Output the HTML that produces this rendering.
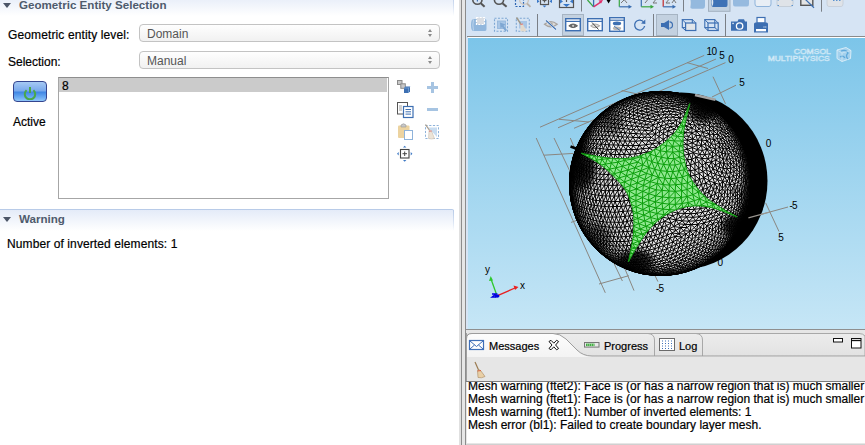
<!DOCTYPE html>
<html><head><meta charset="utf-8">
<style>
*{margin:0;padding:0;box-sizing:border-box}
html,body{width:865px;height:445px;overflow:hidden;background:#fff;font-family:"Liberation Sans",sans-serif;color:#000}
.a{position:absolute}
.t{position:absolute;white-space:pre;font-size:12px;line-height:14px;-webkit-text-stroke:0.2px #000}
.hdr{position:absolute;left:0;width:454px;background:linear-gradient(#e4ebf8,#fff);border-top-right-radius:2px}
.hdr::after{content:"";position:absolute;right:0;top:0;width:1px;height:100%;background:linear-gradient(#b8cbe8,rgba(184,203,232,0))}
.tri{position:absolute;width:0;height:0;border-left:4px solid transparent;border-right:4px solid transparent;border-top:5px solid #4b5567}
.htxt{position:absolute;white-space:pre;font-size:11.6px;font-weight:bold;color:#4e5b6d;line-height:14px}
.combo{position:absolute;left:139px;width:301px;height:18px;border:1px solid #c3c3c3;border-radius:4px;background:linear-gradient(#fefefe,#f1f1f1)}
.combo .v{position:absolute;left:7px;top:2px;font-size:12px;color:#555;line-height:14px}
.combo .up{position:absolute;left:288px;top:4px;width:0;height:0;border-left:2.5px solid transparent;border-right:2.5px solid transparent;border-bottom:3px solid #8a8a8a}
.combo .dn{position:absolute;left:288px;top:9px;width:0;height:0;border-left:2.5px solid transparent;border-right:2.5px solid transparent;border-top:3px solid #8a8a8a}
</style></head><body>
<!-- LEFT PANEL -->
<div class="hdr" style="top:-6px;height:22px;border-top:1px solid #b8cbe8"></div>
<div class="tri" style="left:3px;top:3px"></div>
<div class="htxt" style="left:19px;top:-2px">Geometric Entity Selection</div>

<div class="t" style="left:8px;top:28px;letter-spacing:0.12px">Geometric entity level:</div>
<div class="combo" style="top:24px"><div class="v">Domain</div><div class="up"></div><div class="dn"></div></div>
<div class="t" style="left:8px;top:55px">Selection:</div>
<div class="combo" style="top:51px"><div class="v">Manual</div><div class="up"></div><div class="dn"></div></div>

<!-- power button -->
<div class="a" style="left:13px;top:81px;width:34px;height:21px;border:1px solid #34458f;border-radius:4px;background:linear-gradient(#a6c9f3 0%,#79a9ec 47%,#3f86e4 53%,#6aaaf2 80%,#90c6f8 100%)"></div>
<svg class="a" style="left:22px;top:86px" width="16" height="14" viewBox="0 0 16 14"><path d="M4.6 4.2 A5.2 5.2 0 1 0 11.4 4.2" fill="none" stroke="#4aa84a" stroke-width="2"/><path d="M8 1 V7" stroke="#4aa84a" stroke-width="2"/></svg>
<div class="t" style="left:13px;top:115px">Active</div>

<!-- listbox -->
<div class="a" style="left:58px;top:77px;width:331px;height:122px;border:1px solid #a6a6a6;border-top-color:#8e8e8e;background:#fff"></div>
<div class="a" style="left:59px;top:78px;width:328px;height:14px;background:#cbcbcb"></div>
<div class="t" style="left:62px;top:79px">8</div>

<svg class="a" style="left:393px;top:76px" width="50" height="90" viewBox="393 76 50 90">
<g fill="none">
<rect x="397.5" y="80.5" width="4.5" height="4" fill="#c8c8c8" stroke="#8a8a8a" stroke-width="1"/>
<rect x="400.8" y="83.8" width="4.5" height="4.5" fill="#c8c8c8" stroke="#8a8a8a" stroke-width="1"/>
<path d="M404 88 L405.5 86.5 H410 V91.5 L408.5 93 H404Z" fill="#3d6fb2"/>
<path d="M404 88 H408.5 L410 86.5 M408.5 88 V93" stroke="#8fb6e0" stroke-width="0.6"/>
<rect x="427" y="86" width="11" height="3" fill="#a6c4e2"/>
<rect x="431" y="82" width="3" height="11" fill="#a6c4e2"/>
<rect x="397.5" y="102.5" width="10" height="11.5" fill="#fff" stroke="#555" stroke-width="1"/>
<path d="M399 106 h3 M399 108 h3 M399 110 h3" stroke="#8a8a8a" stroke-width="0.8"/>
<rect x="403.5" y="106.5" width="9.5" height="11" fill="#fff" stroke="#3d6fb2" stroke-width="1.2"/>
<path d="M405.5 109.5 h5.5 M405.5 111.8 h5.5 M405.5 114.1 h5.5" stroke="#3d6fb2" stroke-width="1"/>
<rect x="427" y="108" width="11" height="3" fill="#a6c4e2"/>
<rect x="398" y="125.5" width="11.5" height="12.5" fill="#ecd3a0" rx="1"/>
<path d="M401 127 V125 Q403.5 122.5 406 125 V127Z" fill="#c8c8c8" stroke="#999" stroke-width="0.6"/>
<rect x="404.5" y="130.5" width="8" height="9" fill="#fff" stroke="#8fb3da" stroke-width="1"/>
<rect x="425.5" y="125.5" width="13" height="13" stroke="#8fb3da" stroke-width="1" stroke-dasharray="2.2 1.5"/>
<path d="M428 127.5 H437 V137Z" fill="#c8dcf0"/>
<line x1="425.5" y1="124.5" x2="430" y2="131" stroke="#a89c8c" stroke-width="1.3"/>
<path d="M429 130.5 Q430.5 129.5 431.5 131 L434.5 138.5 Q431.5 139.5 428.5 138.5Z" fill="#ece4d8" stroke="#c0b4a4" stroke-width="0.5"/>
<line x1="429" y1="131.3" x2="431.8" y2="131" stroke="#e07070" stroke-width="0.8"/>
<rect x="400.5" y="149.5" width="8.5" height="8.5" fill="#fff" stroke="#444" stroke-width="1.1"/>
<path d="M404.7 151.5 V156 M402.5 153.7 H407" stroke="#444" stroke-width="1"/>
<path d="M403 147.5 L404.7 145.8 L406.4 147.5Z M403 160 L404.7 161.7 L406.4 160Z M398.7 152 L397 153.7 L398.7 155.4Z M410.7 152 L412.4 153.7 L410.7 155.4Z" fill="#3d78c4"/>
</g></svg>
<!-- warning header -->
<div class="hdr" style="top:209px;height:22px;border-top:1px solid #b8cbe8"></div>
<div class="tri" style="left:3px;top:217px"></div>
<div class="htxt" style="left:19px;top:212px">Warning</div>
<div class="t" style="left:7px;top:237px;letter-spacing:0.1px">Number of inverted elements: 1</div>

<!-- sash -->
<div class="a" style="left:459px;top:0;width:7px;height:445px;background:#e6e6e6;border-left:2px solid #e0e0e0"></div>
<div class="a" style="left:461px;top:0;width:1px;height:445px;background:#8c8c8c"></div>
<div class="a" style="left:465px;top:0;width:1px;height:445px;background:#8c8c8c"></div>

<!-- RIGHT: toolbar -->
<div class="a" style="left:466px;top:0;width:399px;height:37px;background:#d6e4f4"></div>
<div class="a" style="left:467px;top:36px;width:398px;height:1px;background:#8a8a8a"></div>
<div class="a" style="left:467px;top:37px;width:398px;height:1px;background:#fff"></div>

<svg class="a" style="left:466px;top:0" width="399" height="37" viewBox="466 0 399 37">
<g fill="none" stroke-linecap="butt">
<!-- row1 -->
<circle cx="477.4" cy="-0.3" r="4.6" stroke="#555" stroke-width="1.6"/>
<line x1="480.8" y1="3.2" x2="484.6" y2="6.8" stroke="#555" stroke-width="2"/>
<line x1="477.4" y1="-2" x2="477.4" y2="1.5" stroke="#3a6db0" stroke-width="1.2"/>
<circle cx="499" cy="-0.3" r="4.6" stroke="#555" stroke-width="1.6"/>
<line x1="502.4" y1="3.2" x2="506.6" y2="6.8" stroke="#555" stroke-width="2"/>
<rect x="515.5" y="-4" width="8" height="10.5" stroke="#2e66b2" stroke-width="1.2" stroke-dasharray="2 1.5"/>
<circle cx="524" cy="0" r="4.4" stroke="#cfc6bd" stroke-width="1.4"/>
<line x1="527" y1="3.5" x2="530.5" y2="6.8" stroke="#b8b0a8" stroke-width="1.8"/>
<rect x="540.5" y="-4" width="8" height="8.5" stroke="#555" stroke-width="1.2"/>
<line x1="544.5" y1="-2" x2="544.5" y2="2.5" stroke="#555" stroke-width="1.2"/>
<line x1="542.5" y1="0.5" x2="546.5" y2="0.5" stroke="#555" stroke-width="1.2"/>
<path d="M537 -1 L539.5 1.5 L537 3Z M552 -1 L549.5 1.5 L552 3Z M542.5 5.5 L546.5 5.5 L544.5 7.5Z" fill="#3a78c8" stroke="none"/>
<rect x="559.5" y="-4" width="14" height="11.5" stroke="#555" stroke-width="1.2"/>
<line x1="566.5" y1="-2" x2="566.5" y2="2" stroke="#555" stroke-width="1.2"/>
<path d="M560 -1 L563 1.5 L560 3.5Z M573 -1 L570 1.5 L573 3.5Z M563 4 L570 4 L566.5 7Z" fill="#3a78c8" stroke="none"/>
<line x1="581.5" y1="0" x2="581.5" y2="11.5" stroke="#7a7f86" stroke-width="1"/>
<line x1="593.6" y1="6.9" x2="587.5" y2="0" stroke="#3aa640" stroke-width="1.3"/>
<line x1="593.6" y1="6.9" x2="593.6" y2="-2" stroke="#3a6db0" stroke-width="1.3"/>
<line x1="593.6" y1="6.9" x2="601" y2="1.8" stroke="#e0306a" stroke-width="1.5"/>
<path d="M603 0 L598.5 0.5 L601 3.5Z" fill="#e0306a" stroke="none"/>
<path d="M606 -1 L611.2 -1 L608.6 3.5Z" fill="#000" stroke="none"/>
<line x1="619.3" y1="-2" x2="619.3" y2="6.8" stroke="#3aa640" stroke-width="1.2"/>
<line x1="619.3" y1="6.8" x2="629.5" y2="6.8" stroke="#3a6db0" stroke-width="1.2"/>
<path d="M632 6.8 L628.5 4.8 L628.5 8.8Z" fill="#3a6db0" stroke="none"/>
<line x1="641.3" y1="-2" x2="641.3" y2="6.8" stroke="#3a6db0" stroke-width="1.2"/>
<line x1="641.3" y1="6.8" x2="651.5" y2="6.8" stroke="#3aa640" stroke-width="1.2"/>
<path d="M654 6.8 L650.5 4.8 L650.5 8.8Z" fill="#3aa640" stroke="none"/>
<line x1="663.2" y1="-2" x2="663.2" y2="6.8" stroke="#c0282a" stroke-width="1.2"/>
<line x1="663.2" y1="6.8" x2="673.5" y2="6.8" stroke="#3a6db0" stroke-width="1.2"/>
<path d="M676 6.8 L672.5 4.8 L672.5 8.8Z" fill="#3a6db0" stroke="none"/>
<path d="M622 -3 L627 3 M627 -3 L621 3 M644 -3 L647 0 M650 -3 L645 3 M653 -2 L657 -2 L653 3 L657 3 M666 -2 L670 -2 L666 3 L670 3 M672 -3 L676 3 M676 -3 L672 3" stroke="#777" stroke-width="1"/>
<line x1="683.5" y1="0" x2="683.5" y2="11.5" stroke="#7a7f86" stroke-width="1"/>
<path d="M692 -3 H703 Q705 -3 705 0 V6 Q705 8.7 703 8.7 H692 Q690 8.7 690 6 V0 Q690 -3 692 -3Z" fill="#94b9de" stroke="none"/>
<path d="M690 -2 Q688.5 3 690 8 Q691.5 3 690 -2Z" fill="#dfe8f2" stroke="none"/>
<rect x="708.5" y="-1" width="21.5" height="12.3" fill="#c4d2e1" stroke="#a2b0bf" stroke-width="1"/>
<path d="M713 -3 H726 Q727.5 -3 727.5 0 V5 Q727.5 7 726 7 H713 Q711.5 7 711.5 5 V0 Q711.5 -3 713 -3Z" fill="#3f72b6" stroke="none"/>
<path d="M712.5 -2 Q711 2 712.5 6.5 Q714 2 712.5 -2Z" fill="#dfe8f2" stroke="none"/>
<path d="M735 -3 H747 Q749 -3 749 0 V4 Q749 6.5 747 6.5 H735 Q733 6.5 733 4 V0 Q733 -3 735 -3Z" fill="#96badf" stroke="none"/>
<path d="M757 -3 H769 Q771 -3 771 0 V4 Q771 6.5 769 6.5 H757 Q755 6.5 755 4 V0 Q755 -3 757 -3Z" fill="#e8eef5" stroke="#8fb3da" stroke-width="1"/>
<path d="M779 -3 H791 Q793 -3 793 0 V4 Q793 6.5 791 6.5 H779 Q777 6.5 777 4 V0 Q777 -3 779 -3Z" fill="#dfe3e8" stroke="#bfc8d2" stroke-width="0.8"/>
<path d="M777.5 5.5 h1.5 M791.5 5.5 h1.5 M777.5 0 h1.5 M791.5 0 h1.5" stroke="#5b93d0" stroke-width="1.2"/>
<rect x="800.8" y="-3" width="12" height="8.3" fill="#e4e4e4" stroke="#555" stroke-width="1.4"/>
<line x1="805.5" y1="-0.5" x2="814" y2="7.8" stroke="#3a6db0" stroke-width="1.2"/>
<line x1="821.5" y1="0" x2="821.5" y2="11.7" stroke="#7a7f86" stroke-width="1"/>
<path d="M829 -3 H841 Q843 -3 843 0 V4 Q843 6.5 841 6.5 H829 Q827 6.5 827 4 V0 Q827 -3 829 -3Z" fill="#dfe3e8" stroke="#c4ccd5" stroke-width="0.8"/>
<path d="M833 0.5 h1.5 M836 0.5 h1.5 M839 0.5 h1.5" stroke="#5b93d0" stroke-width="1.2"/>

<!-- row2 -->
<path d="M473.5 19 H485 Q486.5 19 486.5 21 V29 Q486.5 31 485 31 H473.5 Q471 31 471 25 Q471 19 473.5 19Z" fill="#91b7dd" stroke="none"/>
<path d="M473.5 19.5 Q472.2 25 473.5 30.5" stroke="#c8dbef" stroke-width="0.8"/>
<rect x="476.5" y="17.5" width="8" height="7" fill="#d9dde3" stroke="#fff" stroke-width="1.2" stroke-dasharray="2 1.2"/>
<rect x="494.5" y="18.3" width="13" height="13" stroke="#7ea7d3" stroke-width="1.1" stroke-dasharray="2 1.5"/>
<rect x="497.5" y="21" width="8" height="7.5" fill="#a9c6e6" stroke="#8fb3da" stroke-width="0.8"/>
<path d="M500 22.5 L500.5 28.5 L502 27 L505.5 31.5 L507 30 L503.5 25.8 L505.5 24.5Z" fill="#7ea7d3" stroke="none"/>
<rect x="516.3" y="18.3" width="13" height="13" stroke="#7ea7d3" stroke-width="1.1" stroke-dasharray="2 1.5"/>
<rect x="519" y="21" width="8" height="7.5" fill="#a9c6e6" stroke="none"/>
<line x1="516.5" y1="17.5" x2="521.5" y2="25" stroke="#a09888" stroke-width="1.4"/>
<path d="M520.5 24 Q522 23 523 24.5 L526.5 31 Q523.5 32 520.5 31 Z" fill="#e2d9cc" stroke="none"/>
<line x1="520.5" y1="24.5" x2="523" y2="24" stroke="#e06060" stroke-width="0.8"/>
<line x1="537.5" y1="14" x2="537.5" y2="36" stroke="#7a7f86" stroke-width="1"/>
<path d="M544.5 24.2 Q550.8 19 557.2 24.2 Q550.8 29.4 544.5 24.2Z" fill="#dcdad8" stroke="#a8a4a0" stroke-width="1.3"/>
<ellipse cx="550.8" cy="24.2" rx="2" ry="1.8" fill="#a8a4a0"/>
<line x1="546" y1="20.5" x2="556" y2="29.5" stroke="#fff" stroke-width="2"/>
<line x1="546" y1="20.5" x2="556" y2="29.5" stroke="#3a6db0" stroke-width="1.1"/>
<rect x="562.5" y="14.5" width="21" height="21" fill="#c3d1e0" stroke="#a6b4c3" stroke-width="1"/>
<rect x="565.7" y="18.7" width="14.6" height="12" fill="#fff" stroke="#3d6fb2" stroke-width="1.4"/>
<line x1="565.7" y1="21.4" x2="580.3" y2="21.4" stroke="#3d6fb2" stroke-width="1.2"/>
<path d="M568.8 25.8 Q573.1 22.2 577.5 25.8 Q573.1 29.4 568.8 25.8Z" fill="#6a6a6a" stroke="#555" stroke-width="0.9"/>
<circle cx="573.1" cy="25.8" r="1.1" fill="#ccc"/>
<rect x="587.7" y="18.7" width="14.6" height="12" fill="#fff" stroke="#3d6fb2" stroke-width="1.4"/>
<line x1="587.7" y1="21.4" x2="602.3" y2="21.4" stroke="#3d6fb2" stroke-width="1.2"/>
<path d="M590.8 25.8 Q595.1 22.2 599.5 25.8 Q595.1 29.4 590.8 25.8Z" fill="#e4e2e0" stroke="#b0aca8" stroke-width="1.1"/>
<line x1="592" y1="22.5" x2="598.5" y2="29.5" stroke="#444" stroke-width="1"/>
<rect x="609.7" y="17.7" width="14.6" height="13.6" fill="#fff" stroke="#3d6fb2" stroke-width="1.4"/>
<line x1="609.7" y1="20.2" x2="624.3" y2="20.2" stroke="#3d6fb2" stroke-width="1.2"/>
<ellipse cx="617" cy="23.4" rx="4.2" ry="1.9" fill="#3d6fb2"/>
<ellipse cx="617" cy="28.3" rx="4.2" ry="1.9" fill="#bbb7b3"/>
<line x1="614" y1="26" x2="620" y2="30.5" stroke="#3d6fb2" stroke-width="0.9"/>
<path d="M643.3 21.6 A5 5 0 1 0 644.6 26" stroke="#3d6fb2" stroke-width="1.3"/>
<path d="M645.3 19.6 L645.3 24 L641 23.5Z" fill="#3d6fb2" stroke="none"/>
<line x1="653.5" y1="14" x2="653.5" y2="36" stroke="#7a7f86" stroke-width="1"/>
<rect x="656.5" y="14.5" width="21" height="21" fill="#c3d1e0" stroke="#a6b4c3" stroke-width="1"/>
<path d="M661 23 H664 L669 20 V30 L664 27 H661Z" fill="#3d6fb2" stroke="none"/>
<path d="M669.5 21.8 A3 3.2 0 0 1 669.5 28.2" stroke="#3d6fb2" stroke-width="1.2"/>
<rect x="682.3" y="19.6" width="10" height="8" fill="none" stroke="#3d6fb2" stroke-width="1.1"/>
<rect x="685.6" y="23" width="10.2" height="7.5" fill="#e2e6ea" stroke="#3d6fb2" stroke-width="1.2"/>
<path d="M682.3 19.6 L685.6 23 M692.3 19.6 L695.8 23 M682.3 27.6 L685.6 30.5" stroke="#3d6fb2" stroke-width="1"/>
<rect x="704.8" y="19.6" width="10" height="8" fill="none" stroke="#3d6fb2" stroke-width="1.1"/>
<rect x="708" y="23" width="10.2" height="7.5" fill="none" stroke="#3d6fb2" stroke-width="1.2"/>
<path d="M704.8 19.6 L708 23 M714.8 19.6 L718.2 23 M704.8 27.6 L708 30.5 M714.8 27.6 L718.2 30.5" stroke="#3d6fb2" stroke-width="1"/>
<line x1="725.5" y1="14" x2="725.5" y2="36" stroke="#7a7f86" stroke-width="1"/>
<path d="M731 21.6 H737.5 L738.5 19.3 H744 L745 21.6 H747 V30.7 H731Z" fill="#3d6fb2" stroke="none"/>
<circle cx="739.6" cy="26" r="3.2" fill="#3d6fb2" stroke="#fff" stroke-width="1.3"/>
<rect x="732.4" y="22.8" width="1.3" height="1.3" fill="#fff" stroke="none"/>
<rect x="757" y="17.5" width="8" height="5.5" fill="#fff" stroke="#3d6fb2" stroke-width="1.2"/>
<path d="M755.5 22.5 H766.5 Q768 22.5 768 24 V32.5 H754 V24 Q754 22.5 755.5 22.5Z" fill="#3d6fb2" stroke="none"/>
<rect x="756" y="29" width="10" height="2.3" fill="#fff" stroke="none"/>
<rect x="763.5" y="26.5" width="1" height="1" fill="#fff" stroke="none"/>
<rect x="765.3" y="26.5" width="1" height="1" fill="#fff" stroke="none"/>
</g></svg>

<!-- viewport -->
<div class="a" style="left:466px;top:37px;width:2px;height:292px;background:#d6e4f4"></div>
<div class="a" style="left:468px;top:38px;width:397px;height:291px;background:linear-gradient(#7cc5e9,#c6e6f6)"></div>
<!--VIEW--><svg class="a" style="left:468px;top:38px" width="397" height="291" viewBox="468 38 397 291">
<defs>
<path id="mesh" transform="scale(0.1)" d="M5850 2224l-21 -12M5797 1679l-16 -11M7327 1577l20 -21M7346 1353l29 44M6407 1006l-27 -10M5822 1857l-22 -10M6725 1996l16 43M7092 2337l-36 36M6876 1094l-7 -26M5854 1306l-25 40M6123 1751l-39 -6M6053 1908l6 51M6426 1044l16 -28M6870 2685l-21 19M6995 1038l-21 -17M6632 1336l0 58M7508 1803l3 50M6975 2617l28 4M6745 925l-50 -7M6128 1068l-17 2M6739 2495l30 25M7327 1577l10 49M6863 957l-3 -6M7368 1326l31 51M6895 2688l-46 16M6439 2743l18 0M5903 2390l-19 -11M7443 2094l-10 38M6276 2111l-26 51M6062 1184l-41 42M6523 1310l-74 -7M6126 1854l7 53M6929 1391l-8 38M7200 1845l24 39M7234 2126l-47 20M5713 1812l2 56M6485 2710l-16 12M5865 1306l-31 42M6514 2457l31 31M6702 1693l-3 52M7317 2068l-10 48M7418 1685l15 -41M6380 965l-43 15M5731 1575l-12 40M6508 2573l-50 10M6736 1018l12 -18M7314 1266l22 19M7501 1748l5 -13M7065 1127l-37 -33M5884 1400l5 -43M7317 2267l-23 37M6919 2512l-41 24M6313 2644l-29 -2M6929 1391l-55 10M7434 1809l11 68M6948 995l-24 -13M6295 1142l-44 -6M7418 1685l0 53M6780 929l-7 -3M6324 1635l-11 47M6371 941l43 -9M6380 2645l-14 18M6274 2571l-5 29M6344 2686l-29 -4M6387 1377l-57 -4M5750 1512l-13 37M7239 1987l29 28M6692 2289l30 40M5997 1395l-25 46M7232 1383l22 52M5837 1698l-20 -8M6464 936l-15 -5M7169 1873l-16 65M6640 1724l-53 -22M5879 2348l-19 -10M6845 2399l-44 26M7352 2145l-15 39M7158 2260l-33 38M6102 2584l-29 -13M7048 1548l-52 -3M6894 1129l-59 -35M6599 990l17 -18M6754 2732l-19 11M7515 1769l1 -22M6102 2596l-32 -16M5898 1986l-17 55M5772 1539l-9 38M7085 1122l-19 -32M6572 1038l-43 -20M5905 1360l10 -46M7005 2456l-15 47M6417 2740l-32 -8M6768 1258l-23 32M5868 2383l-6 -9M5976 2157l-11 51M6758 2086l-65 -11M6129 2557l28 28M6894 963l-34 -12M6061 1100l-4 -2M6074 2017l-39 -5M7195 1473l26 60M5702 1920l7 62M6874 2424l28 24M6447 1371l-30 36M6658 2757l-21 2M6338 2697l-6 7M7108 1724l20 54M7464 1646l17 57M7271 1290l-26 -46M6013 1135l-47 41M7444 2203l-18 40M6768 1258l-39 -27M7200 2012l-17 55M7340 1673l26 -21M6585 1854l-58 -28M7287 1222l-17 -22M6682 2440l33 28M7256 2447l-21 35M5755 1576l-17 38M6326 2405l-17 49M6730 1037l-53 -4M6922 2603l-18 31M7503 2010l-4 17M6367 2700l-29 -3M6456 2747l22 4M6615 2717l-19 15M7089 1095l30 12M6295 2261l23 48M6426 1044l-34 -13M6563 1284l-11 56M6364 1828l-50 7M5746 1613l-8 1M7238 2502l14 -13M5937 1309l-22 5M6803 2632l-17 29M6353 2676l25 15M7267 1593l-31 41M7258 2383l-11 36M7340 1673l-1 43M5804 1391l0 6M7497 2033l6 -23M6329 1456l-15 39M6089 1449l-37 -5M7508 1803l7 33M6748 2364l26 33M6888 2212l23 34M6184 1591l-11 52M7141 2416l27 5M6895 970l29 6M7134 1897l19 41M7302 1322l12 -10M6093 2274l-40 -9M7234 2126l-21 44M7285 2454l-33 35M7272 1204l-29 -27M6217 2539l27 33M6226 1018l-16 -2M6730 919l35 6M6463 2376l-50 11M6607 2422l29 34M7027 1323l-64 -12M6684 2751l-47 4M6736 1018l-39 -25M7061 1048l38 19M6814 1659l-9 52M6302 1075l-32 -12M5992 1263l9 -40M6004 2352l0 44M6276 1456l-26 -46M5750 1991l11 63M6243 1544l-11 50M6144 1960l-31 53M6289 2003l14 52M6219 2673l18 9M7204 1332l9 -22M6821 939l35 7M6596 2732l33 9M6244 1024l27 -28M5892 2415l26 30M5972 2381l6 41M5924 2243l-26 -5M5746 1529l-15 46M6285 2686l-26 -5M5702 1689l7 -28M7348 1321l-2 -14M6575 2520l29 28M5805 1441l-6 -5M6271 2215l-23 53M6869 1068l-41 -26M6874 1493l18 48M6123 1148l-28 -3M6489 920l-50 8M7423 2236l-15 31M5876 1562l-25 -3M6705 2662l-19 28M6730 2751l21 -3M6599 990l-37 -15M6754 1806l-3 54M7101 1388l11 49M6758 2086l-42 31M7500 1655l-2 -20M7024 1657l-37 26M5694 1821l-3 9M7472 1764l9 60M5862 2374l-24 -40M6518 917l-54 6M5838 1648l-21 -8M6837 1212l1 -47M6760 2200l-70 -15M7380 1356l29 51M5960 2005l-18 48M7361 1315l-14 -22M6716 2117l16 41M5957 2488l24 22M7513 1724l4 48M7252 2489l7 -9M7180 1978l-47 24M6585 1854l-54 27M5943 1892l8 58M5963 1177l-2 3M7516 1747l1 25M6337 2493l-13 42M6830 1501l-34 48M5724 1983l11 55M6458 2583l-18 33M7283 1540l25 -15M5862 2374l0 -8M6694 1846l-57 -17M6180 1016l-7 6M7517 1772l-3 28M6714 1946l11 50M6667 2144l23 41M5898 2093l-14 48M6274 973l-48 20M6334 1297l-17 -38M6214 2598l-28 -6M6550 2139l23 49M6095 1145l22 -38M6434 2131l-45 11M7018 1059l-23 -21M6427 980l-47 16M6698 2514l-20 43M5760 2097l-11 0M6186 2539l31 34M6228 1093l16 -35M6895 970l-1 -7M6046 2064l-33 -2M7381 1345l30 52M5815 2302l-23 -44M6425 1485l-17 46M6127 2499l30 37M7431 2186l-3 25M6581 2075l-67 -26M6262 1029l26 -29M6563 2752l-49 -2M6803 2719l-23 15M7186 2462l23 -1M5930 1217l-38 42M7460 2140l-2 21M5731 2087l-4 1M6310 1006l-22 -6M6747 1541l-46 -10M7410 2266l-21 35M6710 1643l-8 50M6430 2235l-50 13M7293 2041l-13 54M7394 1670l21 -31M6663 1978l-61 -22M6936 2697l14 -5M6226 993l-2 1M6596 2732l-18 12M5872 2271l23 49M5785 1627l-17 35M6801 2425l-10 47M6223 1370l-17 -45M6990 2503l-43 28M5761 2054l-1 43M6976 2438l29 18M7021 1043l28 9M6276 1456l-45 -2M6974 1011l-26 -16M6431 927l-8 2M6389 2679l-36 -3M7399 1441l22 47M6023 1958l-24 49M6821 939l-5 -4M5935 1834l-27 55M7027 2352l-13 57M6748 2708l28 7M6454 991l22 -22M7040 2649l11 -8M7428 1862l17 15M5915 1314l-26 43M7133 1343l36 42M6643 1675l-45 -20M5697 1944l6 47M6816 935l-43 -9M6061 1138l24 -36M5747 1576l-17 40M6700 2382l-45 20M7068 1492l28 45M7500 1814l-5 64M6780 2734l24 0M6039 1797l-35 50M7212 2339l29 4M6166 2417l29 43M6501 923l-52 8M6624 1033l-46 -22M6858 1259l-42 21M6168 1041l-40 27M6977 1002l33 12M7440 2180l8 -5M7314 2177l23 7M6150 1546l-44 -4M5929 2458l-11 -13M6406 2291l-21 54M7290 1370l27 -4M7433 1457l21 54M6280 1590l-37 -46M6447 2018l16 53M6545 2488l30 32M6311 2691l-44 -17M7352 2369l-28 37M5842 1399l-18 42M6353 2716l-48 -17M7068 1492l-20 56M7380 1356l23 32M7091 1660l17 64M5888 1261l0 0M6332 1012l22 -24M6114 1495l-8 47M7358 2322l-24 38M6816 1403l-50 -8M5866 1439l-16 -1M7202 2535l-27 23M6095 1145l-18 -4M7180 1978l-22 58M6583 1804l-57 -24M5950 1265l-35 49M6162 2462l-6 37M7014 1217l8 -29M5914 2421l23 31M7416 1792l-8 53M5716 1985l-7 -3M6608 1185l-49 15M6694 1846l-52 35M7078 1752l50 26M5905 1360l-21 40M6244 2415l26 42M6648 2728l35 6M7106 1123l29 11M5702 1920l-4 10M7158 2036l25 31M6189 2504l-33 -5M7388 2227l12 -4M7452 2093l-19 39M7221 1533l-24 38M6414 1340l-21 -40M6354 2444l-45 10M6936 2697l-27 10M5914 2421l-20 -15M7310 2422l-25 32M7078 1752l-39 23M7381 1345l18 32M7177 2526l-44 36M5864 1710l2 57M6442 1016l-50 15M6044 2565l-18 -20M7215 2231l-2 59M6652 1514l-42 -21M6835 1094l-44 8M6299 2670l-7 8M7327 1269l34 46M7208 2100l-21 46M7027 1323l1 -51M7340 2231l-23 36M5773 1510l-17 32M6204 2170l-42 1M7460 1880l-12 57M6663 1978l-49 27M7506 1985l-3 25M7335 1361l-21 -49M7082 1066l35 18M6178 2633l-47 -25M6223 1370l-44 -7M7212 2516l13 -6M7187 2146l26 24M6779 2743l-49 8M6691 1203l-26 -30M7021 1043l6 -9M7447 2190l-18 37M6301 1412l-27 -42M5972 1441l-47 42M5736 1876l5 60M7358 2263l-4 31M5750 1512l-16 42M6266 1688l-50 4M6707 2581l-15 38M6748 1000l-51 -7M5969 1839l6 59M6763 1653l42 58M7086 2567l-19 29M6861 2654l27 7M6314 1042l-44 21M6048 1102l-42 36M7335 1361l27 43M6031 2216l-14 47M6397 2735l-36 -9M6301 2602l-32 -2M6469 2722l33 12M6643 1675l-56 27M5792 1476l-19 34M7019 1585l35 43M7418 1738l22 13M7483 1945l-14 52M5992 1263l-35 47M6564 2723l-46 0M7134 1235l32 -2M6191 1014l-44 25M5819 1795l-24 -7M6763 1653l-53 -10M7500 1814l3 54M7096 2279l29 19M7433 2161l-12 33M6508 1220l-19 -32M6012 1311l4 -45M6977 1002l5 -4M6872 1046l-44 -4M6209 1500l-26 -49M6979 2542l-39 25M7019 1585l-30 31M7433 1457l18 34M6616 972l-54 3M6280 1590l-48 4M6545 2488l-16 44M6126 1693l-3 58M6389 2142l-28 60M7380 1368l29 51M6131 2608l20 17M6332 1012l-22 -6M5984 1309l8 -46M6693 2075l23 42M6955 2363l30 23M6944 2420l-42 28M5976 2157l20 56M6525 2309l-46 14M5737 1549l-10 38M6583 1804l-56 22M5734 1554l-13 44M7467 1824l14 0M5843 2081l-24 -11M5741 2138l17 43M6068 2583l20 15M6804 2734l23 -3M7357 2190l-17 41M6500 2753l-44 -6M6325 2673l19 13M7281 2378l-11 36M7143 2579l-40 27M7503 2010l4 -24M5961 1480l-15 49M5798 1511l-9 -2M6250 2162l-20 59M6729 1231l-62 12M6367 1264l-15 -38M7500 2002l-10 47M6927 972l3 -2M7320 2224l20 7M5863 1358l-21 41M5738 2089l6 43M5692 1782l-1 48M6414 1340l-54 -4M6780 1497l16 52M6644 2631l-54 12M6476 969l-49 11M7287 1401l31 40M7395 1369l28 53M5864 1710l-25 41M6032 1136l-39 39M6686 2690l-23 21M7052 1441l-38 13M5981 1532l-20 -52M5749 2097l-11 -8M7339 1716l30 30M7327 1269l20 24M7041 1063l-46 -25M6803 2632l28 13M7495 1878l8 -10M5738 1653l-16 50M7458 2168l5 -18M6780 1497l-52 -15M7460 1880l1 63M7026 2121l-60 13M6924 976l-30 -13M6713 2701l-50 10M5690 1841l2 9M7358 2263l15 -5M6433 2681l-17 13M6803 2170l-43 30M7082 1066l17 1M6100 1104l-39 34M5899 1257l-7 2M6531 1252l-40 24M7168 2421l-37 36M7388 2306l9 -10M6301 1412l-51 -2M5929 1999l-31 -13M7254 2071l26 24M6653 2747l-16 8M7360 2354l-28 38M7387 1447l21 45M5884 1520l-33 39M7221 2424l-35 38M6591 1908l11 48M7088 1920l-23 61M6133 1043l-2 2M5746 1516l-1 7M7408 1845l20 17M6994 2332l-9 54M6922 2699l-46 15M6479 2545l29 28M6659 1622l-47 -17M7483 1945l-4 49M5796 2061l17 57M7147 2367l-6 49M6856 946l-40 -11M6338 2697l-27 -6M7492 1819l-7 67M5804 1397l-22 40M6393 1300l-33 36M6049 1587l-7 50M6976 1497l-54 -20M6508 1220l-62 -11M7113 1856l21 41M5691 1791l1 11M6081 1852l-36 2M6575 911l44 1M5816 2300l22 34M5879 1877l-22 50M5743 1544l-6 5M6313 1783l-51 8M6361 2202l-22 56M6590 2643l35 19M7249 1363l41 7M6540 1934l-61 -33M6950 2692l-28 7M6931 1143l-37 -14M7196 2522l-44 37M7198 2421l-40 38M5740 2135l1 3M6261 2503l26 36M7236 1634l34 54M7380 1368l29 39M5978 2422l29 41M7121 1158l-36 -36M6934 2640l-17 25M6633 1009l-55 2M6380 996l25 -24M6059 1959l-36 -1M6035 2441l-29 -9M6886 1364l-58 -4M5866 1767l4 49M7033 1029l-23 -15M6852 944l42 15M6665 1173l-57 12M6696 1796l-59 33M7064 1696l44 28M7094 1261l35 8M7121 1158l24 3M6498 1999l-62 -33M6367 1264l-50 -5M5763 2187l17 40M7133 2002l25 34M6186 2539l1 30M5863 1358l-31 40M7445 2194l7 -11M6463 2376l25 41M7285 2438l-23 34M6449 1303l-25 -33M6876 2714l-47 13M7362 1404l13 -7M6370 1878l-52 12M6294 971l-48 20M6918 1102l-49 -34M7395 1369l16 28M7431 2186l9 -6M6494 1004l-52 12M5760 1508l-6 1M6091 1906l-38 2M5721 1598l-9 40M6598 2123l-48 16M5763 2187l-5 -5M5850 2266l22 44M6053 1908l-30 50M6583 2705l-54 4M6193 2661l-29 -19M7047 1029l43 23M6991 998l-31 -15M6168 1695l-42 -2M7460 2140l10 -14M6122 2170l23 52M7046 2594l-43 27M6696 2720l-48 8M6276 2111l18 49M7300 1589l37 37M5886 1438l-2 -38M6529 2100l21 39M6550 2139l-24 68M5715 2037l-11 -46M6377 940l46 -11M5780 2192l8 42M7490 2049l-10 39M7029 1716l10 59M6285 2686l-44 -18M7317 1366l-15 -44M7111 2058l-53 18M7173 2552l-42 32M7161 2121l26 25M6068 2410l28 44M7041 1063l8 -11M5709 1926l-7 -6M6791 1010l-43 -10M5776 2225l-21 -49M6779 1598l35 61M5785 1627l-4 41M7317 1366l28 42M7495 2049l-12 46M7153 2532l-20 30M7002 1002l42 22M6705 1898l9 48M6129 2532l29 30M6130 2458l-34 -4M7134 2589l-42 28M5850 1438l-15 40M6659 1622l-61 33M7483 1945l6 37M6742 2600l-50 19M7397 1724l21 14M6110 1192l13 -44M6416 2694l-13 11M6506 2694l-47 2M6997 1795l-43 12M6213 1796l-45 3M7029 1895l17 42M7492 1819l3 59M5779 1471l-12 36M7133 2166l-58 22M7401 2291l5 -11M6419 1865l-55 -37M5780 1542l-17 35M7061 1306l-17 -62M6909 1074l-40 -6M6764 987l20 -10M6669 973l-53 -1M6963 1311l-40 -30M7270 2302l-1 39M5696 1767l-4 15M6073 2571l-3 9M5823 1398l-18 43M6380 996l-26 -8M6680 2026l13 49M5797 1679l-2 53M6175 2651l-41 -23M6419 2727l-35 -6M6852 944l5 4M6789 2339l26 30M5834 2125l-4 47M5959 1352l-2 -42M6598 913l-17 -2M7166 1233l47 46M6996 1952l-54 10M5778 2057l-3 49M6000 1688l-37 -8M6067 1399l-12 -44M6213 2064l-28 55M6241 2668l-24 -6M7131 2584l19 -8M7384 1356l33 59M6006 1138l-40 38M5942 2053l-30 -5M6990 1147l-8 -38M7034 2471l-44 32M7276 2462l-24 27M6910 1053l-35 -26M6449 1303l-56 -3M6073 2517l30 34M6819 1448l11 53M6640 957l27 -11M5965 1791l-38 -10M6850 2518l-44 23M5807 1906l-14 51M7135 1134l-16 -27M6067 2485l-30 -9M7138 1083l43 33M6627 2053l-63 -24M6751 2748l19 -6M7232 1588l4 46M6022 1352l-36 0M7307 1682l32 34M6217 2539l0 34M6122 2170l-17 51M6439 2743l-54 -11M5774 1946l8 57M6036 2404l28 44M7008 2551l-42 27M7004 2086l-60 7M6948 987l-24 -11M6938 2669l-43 19M6281 971l-55 22M6143 1194l9 -42M6838 1165l12 -39M5736 1876l-8 53M6028 2117l-17 50M5956 1218l-34 44M7111 2058l-29 50M7335 1765l34 -19M6199 1015l-52 24M6158 1039l-53 28M6137 2363l29 54M6314 2712l17 6M6181 1157l-29 -5M6151 2015l-21 50M6887 1017l10 -8M6814 935l-49 -10M5972 1441l-11 39M6330 1373l-56 -3M6677 1577l33 66M6508 951l31 -15M5999 1743l-38 -9M6306 2660l19 13M5789 1509l-17 30M5948 2475l-19 -17M6584 1752l-56 -23M6732 2158l28 42M7117 1084l-18 -17M6128 1050l-44 28M5815 2302l1 -2M6144 1960l7 55M5924 1217l-2 4M7335 1765l-16 41M7002 1002l10 7M6202 2415l-36 2M6274 1370l-24 40M6927 2338l-40 28M5697 1944l-3 -46M6667 1243l-24 44M6958 986l33 12M7028 1272l-40 -24M7305 2400l-20 38M7447 1474l21 56M5990 2502l2 14M7133 2166l-31 46M6608 2751l-45 1M5866 1439l-14 39M6523 2677l-17 17M6804 970l21 -3M7092 1807l21 49M7469 1997l10 -3M5792 1476l-11 33M7448 2175l-12 30M6764 987l-24 -19M6880 1206l-43 6M6531 1881l-57 -34M6684 2757l-47 2M6151 2322l-14 41M5728 1929l8 59M6186 2592l25 23M6111 1070l-50 30M6555 2692l-49 2M6760 2200l-47 30M7081 2527l24 4M7381 1386l28 33M7119 1196l-23 -35M7394 1890l-20 47M6995 2672l-28 10M6237 991l-46 23M7040 2649l-45 23M7067 2596l-38 24M7102 1086l37 20M5993 1175l-46 40M6989 1616l-2 67M7515 1886l1 31M7157 2316l-36 37M6892 957l39 15M6690 2185l23 45M7185 2328l-38 39M7005 2270l-11 62M6232 2317l26 48M7369 2318l-26 41M6880 1206l-42 -41M5793 2199l21 49M6996 1952l-35 54M7409 1419l0 -12M7443 1471l23 59M7004 1356l12 44M6385 2345l-44 10M7071 2617l-22 22M7074 1879l-45 16M6020 1532l-23 -48M7111 1962l22 40M7169 1385l22 44M6563 1580l-50 -27M6041 2504l-28 -10M6640 957l-24 -14M6645 1144l-37 41M6093 2274l22 48M5857 2131l-7 45M6502 2269l-50 13M7285 2454l8 -10M5716 1756l-3 56M7233 1684l-12 42M5718 2033l-3 4M6352 1226l-35 33M5843 2327l-12 -8M6828 1360l-34 -47M6897 2705l-30 15M6110 1231l0 -39M7075 1048l42 24M5838 2334l24 32M6852 2720l-25 11M5829 1917l13 58M6184 1014l-4 2M5898 2093l16 56M6645 1144l-13 -26M6288 1035l-44 23M7004 2086l-38 48M6650 2532l28 25M7423 1422l-12 -25M7024 1505l-28 40M5735 2038l3 51M5961 1180l-40 46M6141 2628l-28 -14M5858 1303l-29 42M7089 2020l-53 15M6728 1482l-27 49M6474 1697l-50 -34M7103 2449l28 8M6508 951l-20 -9M6287 2539l-13 32M6449 2662l26 17M7128 2236l-58 23M6584 1752l-58 28M6526 2207l-49 18M6831 1025l-40 -15M5805 1441l-13 35M5704 1991l9 47M6234 1286l-28 39M6275 2692l-42 -18M6748 2708l-23 19M5726 2035l-8 -2M7179 1177l33 22M7032 1017l45 26M7385 2256l-17 31M6057 1098l-44 37M7408 1492l13 -4M6958 986l2 -3M6727 2418l-45 22M6671 2649l34 13M6089 2596l24 18M5946 1529l-43 38M5986 1951l13 56M6991 1735l-42 17M6284 2642l-3 14M6531 960l-55 9M6909 2707l-33 7M6831 2450l-40 22M5849 1871l-20 46M5829 2212l21 54M5774 2221l2 -1M6000 1688l-1 55M7462 2050l0 38M6804 970l-16 -14M6612 1605l-14 50M5785 1474l-18 33M7393 1773l25 -35M5714 1704l-8 11M6315 2682l-4 9M6039 1797l6 57M6808 998l14 -9M6531 1881l-52 20M7485 1886l10 -8M6083 1643l-43 46M6333 956l-7 -1M7180 1133l41 32M7394 1890l6 69M6274 2571l27 31M7102 1086l15 -2M6048 2547l25 24M5815 1739l4 56M7451 1520l3 -9M6892 957l2 2M7129 1269l38 25M7070 2630l-30 19M7117 2496l29 2M6976 1909l-48 4M5792 2113l16 49M6405 972l-51 16M7478 2110l-6 20M6169 1852l9 54M6934 2640l24 4M6487 1950l-51 16M6158 2562l-1 23M7074 1879l-28 58M7185 1514l36 19M7399 1377l29 55M6528 1729l-2 51M6761 2445l-46 23M7083 2623l-43 26M7452 2093l-11 39M5720 1603l-10 42M6048 2547l-26 -12M5950 1265l-46 46M7384 1821l24 24M6365 944l-47 14M6309 2454l-39 3M7131 2532l22 0M6098 1067l-50 35M7145 1161l-10 -27M5922 1221l-33 41M6762 1202l-33 29M7433 2132l8 0M7441 2132l1 23M6102 2568l0 16M7185 1514l12 57M7075 1048l15 4M6918 1037l-43 -10M6424 1270l-31 30M7401 2197l-1 26M6960 1572l-42 22M5884 2379l10 27M7221 2424l26 -5M6650 2532l-16 42M6639 1453l-29 40M6133 2580l-31 -12M7089 2020l-31 56M7304 1728l35 -12M7268 2466l-36 34M5750 1542l-17 38M6982 1109l38 2M6814 2734l-44 8M6918 1037l9 -9M6474 1697l-51 16M7431 1923l17 14M5739 1706l-8 -4M5815 2302l24 39M7269 2341l-11 42M6431 2741l-34 -6M6293 2625l-9 17M6463 2071l-64 -40M6587 1702l-54 -23M6047 2170l-36 -3M7139 1106l-22 -22M6559 1200l-28 52M6294 2160l-44 2M6867 2720l-23 8M6960 2684l-39 17M6904 2634l-16 27M6726 1171l-61 2M6110 1192l-26 -6M7032 1017l12 7M6303 1334l-29 36M5706 1869l-4 51M6591 933l-52 3M5691 1830l1 51M6181 1044l29 -28M7345 1408l17 -4M5894 2406l-39 -48M7107 2138l-32 50M7008 2662l11 -3M6596 2235l-26 57M5810 2207l-17 -8M7352 2369l8 -15M7119 1107l-48 -34M7432 1983l-19 46M6217 2573l23 27M7457 2002l12 -5M5761 2137l-8 2M5817 1640l-20 39M6808 998l-24 -21M6726 1591l-16 52M6527 1826l-56 -26M6529 2709l35 14M7411 2219l-7 30M5765 1471l-19 45M6193 1545l-43 1M6157 2536l1 26M7180 1133l21 7M6541 1166l-52 22M6085 1102l-11 -3M6350 956l37 -16M7057 1830l56 26M6555 2353l-48 10M6585 2588l-18 34M7187 2545l15 -10M6200 1410l-17 41M5714 2042l3 5M6780 2132l-20 68M6416 2590l24 26M7119 1107l41 24M5756 1655l-5 52M6573 925l36 -8M7136 2090l25 31M7232 1383l17 -20M5808 2162l2 45M7357 2190l2 41M7207 2380l26 5M6976 1909l-34 53M6752 2649l-14 27M6403 2705l24 13M7407 1433l2 -14M6052 1223l10 -39M6678 2557l29 24M5763 2187l-22 -53M7353 1909l21 28M7399 1377l18 38M5746 1613l-8 40M7451 2050l-19 44M6858 2340l-13 59M5889 1357l15 -46M6905 2553l-10 38M6692 961l-25 -15M6703 1141l-38 32M7481 2064l9 -15M7112 1437l-15 35M6077 1141l-53 35M5729 1656l-7 47M6478 1153l-11 -30M6390 1200l-38 26M6225 2503l-36 1M6614 2005l-50 24M6036 2404l-1 37M6004 1634l-36 -2M5957 1310l-20 -1M5821 2310l22 37M7099 1067l42 25M7158 2194l30 22M6141 2628l18 13M7428 2211l-5 25M6581 2075l-52 25M6156 2499l-29 0M6162 1320l-26 39M6953 1119l-35 -17M6281 971l-44 20M7428 1437l-5 -15M5803 1390l1 1M7385 2256l11 -4M6735 2743l20 2M5857 1927l-15 48M6032 1136l-50 39M7354 1974l-29 34M6199 1015l-41 24M7512 1785l7 34M5817 1690l-20 -11M7105 2531l26 1M5908 1889l6 53M6078 1226l6 -40M7512 1938l-6 47M6831 2450l33 24M6042 1268l10 -45M6769 1442l-41 40M5781 1668l-13 -6M6944 2093l22 41M6785 2238l21 37M7519 1823l-2 47M6181 1044l-13 -3M6587 1702l-59 27M6987 1683l42 33M6339 1189l-5 -37M5799 1436l-6 -1M7027 1323l-23 33M5924 2243l25 52M5741 2134l17 48M7375 2229l-2 29M5819 1795l3 62M6259 1743l-43 -51M7342 1481l21 47M7394 1497l14 -5M6982 998l9 0M5774 2221l18 37M5789 1509l-9 33M6987 1683l-38 16M5873 1307l-34 44M7391 2068l-27 34M6589 958l-58 2M5976 2300l-27 -5M6549 2735l29 9M5741 2134l-1 1M6646 2100l-48 23M6341 2355l26 43M7432 1983l-4 57M6553 2562l-45 11M6628 1558l-16 47M6206 2274l26 43M7472 2130l-9 20M6347 2645l-34 -1M7324 2406l-23 23M5801 2272l-5 -5M6399 2031l-48 11M7358 2322l-15 37M6113 2013l-39 4M6527 1826l-53 21M5829 1345l-24 44M6222 1246l-5 -43M5884 2141l20 48M6967 1452l-45 25M6361 2202l19 46M6985 2046l-61 7M6825 967l-37 -11M7101 1388l39 9M7056 2373l-42 36M6093 1593l-51 44M7119 1107l20 -1M7426 1541l14 54M5788 2234l21 43M6474 1847l5 54M6859 2723l-45 11M5808 1390l-3 -1M6151 2322l28 50M6560 945l31 -12M6725 2727l29 5M6455 959l-50 13M6047 1313l-25 39M6644 2631l27 18M5741 2138l-10 -41M7480 2088l-2 22M5957 2443l-26 -14M7057 1830l-28 65M5694 1898l5 52M5757 1939l-7 52M7515 1836l0 50M6467 1089l2 -31M5841 1810l-22 -15M7361 1795l23 26M5919 2327l2 40M7507 1961l-8 47M6179 1363l-43 -4M6187 2569l-1 23M6129 1646l-36 -53M5709 1755l-4 55M6874 2424l-10 50M6099 1961l-40 -2M6171 2640l-30 -12M5793 1435l-14 36M6478 1153l-57 -12M7148 1196l-3 -35M5985 2259l22 47M6427 1911l9 55M6890 2714l-31 9M6991 2167l-60 7M6598 2123l-25 65M7044 2426l26 13M6007 2463l6 31M6169 2065l-39 0M7099 1067l18 5M7238 2502l-25 24M7445 2194l-8 24M6947 1066l-37 -13M7469 1576l12 57M6843 983l14 -4M6131 2594l27 23M6250 1410l-50 0M5904 2189l20 54M6380 2248l26 43M5834 1348l-3 -1M6433 952l31 -16M6775 1351l-47 -16M7487 1594l15 63M7442 2155l-11 31M7117 1072l-27 -20M7270 1688l37 -6M7105 2531l-19 36M6060 1541l-11 46M5979 2452l-22 -9M7022 1188l22 -14M7372 1867l-19 42M7415 1908l16 15M6040 1689l-41 54M6767 2687l-54 14M6041 1107l-42 36M7213 1279l40 55M6774 2397l-47 21M7102 2212l-32 47M6150 2637l14 5M7270 2414l19 -6M6339 1189l-42 -9M6592 1427l18 66M5996 2213l21 50M6385 2732l14 1M6100 2363l31 50M7376 1570l14 51M6797 1178l-71 -7M6414 932l-49 12M7061 1034l16 9M6502 2752l-45 -9M6144 1236l-34 -5M5732 1560l-12 43M6270 2457l-9 46M6020 2543l-24 -18M6157 1405l-22 44M6744 947l32 -2M5900 1830l8 59M6730 2751l-28 3M6024 1176l-43 46M5956 2106l-28 -6M6592 1427l-40 -26M7061 2319l-34 33M7319 1406l26 2M6053 2265l-36 -2M7077 1043l-33 -19M7462 2088l10 -12M6168 1799l-45 0M7200 1625l-8 45M7511 1963l-8 47M6164 1746l4 53M5839 1751l2 59M7409 1407l19 30M7415 1975l-20 40M5740 2135l-14 -44M7133 1343l9 -29M6423 929l-9 3M6917 2665l-47 20M6949 1752l5 55M6869 2056l-69 -4M6222 1246l-42 -6M6039 1743l-40 0M5699 1869l-5 9M6385 2345l28 42M6588 1153l-47 13M6114 1495l-25 -46M5973 2502l23 23M6364 1776l0 52M5919 2285l0 42M7426 1541l28 53M7175 1266l-9 -33M6623 924l41 -4M6184 2624l-26 -7M5726 1754l-10 2M6966 1858l-38 55M6560 945l-21 -9M5814 1440l-9 1M6044 2565l-21 -16M5850 2176l-20 -4M7272 1811l-18 39M7297 2262l-27 40M7247 2419l-13 35M7411 1397l17 35M5761 1771l2 56M7439 2047l-18 41M6564 2439l-50 18M7175 1266l38 13M6236 2636l-6 11M6928 1913l14 49M7014 1217l-46 -13M5860 1517l-22 -2M7046 2594l21 2M6523 1135l-6 -30M6311 2691l21 13M6991 2167l-34 41M6433 1176l-43 24M7428 1432l-11 -17M6977 1405l-48 -14M6128 1068l-54 31M7249 2479l13 -7M6878 978l22 2M6369 2092l-30 61M6872 2707l25 -2M7469 1576l16 46M5762 1475l-16 41M5774 1946l-9 54M6406 2664l-17 15M7173 2552l14 -7M7205 1137l-24 -21M6552 1982l12 47M7020 1111l45 16M7331 1950l-31 34M6000 1796l-35 -5M6364 2302l-23 53M5807 1906l9 58M7372 1867l2 70M7305 1462l13 -21M7012 1009l46 28M6924 2053l20 40M7269 2341l22 -1M5895 2320l2 35M6880 1166l-30 -40M6103 2551l-1 17M6598 1655l-65 24M6382 1164l-9 -35M6214 1746l-1 50M5814 2248l20 43M6332 2704l-47 -18M6289 2003l-56 -46M6927 1028l-30 -19M6718 1434l10 48M6230 2113l20 49M7102 2212l-62 18M5795 1788l-17 -11M6131 2413l-1 45M6301 2602l21 22M5842 1975l-26 -11M7461 2116l-1 24M7305 1462l26 45M6744 947l-18 -12M7372 1494l22 3M6013 1440l-41 1M6533 1679l-5 50M5867 2087l-24 -6M6736 2265l25 39M6179 2372l23 43M5900 1830l-21 47M6761 2304l28 35M6072 2539l-28 -11M7174 1709l-20 34M6592 1427l-71 11M5750 1883l-9 53M6845 2399l-14 51M6600 2336l-45 17M6529 2709l-11 14M5933 1397l-5 -42M6023 1958l12 54M6854 1763l4 55M7415 1975l-2 54M7409 1541l-1 -49M7458 2161l-13 33M6358 2624l-36 0M6073 2571l-30 -15M6488 2608l29 23M7019 1013l-28 -15M6159 2641l16 10M5708 1672l-7 46M6318 958l-55 23M6676 1082l-6 -25M7472 1549l-4 -19M7411 2219l8 -3M5791 2155l2 44M7061 1306l-34 17M6266 2693l-29 -11M6961 2006l-57 3M6857 979l-32 -12M6285 1291l-51 -5M6111 1070l-37 29M6529 2532l24 30M7409 1541l15 51M6623 924l-14 -7M5843 2081l14 50M6567 2622l-50 9M6471 1800l3 47M6173 1022l-45 28M6488 2742l-15 4M6702 2754l-27 -2M6549 2735l-47 -1M6187 2224l-21 47M6203 1047l-44 29M6520 2756l-18 -4M6616 943l29 -8M7092 2337l29 16M6824 2208l-64 -8M5713 2038l11 48M7160 1131l-21 -25M7271 2444l-22 35M6585 2588l29 23M7439 2047l-7 47M6970 987l-39 -15M7440 2180l-4 25M7486 1590l14 65M7476 1553l-10 -23M6902 2448l-13 46M6369 2092l20 50M6752 2649l34 12M6523 1135l-56 -12M6851 1325l-23 35M7014 1844l15 51M6966 2134l-58 3M5974 2347l-28 -8M5713 2038l1 4M7344 2328l-10 32M6537 1509l-24 44M7345 1841l39 -20M5903 1261l-30 46M6136 1042l-46 29M6869 995l19 -3M6011 1902l-25 49M6472 920l46 -3M7192 1670l29 56M7429 1480l22 40M7491 2018l-1 31M5928 2100l-14 49M7179 1202l-34 -41M7445 1996l12 6M7506 1956l6 -18M5904 1311l-15 1M6851 1325l-57 -12M5903 2390l28 39M7331 1950l-6 58M7141 1092l-24 -20M7052 1441l45 31M7345 1841l-17 40M6688 1113l-56 5M6449 2662l-16 19M6314 2712l-48 -19M6382 1164l-48 -12M6632 1394l7 59M7012 1994l24 41M7163 2568l-41 30M5857 1927l9 54M7263 1489l-9 50M6271 2665l-23 -5M6467 1521l-42 -36M5830 2172l-1 40M6441 1612l-17 51M5747 1576l-8 3M5990 2502l-25 -16M6517 2631l22 21M6933 1527l-59 -34M6946 1087l-36 -34M6788 956l22 -2M7040 2230l30 29M6713 2230l-70 -17M7018 2593l-43 24M6318 1890l-48 7M5928 1355l-23 5M6037 2476l4 28M5691 1830l0 -39M7061 2484l-12 40M6259 2681l-26 -7M6305 972l28 -16M5929 1621l-32 -4M6725 2634l-20 28M6195 2460l30 43M7388 2198l-13 31M7209 1220l3 -21M6861 2654l-14 24M6769 1148l-43 23M6479 1901l-60 -36M7108 1062l-31 -19M5772 1472l-12 36M5928 2404l29 39M7161 1547l-1 55M5946 1529l-11 45M6045 1854l8 54M5779 1471l-19 37M5879 2348l24 42M6676 1082l-60 -22M6949 1699l0 53M7351 1452l-6 -44M6102 2584l29 24M6849 2704l23 3M6769 1148l-26 -33M7259 2480l-35 34M6961 2006l-37 47M7246 1771l47 4M5895 1772l-25 44M6379 1625l-43 -38M6064 2448l33 46M5767 1507l-7 1M7363 2347l-15 28M6160 2604l-29 -10M6856 1001l-34 -12M6672 927l37 -2M5777 1721l1 56M6004 2396l2 36M7247 1224l38 36M7234 1185l-13 -20M7233 2385l-35 36M6616 943l-25 -10M6179 1079l24 -32M5935 1574l-32 -7M6378 2691l25 14M5912 2048l-14 45M6478 2751l-39 -8M7246 1771l-20 42M5764 1540l-9 36M6236 2621l0 15M6301 1218l-37 37M5963 1395l-21 41M6976 1497l20 48M7511 1853l4 33M6339 2153l22 49M6217 2573l-30 -4M7478 2110l5 -15M7090 1052l48 31M6917 1865l11 48M7401 2165l0 32M5832 1398l-18 42M6966 2134l-35 40M5760 1508l-10 34M7115 2587l-44 30M6309 1730l-43 -42M7439 1454l-11 -22M7094 1261l-30 -41M6123 1751l-44 48M5763 1577l-8 -1M6350 956l-45 16M7113 1619l-22 41M6086 1074l-44 33M5780 2227l-22 -45M6226 1018l-45 26M6923 1281l-26 -38M7317 2303l-8 35M6869 995l-12 -16M6988 1248l-60 -36M7265 1204l36 38M6197 2648l20 14M6529 2100l-66 -29M6488 942l-24 -6M7117 2400l-47 39M7507 1986l-8 41M5704 1681l6 -36M5866 1981l15 60M5966 1176l0 -2M7494 1617l8 40M7396 2252l-18 35M5879 2394l23 32M7306 1919l-30 34M6260 1210l-9 -39M6189 1283l-27 37M6004 2352l-30 -5M6933 1527l-15 67M7345 1841l8 68M7254 1435l21 -10M6323 975l27 -19M6040 1689l-1 54M7044 1024l52 33M6197 2648l-26 -8M6351 2042l-62 -39M7439 1540l9 -6M6173 1643l-47 50M5937 1217l-34 44M5951 2414l6 29M6788 2583l31 16M5872 2310l7 38M5926 1722l-31 50M6953 1051l-26 -23M6130 2458l26 41M5780 1542l-8 -3M7398 2124l-26 29M6766 1395l3 47M7035 2293l26 26M6495 2658l28 19M5982 1175l-7 -1M6788 956l-12 -11M6733 1088l-45 25M7251 1180l41 45M6544 1625l-11 54M7097 1472l-29 20M6080 1691l-40 -2M6849 2612l27 13M6371 941l-6 3M6479 1901l-52 10M6614 2611l30 20M5835 1478l-14 0M7008 2662l-28 16M6285 2686l20 13M5699 1950l9 51M6089 2596l-45 -31M6875 1597l-50 6M7400 1959l-5 56M7388 1538l6 -41M6266 2693l19 9M6270 2457l27 40M7432 2094l-9 38M6733 1088l-5 -27M7461 1584l13 56M7472 1567l0 -18M5865 2365l-10 -7M7198 2421l-12 41M6379 1625l-55 10M7384 2317l-24 37M7195 2494l18 -1M6152 1152l-29 -4M6129 2557l4 23M6889 2494l-11 42M5698 1930l-6 -49M5900 1478l-28 1M7225 2510l-23 25M7061 1306l-33 -34M6723 1383l-56 28M6643 2213l-47 22M6672 927l-8 -7M6470 1743l1 57M5793 1957l13 60M5933 1397l-20 40M6374 1096l7 -35M6164 1746l-41 53M6963 1311l-4 43M5816 1964l-10 53M6233 1957l-45 4M5708 1672l-4 9M6804 1758l-57 -7M7169 1151l-9 -20M6664 920l-55 -3M6692 2289l-21 61M6193 1545l-31 -49M7090 1052l18 10M7487 1608l12 64M5723 1814l1 56M6872 2707l-20 13M5762 1475l-17 48M6576 1122l-59 -17M6963 1311l-47 19M6664 2597l-50 14M6563 1469l-26 40M7070 2439l-36 32M6353 2676l-9 10M7058 2076l-32 45M7319 1806l42 -11M6417 1762l-53 -40M5913 1437l-27 1M6233 2674l-25 -8M6005 1177l-12 -2M6938 2669l25 0M6251 1136l9 -37M5775 2106l2 48M5755 2176l3 5M6199 2016l14 48M6427 2718l-8 9M7428 2211l8 -6M7306 1919l-6 65M6260 1210l-43 -7M7157 1109l-16 -17M6563 2752l25 5M6269 2600l-52 -27M6326 2405l28 39M5731 2087l13 45M7433 1644l6 56M6922 2603l29 8M7044 1024l14 13M5806 2017l13 53M5831 1347l-2 -2M7267 2206l-52 25M7092 2617l11 -11M7009 2645l-46 24M7028 1094l15 -6M5721 1659l-7 45M7300 1984l25 24M5937 1217l-38 40M7506 1985l5 -22M7191 1429l4 44M6492 1482l-34 -35M6453 1567l-12 45M7077 1587l-58 -2M5736 1756l-13 58M7470 2126l-12 35M6297 2497l27 38M7309 2338l-28 40M7251 1180l21 24M6375 2726l-33 -7M6825 2700l-49 15M5965 2208l20 51M7201 1243l8 -23M6784 977l-19 -16M6838 1165l-41 13M6845 2399l29 25M7183 1122l49 41M7331 1507l32 21M7481 1703l2 58M6092 1358l-25 41M6758 2561l30 22M5744 2132l-17 -44M5812 1550l-6 38M7461 1584l20 49M6949 1634l0 65M7029 2620l-46 26M6556 918l42 -5M7342 2087l22 15M6017 2263l-32 -4M6745 1290l-46 -23M6230 2647l18 13M5838 1515l-26 35M6333 1991l18 51M6393 1578l-40 -39M7044 1174l36 7M6887 2366l-42 33M6575 2520l-22 42M6670 1057l-54 3M6902 1707l47 45M7152 2559l21 -7M6102 2596l18 15M5928 2404l-25 -14M6944 2420l-9 46M7245 1244l36 32M7243 1206l-9 -21M6904 2009l20 44M6044 2565l24 18M6829 2720l23 0M7160 1602l-47 17M6366 2663l-13 13M6804 1758l-50 48M5799 1546l-11 -1M7424 1592l16 3M6944 2275l-42 37M7515 1836l4 34M5800 1847l7 59M5730 1616l-7 4M6902 1707l-46 2M7487 1608l13 47M6214 2369l-35 3M5951 1950l9 55M6006 2432l1 31M6645 935l-54 -2M5724 1983l2 52M5765 2000l-15 -9M6552 1340l-29 -30M5932 1266l-43 46M7125 2298l-4 55M6230 2221l-24 53M5755 1610l-8 45M5985 2480l5 22M7408 2267l-20 39M7350 2037l-33 31M6514 1045l-45 13M7169 1385l12 -38M6417 1762l-53 14M6434 2131l-29 63M5892 1259l-32 46M7274 1221l40 45M5703 1991l-4 -41M6251 1136l-31 -11M6908 2137l23 37M5821 2310l-25 -43M6141 2628l-52 -32M6696 2720l29 7M6297 1180l-2 -38M6269 2600l-6 23M6380 965l-12 -6M5799 1436l-14 38M6888 992l-31 -13M7169 1385l38 5M6519 928l-55 8M6794 1313l-66 22M5872 2271l0 39M6105 1067l-7 0M5872 1479l-34 36M5764 1717l-3 54M6492 1482l-67 3M6137 2363l-6 50M6892 1541l26 53M7328 1881l25 28M7383 2110l-31 35M7027 1323l65 20M7213 1310l40 24M6258 992l36 -21M5981 1222l-31 43M6707 2740l-54 7M6386 1984l13 47M6566 1066l6 -28M7361 1602l29 19M6016 1266l5 -40M7183 1122l22 15M7483 1574l-7 -21M6965 1042l-38 -14M5801 2272l-25 -47M6180 1240l2 -41M7433 2161l9 -6M5774 1617l-10 -3M5774 2221l-16 -40M5778 1777l-17 -6M6506 2694l23 15M6892 1541l-50 11M7481 1703l12 56M7083 2389l-39 37M6810 954l-34 -9M5784 1897l-17 -6M6994 2332l33 20M6758 2561l-16 39M7027 2352l29 21M6488 2742l-42 -5M6922 1174l9 -31M6136 1359l-14 -43M7454 1594l10 52M6589 1365l-37 36M5970 1578l-35 -4M6479 2545l-21 38M6114 1495l-39 -1M6393 1578l-57 9M5694 1821l-2 -39M5870 1816l-29 -6M6805 1711l49 52M7375 2000l20 15M5724 2086l2 5M6147 1039l-11 3M7131 2457l-43 34M6827 2731l17 -3M7411 2129l12 3M6791 2007l9 45M6322 955l-48 18M6185 2609l-1 15M7299 2375l-10 33M6743 1115l-55 -2M6420 1075l6 -31M7243 2250l29 7M7061 1306l37 -4M7152 1094l19 18M6099 2415l31 43M6789 2339l-67 -10M7379 2329l5 -12M6675 1362l-8 49M6805 1711l-53 -6M6390 2562l-43 6M6957 2208l-69 4M6709 925l-45 -5M5927 1781l-27 49M7083 2623l9 -6M6621 2273l-51 19M5702 1764l-6 3M7308 1525l19 52M7171 2496l-18 36M5951 1950l-22 49M7485 1622l11 63M6500 2753l20 3M5716 1629l5 -31M5842 1399l-28 41M7226 1813l28 37M5993 1175l-37 43M7433 2132l-19 32M6405 2194l-44 8M5912 2048l16 52M7406 2081l15 7M5834 1348l-22 42M7209 2461l25 -7M6237 991l-53 23M6675 1362l-43 -26M7350 2037l-8 50M5755 2176l19 45M6741 2039l-61 -13M5874 2233l-2 38M7274 1221l27 21M7049 1140l-29 -29M7113 2565l-46 31M6569 1093l-52 12M6295 1106l7 -31M6077 1268l1 -42M6433 2681l-44 -2M6270 1897l-46 2M7498 1635l4 22M6926 992l-26 -12M6297 1180l-46 -9M6084 2173l21 48M6634 2574l30 23M7415 1639l3 46M6020 1136l-45 38M6862 1872l-42 42M6367 1675l-3 47M5829 1917l-13 47M7016 1400l36 41M5761 2054l-14 -9M7152 1651l40 19M7334 2360l-29 40M7049 1140l16 -13M5690 1841l2 52M7234 2454l-39 40M7276 1953l24 31M7462 1512l14 41M5972 1441l-9 -46M7483 2095l5 -24M6127 2271l24 51M6084 1745l-45 -2M5931 2429l32 41M6521 1438l-37 -29M7383 2110l-11 43M7096 1057l-38 -20M6301 2602l-8 23M6084 1186l-32 37M5831 2319l24 39M6385 2732l-54 -14M7016 1400l-2 54M7413 2029l-22 39M6097 2494l32 38M6417 1108l-44 21M7028 2644l-45 24M6869 1446l-53 -43M6566 1066l-52 -21M6259 1743l-45 3M6831 2450l-13 47M6075 1494l-23 -50M6347 2568l24 28M7289 1483l42 24M7470 1706l2 58M6150 2637l-26 -19M6313 1682l-43 -42M6982 1109l-36 -22M6469 2722l-14 9M5831 2319l-10 -9M6185 2119l-23 52M6361 2726l-30 -8M6224 994l-7 6M6537 2598l-20 33M6041 2312l28 53M7131 1687l23 56M6608 2751l29 4M7454 1594l20 46M7235 1266l-26 -46M6671 2649l-13 27M5829 1346l-26 44M5829 2254l5 37M6338 2697l22 12M6816 1280l-48 -22M6318 958l-52 18M7246 1180l-14 -17M6074 1099l-42 37M5829 1345l-26 45M6012 1311l-28 -2M5814 1440l-14 36M5691 1791l-1 50M5884 2141l-6 43M6728 1061l-58 -4M6499 1598l-58 14M6055 1355l-24 41M6905 1651l44 48M7086 2567l27 -2M5973 2502l-44 -44M6663 2711l33 9M7235 1266l36 24M7150 2576l-44 31M6420 1075l-39 -14M6597 1313l-8 52M6860 951l34 8M6890 1967l14 42M5805 1389l-2 1M5959 1352l-31 3M6805 1711l-58 40M6467 1123l0 -34M6604 2548l-51 14M7404 1584l20 8M7508 1684l5 40M5868 2383l24 32M5823 1398l-24 38M6769 2520l37 21M7485 1622l14 50M6695 939l-50 -4M6266 976l-3 5M5822 1857l-15 49M6564 2029l17 46M6597 1313l-34 -29M7270 1200l41 47M6225 2503l26 37M6905 990l-5 -10M7225 1155l-26 -21M6064 2448l-29 -7M6902 2448l33 18M6902 2312l-44 28M5937 1309l-32 51M5985 2259l-9 41M6669 2486l-19 46M7004 1356l-41 -45M5719 1929l-10 -3M6857 1657l-1 52M6191 2321l23 48M6295 1106l-35 -7M5803 1390l-22 42M5812 1390l-4 0M5919 2441l-40 -47M6883 2096l25 41M7112 1437l43 8M6475 2679l31 15M6287 2539l-36 1M6179 1079l-43 34M6947 2531l-42 22M5943 1892l-29 50M7207 1177l27 8M6806 2541l-48 20M6314 1835l-52 -44M7142 1314l25 -20M7153 1938l-42 24M6913 1005l-25 -13M7498 1635l10 49M6255 2060l-42 4M7244 2188l-29 43M5999 1143l-38 37M5795 1788l5 59M6013 2062l-38 -5M6625 2372l-43 16M6521 1438l-63 9M6922 1477l11 50M6163 1114l16 -35M7298 1846l30 35M6380 2248l-16 54M6482 2112l-64 -24M6980 2678l-44 19M6806 1815l6 53M7413 2029l-7 52M5858 1302l-29 44M6845 2134l-65 -2M7506 1956l0 29M6739 2495l-15 45M5976 2300l28 52M7027 1323l20 42M6458 1447l-33 38M6232 1594l-39 -49M6233 2458l-8 45M6992 1071l-39 -20M6087 2069l-41 -5M5963 2470l2 16M5696 1932l8 59M7470 1706l13 55M6848 966l-38 -12M5850 1438l4 -38M6897 1243l-17 -37M7175 2558l-32 21M6920 2393l-46 31M6414 1812l5 53M6436 2554l22 29M6351 2042l18 50M6397 2735l20 5M6159 2641l-46 -27M6828 1042l3 -17M6408 1531l-55 8M6829 2720l-25 14M6082 1314l-5 -46M6751 1860l-57 -14M6775 1957l16 50M7519 1792l1 48M5834 2125l-21 -7M6016 1266l-32 43M7423 2132l10 0M5808 1390l-19 42M6808 1134l-65 -19M5908 1397l-3 -37M5877 1313l-22 40M6353 1539l-17 48M7374 2196l-15 35M5978 2422l1 30M6467 1123l-50 -15M7187 2545l-24 23M6728 1335l-5 48M6839 956l24 1M6759 934l-50 -9M5897 2355l6 35M6419 2727l27 10M7281 1276l4 -16M7347 1293l34 52M5761 1771l-14 49M6454 2179l-49 15M6951 2611l24 6M5692 1881l4 51M6827 2731l-48 12M6180 1016l-47 27M7202 1762l24 51M6527 914l-55 6M7508 1803l4 -18M6120 2611l-50 -31M6096 2454l31 45M6049 1587l-45 47M6140 1073l-55 29M6436 1966l-59 -35M5914 2149l-30 -8M6776 2715l-22 17M6725 1996l-62 -18M7051 2641l15 -12M5763 1827l-16 -7M7161 1102l-23 -19M6696 2720l-13 14M6648 2728l-19 13M7207 2380l-9 41M7283 1243l31 23M5824 1441l-10 -1M6995 1038l26 5M6948 1005l-22 -13M5721 1598l-11 47M6334 1152l-39 -10M6745 925l35 4M5850 2266l4 37M6237 2682l-28 -15M6767 2687l30 8M7314 1266l-13 -24M7479 1994l2 41M6226 993l-42 21M7200 1845l-31 28M7249 1920l27 33M7340 2231l-1 35M6295 1142l-44 29M6653 2747l-45 4M6806 2275l27 32M7285 2438l13 -8M6076 2560l26 24M6724 2540l-17 41M6259 2681l-42 -19M5999 1143l-36 34M6502 2752l-63 -9M5747 1820l3 63M7022 1188l-50 -17M6960 2684l20 -6M6847 2678l-50 17M7501 1748l-1 66M6387 1377l-32 36M6845 2134l-42 36M6079 1799l-40 -2M6150 2637l-46 -29M6929 1391l-43 -27M6861 2577l-42 22M7385 2256l-7 31M6361 2726l24 6M6907 1760l2 56M6948 995l29 7M7352 2145l20 8M6076 2560l-28 -13M6894 1129l-44 -3M6324 1635l-44 -45M7311 1247l-19 -22M6917 2665l21 4M7440 1595l24 51M7213 1279l-12 -36M7239 1987l-39 25M7092 2617l-41 24M5721 1659l-7 5M6607 2422l-18 51M6244 1024l-18 -6M7431 2228l-10 25M6842 1552l-17 51M6950 2692l-41 15M6138 1594l-9 52M5866 1439l0 -39M6424 2477l29 34M6211 2615l0 15M6894 1129l-18 -35M6751 1860l-46 38M6785 1072l-57 -11M7464 1646l10 -6M6983 2646l-45 23M6544 2756l-24 0M6048 1102l-46 37M6684 2757l18 -3M7463 2150l-16 40M6643 2315l-43 21M6158 2617l20 16M6894 963l33 9M6876 1921l14 46M7256 2447l-43 46M6985 2386l-9 52M7195 1473l-10 41M6022 2535l21 21M6447 1371l-33 -31M7401 2291l-17 26M7358 2322l11 -4M6839 956l-10 -10M5818 1393l-19 43M6684 914l-6 -1M5740 2135l15 41M6824 2208l-39 30M7108 1724l-30 28M6426 1044l-45 17M6140 1073l-40 31M7372 2153l-15 37M6768 1258l-6 -56M7287 1222l40 47M5815 1739l-20 49M6752 1705l-5 46M7186 2276l-29 40M6477 919l50 -5M7516 1747l-3 -23M6022 2535l-30 -19M5927 1675l-35 37M6897 2705l-45 15M5780 1835l4 62M6183 1451l-21 45M6730 1037l6 -19M5996 2525l-15 -15M6725 1996l-45 30M6443 2708l-16 10M7496 1685l3 -13M6336 2599l22 25M6073 2517l-1 22M7500 2002l-3 31M7209 2461l-14 33M6833 1960l-58 -3M5718 2033l13 54M6632 1336l-43 29M6329 1456l-28 -44M7465 2148l7 -18M6745 925l-11 -5M6977 1405l37 49M6069 2365l-1 45M5754 1509l-11 35M6738 2676l-52 14M7134 1897l-46 23M6937 1021l-24 -16M6456 2747l-59 -12M7401 2197l12 -3M6115 2322l22 41M6302 1075l-42 24M5879 2394l-36 -47M7514 1940l-7 21M7302 1322l33 39M7200 1845l-6 71M7140 1397l51 32M7272 1204l38 45M6214 1746l-46 -51M6671 2350l-46 22M6627 2053l-46 22M6044 2565l-39 -34M5810 1477l-21 32M7471 2105l9 -17M7418 1685l21 15M6318 2309l23 46M6977 1405l-10 47M6578 1011l21 -21M6992 2588l-41 23M7509 1698l-1 -14M7188 2216l27 15M6814 1659l-51 -6M6306 2660l-7 10M6187 2652l-28 -11M6948 995l0 -8M5996 2213l-11 46M6869 1068l-43 -2M6484 1409l-26 38M6243 1544l-34 -44M5726 2035l12 54M7048 1548l-29 37M5897 1617l-27 -5M6359 949l-50 15M6931 1004l17 1M6195 2460l-6 44M6324 1635l-54 5M6358 2624l22 21M7328 2335l16 -7M7027 1323l-36 -33M5715 1868l-9 1M6621 2171l22 42M6888 2661l-41 17M5772 1472l-18 37M7472 2076l9 -12M7348 1321l32 47M7239 1987l-12 57M7337 1626l24 -24M6333 956l-39 15M5764 1614l-9 -4M6869 1068l3 -22M6243 2007l-44 9M6663 2711l-15 17M7472 1764l11 -3M7224 2514l-37 31M6834 2561l-46 22M7204 1332l28 51M6217 2662l16 12M5823 1594l-17 -6M6723 919l42 10M6985 2386l29 23M6754 1806l-58 -10M6646 914l-48 -1M6537 2598l30 24M6220 1125l-33 -3M6768 1258l-69 9M6186 2592l-1 17M7352 2369l-20 23M7337 1626l3 47M7125 1572l35 30M6894 963l0 -4M6045 1854l-34 48M6542 2757l-40 -5M6370 1496l-17 43M5796 2267l-4 -9M6250 2162l-46 8M6859 2723l17 -9M5838 1648l-1 50M6637 2755l-25 4M6791 2472l-52 23M6047 1313l-5 -45M7520 1840l-2 50M7361 1315l34 54M7271 1290l10 -14M6791 1102l-48 13M5706 1715l-5 3M7280 2095l-14 49M7101 1388l-31 19M6872 2275l30 37M5954 2251l22 49M7125 1572l-12 47M7287 1222l24 25M7018 1059l-39 -21M7293 2444l-34 36M6769 2520l-11 41M6941 2688l19 -4M6637 2759l-30 -2M6020 1532l-39 0M6830 1501l-50 -4M5823 1514l-24 32M6730 1037l-44 -26M6103 2120l-35 -2M6714 1946l-61 -19M5999 2007l-39 -2M6563 1284l-40 26M7247 2419l23 -5M6232 2317l-18 52M6833 1960l-42 47M7176 1797l50 16M6007 2306l-31 -6M5822 1857l7 60M7177 2526l-25 33M7018 1059l23 4M6329 1456l-53 0M7293 2041l24 27M7514 1940l0 -25M7134 1897l-23 65M6425 1485l-35 -30M5865 1306l-5 -1M7318 1282l-4 -16M7509 1706l4 43M5692 1782l3 -43M7215 2231l28 19M6935 2466l-46 28M6293 2625l-30 -2M6144 1236l-34 36M6482 2112l-48 19M6263 2623l-27 -2M7163 2568l12 -10M5946 2377l5 37M6334 1116l-39 26M6157 2585l3 19M7513 1749l1 51M6710 1643l-51 -21M7168 2421l30 0M6578 1011l-38 -16M6821 939l-41 -10M6968 1204l-40 8M6814 2734l15 -7M6123 1799l-44 0M5753 2139l16 46M5866 1400l-12 0M5889 1312l-12 1M5860 2338l24 41M6825 2092l-45 40M6526 2207l-24 62M6380 965l35 -19M6495 2658l-20 21M6364 2302l21 43M7213 2526l-38 32M6974 1011l27 7M6243 1544l-50 1M7330 2131l22 14M7375 2229l13 -2M6457 2743l-58 -10M6931 1004l-5 -12M6968 1204l-46 -30M6336 1587l-39 -43M5946 2339l26 42M5860 2338l-17 -11M7348 1321l32 35M6439 928l38 -9M6162 2171l25 53M6624 1033l-52 5M5968 1632l-39 -11M6164 1746l-38 -53M5765 1471l-3 4M6218 1164l-36 35M7259 2480l9 -14M5792 1583l-10 -4M5767 1507l-11 35M6816 935l36 9M5829 2212l0 42M7263 1489l26 -6M6573 2188l-47 19M5691 1791l4 -38M5961 1734l-35 -12M6213 1796l-44 56M6532 2404l-44 13M7374 2196l1 33M7098 1302l-54 -58M5699 1869l3 51M6488 2608l-25 30M6754 1806l-60 40M7091 1660l40 27M7451 1650l13 -4M5761 2137l19 55M7096 1161l25 -3M6895 2591l27 12M7180 1978l20 34M7500 1655l9 43M7198 2421l23 3M7314 2177l-47 29M7388 2282l9 -4M7301 2429l-33 37M6214 2369l30 46M5793 1957l-11 46M5850 1438l-29 40M6075 1494l-15 47M7290 1370l29 36M5922 1262l-12 2M6872 967l-9 -10M6093 1593l-10 50M6778 1048l-50 13M5838 1648l-21 42M6417 2740l-56 -14M6083 1643l-3 48M6044 2565l-48 -40M7068 1492l-44 13M7091 1660l-27 36M6262 1791l-48 -45M7361 1315l20 30M7178 2377l-37 39M6096 2454l1 40M6477 1031l-51 13M7419 2216l-15 33M6267 2674l-26 -6M7213 2493l-36 33M5798 1511l-18 31M7301 1242l35 43M7406 2280l-22 37M6865 2170l23 42M7283 1540l44 37M6714 1946l-51 32M6671 2350l29 32M7489 1694l7 -9M5963 1680l-36 -5M5697 1729l-5 53M7158 2036l-47 22M7208 2100l26 26M6501 2162l-67 -31M6091 1906l8 55M5894 2278l-22 -7M6680 1310l-48 26M5781 1509l-8 1M7014 1217l50 3M6938 2669l-21 20M7437 2218l-11 25M6663 1978l17 48M7491 2018l9 -16M7512 1938l4 -21M6425 1485l-55 11M6219 1849l5 50M7177 2526l19 -4M6825 1603l32 54M6442 1016l12 -25M5888 1261l1 1M6342 1053l-40 22M6923 1281l-7 49M6322 2624l25 21M6184 1591l-34 -45M6888 2212l-64 -4M6722 2329l-51 21M6131 2413l-32 2M7131 2532l-18 33M6042 1179l-18 -3M7426 2243l-20 37M5981 2510l-39 -40M6514 2049l-67 -31M6145 2222l-40 -1M6774 2397l-13 48M6710 1643l-67 32M6707 2581l-43 16M7394 1670l24 15M6187 2652l21 14M6954 1020l-41 -15M5929 1999l-17 49M6825 1603l-46 -5M7187 2146l-54 20M6801 944l-42 -10M6974 1011l3 -9M6514 1374l-30 35M5884 1400l-18 0M5813 2118l-21 -5M6761 2304l-69 -15M6328 1940l-49 7M6678 913l-49 -3M5696 1932l-4 -39M6919 2512l-14 41M6034 1489l-21 -49M6336 1587l-56 3M6572 2669l32 17M6314 1042l18 -30M5870 1816l9 61M6874 1401l-58 2M6806 2275l-17 64M7458 2168l-11 22M6977 1002l-29 -15M6078 2321l-9 44M7097 1472l54 17M6625 2662l-21 24M7049 2524l-41 27M6473 2746l27 7M7418 1738l-2 54M6246 991l35 -20M7458 1762l14 2M6280 1590l-10 50M7134 1235l41 31M7061 2484l27 7M5886 1934l12 52M7049 2639l-30 20M6695 918l-49 -4M6596 2235l25 38M6219 2673l-44 -22M7510 1904l-4 52M7097 1472l30 45M7500 1655l8 29M5782 2003l-4 54M7019 1585l-59 -13M7496 1639l5 42M6616 972l24 -15M7224 1884l25 36M6857 948l-45 -10M6324 2710l-28 -7M6575 911l-7 2M7498 1973l8 -17M6682 2440l-46 16M5889 1262l-31 40M7249 1301l22 -11M6693 2075l-66 -22M6927 972l-33 -13M6367 2700l-7 9M6403 2705l-11 9M5692 1881l-2 -40M6533 2744l30 8M7301 1242l26 27M7043 1088l-40 -26M7467 1824l-7 56M6512 1074l-45 15M5957 2443l28 37M5692 1893l5 51M7034 2471l27 13M6684 914l46 5M5755 1610l-17 43M5854 1306l4 -4M7081 2527l-18 36M5747 2045l-12 -7M5965 1791l4 48M6729 1231l-38 -28M6610 1261l-47 23M7327 1269l-16 -22M6833 2307l25 33M7154 1743l48 19M5755 2176l-14 -38M6858 2340l29 26M6367 2398l-41 7M6285 2702l-48 -20M7241 2343l-8 42M6667 2144l-69 -21M5735 1816l-11 54M6678 2557l-14 40M6476 969l32 -18M7268 2015l25 26M6288 1035l-26 -6M5747 1655l-9 -2M6314 1835l-46 13M7287 1401l18 61M7451 2050l-8 44M5692 1893l2 5M5716 1756l-11 54M7046 2594l-17 26M6339 2153l-25 52M5870 1612l-4 47M6442 1016l-35 -10M6531 1252l-8 58M6258 2365l-44 4M6621 2505l29 27M6534 913l41 -2M5800 1476l-19 33M7339 1716l-4 49M6835 1094l-50 -22M6735 2743l-24 9M7292 1225l18 24M6339 2258l-44 3M6924 976l34 10M7088 1920l23 42M5999 1743l1 53M5899 1257l-34 49M6531 1252l-23 -32M7347 1556l29 14M5769 2185l-25 -53M6463 2376l-21 51M5764 1717l-16 43M6958 2644l-41 21M6318 2309l-17 52M6966 2304l28 28M5706 1869l-7 0M7061 2319l31 18M5831 2319l-30 -47M5929 1999l13 54M5866 1659l-28 -11M7254 2071l-46 29M7307 2116l23 15M7191 1429l16 -39M7400 2223l-4 29M5908 1889l-22 45M6591 1908l-60 -27M6763 1653l-11 52M6633 2698l-18 19M6314 1042l-26 -7M5834 2291l-14 -8M6742 2600l-17 34M6730 919l-7 0M6600 2336l-18 52M7408 1845l-14 45M6677 1033l-53 0M5809 1512l-11 -1M6209 1500l-16 45M6136 1359l-44 -1M7249 1363l4 -29M6856 946l36 11M5981 1222l-49 44M7462 2050l9 -7M5919 2285l-25 -7M6747 1751l-51 45M7077 1587l36 32M6393 1300l-26 -36M6921 2701l-54 19M7423 2236l-9 26M6122 1316l-30 42M7113 1856l-39 23M5876 1562l-31 39M7352 2369l-34 45M6872 1046l-41 -21M7499 1672l10 49M7106 2607l16 -9M7098 1302l35 41M5808 2162l-17 -7M7289 2162l-45 26M7519 1870l1 -30M7297 2262l20 5M7340 2381l8 -6M6090 1071l-4 3M7249 1363l38 38M7056 2373l-12 53M6696 1796l-2 50M6501 923l36 -8M6564 2029l-66 -30M7044 1174l-54 -27M5986 1951l-26 54M6210 1016l-11 -1M6878 2536l-44 25M6099 2415l-3 39M6184 2624l22 17M6007 1587l-37 -9M6633 1009l14 -18M5744 2132l19 55M6693 2075l-47 25M6529 1018l-52 13M5863 1358l-8 -5M5963 1395l-4 -43M6886 1364l-35 -39M5714 2042l12 49M5868 2383l-29 -42M7033 1029l42 19M7467 1824l7 61M7362 1404l-16 -51M5755 1576l-8 0M5888 1261l-30 42M7354 2294l-10 34M7070 2259l-35 34M6665 1173l-20 -29M5996 2525l27 24M5913 1437l-41 42M7395 1369l-14 -24M7241 2343l28 -2M7133 2562l-18 25M7133 2002l-44 18M6187 2224l19 50M6226 1018l32 -26M6563 2752l-19 4M7300 1589l27 -12M7362 1404l25 43M6476 969l-21 -10M5860 1305l-2 -2M6653 1927l10 51M6502 2734l-14 8M6918 1102l-9 -28M7252 2489l-28 25M6494 1004l14 -23M6184 1014l-48 28M7094 1261l48 53M5931 2429l6 23M6044 2528l32 32M7041 1063l-20 -20M6991 998l41 19M6643 1287l-11 49M6864 2474l25 20M7495 1878l-2 57M5771 1576l-8 1M5932 2201l-8 42M5804 1391l-24 44M7442 2155l-2 25M5897 1617l-3 50M7300 1589l7 48M6539 2652l-44 6M6477 919l-46 8M6924 976l3 -4M5697 1729l-2 10M7366 1652l28 18M5747 1820l-11 56M6531 1252l-69 -6M6959 1354l-30 37M7400 2223l11 -4M7153 2532l-40 33M7147 1830l22 43M7161 2121l-54 17M6386 1984l-58 -44M6433 952l-18 -6M6193 2661l16 6M6284 2411l-14 46M5750 1883l-14 -7M7328 2391l-30 39M5852 1478l-14 37M6199 2016l-30 49M6659 1622l-16 53M7462 2088l-10 36M7254 2071l-20 55M7397 1724l21 -39M5966 1174l-3 3M5854 1400l-21 43M6683 2734l-30 13M6791 1010l17 -12M6031 2216l-35 -3M7492 1819l8 -5M6344 2686l-6 11M6249 2684l-30 -11M7452 2124l-10 31M5704 1681l-7 48M7408 1845l7 63M6705 1898l-63 -17M7001 1018l-24 -16M6072 2539l30 29M6336 1083l-34 -8M6166 2271l25 50M6742 2600l30 19M7397 1724l-4 49M6041 2312l-6 47M6856 946l-4 -2M6297 1544l-17 46M6162 2171l-17 51M5949 2295l25 52M6791 2472l27 25M6705 2662l-47 14M5829 1346l-25 45M6578 2744l-45 0M6271 996l-45 22M7029 1895l-53 14M6393 1300l-59 -3M6315 2682l-23 -4M6152 1277l-8 -41M7113 1856l-25 64M6477 2225l-47 10M7499 1672l10 26M7289 2162l-22 44M6164 2642l-40 -24M6874 2424l-43 26M6637 2759l-49 0M5801 2272l20 38M6494 2500l-41 11M7414 2262l7 -9M6489 920l45 -7M6669 973l23 -12M7511 1853l4 -17M6633 1009l-34 -19M6537 915l-3 -2M6801 1230l-33 28M6680 2026l-66 -21M6074 1099l-54 37M7508 1684l1 22M6187 1122l-35 30M6449 1303l-35 37M5824 1441l-14 36M6166 2417l-4 45M6581 911l-47 2M5866 1439l-31 39M5727 1587l-6 11M7064 1696l14 56M7456 1707l16 57M5800 1847l-16 50M7287 1335l-16 -45M6963 1311l-15 -60M6947 2531l-7 36M6890 2714l-46 14M7125 2298l32 18M6806 2541l-18 42M6801 1230l-39 -28M7133 2002l-22 56M7307 1682l33 -9M7336 1285l-9 -16M7378 2287l10 -5M7497 2033l-9 40M6910 1053l8 -16M6748 2364l-48 18M6395 2438l-13 48M6785 1027l-49 -9M6940 2567l-45 24M7117 2400l-14 49M6171 2640l16 12M5932 1266l-28 45M6494 1004l-40 -13M5720 1603l11 -28M6581 1230l-18 54M7019 2659l-24 13M6230 2221l18 47M6760 1911l15 46M6963 2669l-46 20M7232 1588l-32 37M7307 1682l-3 46M6330 1373l-29 39M6214 1746l-50 0M6077 1141l-35 38M6310 1006l-48 23M6941 2688l-44 17M6948 987l34 11M6110 1231l-32 -5M7387 2163l14 2M6684 2751l-26 6M6268 1848l-44 51M7317 1366l18 -5M7262 2472l-37 38M7161 2121l-28 45M7028 2644l21 -5M5795 1732l-18 -11M7329 1270l-19 -21M6078 1226l-26 -3M7512 1938l-1 25M6294 2160l20 45M6042 1268l-26 -2M6271 2665l21 13M5858 1302l-28 46M6564 2759l-22 -2M6791 1010l-27 -23M7305 2400l-34 44M6779 1598l-16 55M7117 1084l40 25M6284 2411l25 43M6359 1022l-27 -10M6361 2726l-47 -14M6013 1440l-52 40M5705 1810l-3 -46M5872 1479l-12 38M7091 2612l-42 27M6705 1898l-52 29M7092 1807l55 23M6274 1370l-23 -43M6231 1454l-22 46M7461 2116l10 -11M6423 929l-52 12M5922 1262l-33 50M7181 1347l23 -15M6974 1021l-26 -16M6894 959l36 11M6389 2679l27 15M6849 2612l-18 33M5699 1869l-5 -48M7146 2498l25 -2M7381 1386l-1 -18M7150 2576l13 -8M6408 2521l-41 8M7092 1807l-35 23M5805 1389l-19 40M6909 1074l-37 -28M6392 1031l-50 22M6869 1446l5 47M6052 1444l-39 -4M7397 2278l-18 35M6399 2031l-30 61M5741 1936l-13 -7M6555 2353l27 35M7181 1347l51 36M6669 973l-29 -16M5808 1390l-22 39M6699 1745l-3 51M6042 1107l-43 36M6680 2026l-53 27M6183 1451l-26 -46M7506 1735l3 -14M6439 928l-52 12M7202 2535l-39 33M6341 2355l-15 50M6989 1616l-40 18M7289 2408l-33 39M7453 1818l7 62M7421 2194l-2 22M7518 1890l-1 -20M6113 2614l-45 -31M6548 2251l-23 58M6880 1206l0 -40M6972 1171l-41 -28M6447 2018l-61 -34M7409 1419l22 48M6323 2107l-47 4M7403 1388l-8 -19M6734 920l-4 -1M5816 2300l-21 -42M6529 2532l-21 41M6470 2468l-46 9M6322 955l-56 21M5820 2283l-11 -6M5855 1353l-10 0M5708 2001l9 46M6436 1966l-50 18M7111 1962l-46 19M6270 1063l-42 30M6819 1448l-39 49M7254 1539l29 1M5903 1567l-27 -5M6642 1881l11 46M6797 2739l17 -5M7440 1751l18 11M7044 1244l50 17M6992 2588l26 5M6031 1396l-9 -44M7117 2496l-12 35M7066 1090l-25 -27M6333 2661l-27 -1M5729 1656l1 -40M7188 2216l-60 20M6699 1267l-19 43M6233 2458l-38 2M6767 2687l-19 21M5870 1612l-32 36M7517 1772l-4 -23M5895 2320l-23 -10M6948 987l10 -1M6831 1025l-46 2M7423 1422l24 52M6417 1407l-27 48M6815 2369l-14 56M7024 1505l-48 -8M6042 1637l-38 -3M6570 2292l-45 17M5903 1261l-38 45M6130 2065l18 59M7336 2300l-27 38M6218 1164l-37 -7M5919 2441l29 34M6157 1405l-45 -1M7470 2126l-5 22M6728 1482l-44 -9M6677 1577l-18 45M7227 2044l-19 56M7369 1698l25 -28M6707 2740l28 3M6692 2619l-21 30M6430 2235l-24 56M6226 993l-46 23M6831 1025l11 -14M6234 1286l-12 -40M7481 1824l11 -5M7027 1034l-26 -16M6463 2071l-45 17M7221 2424l-12 37M6240 2600l-26 -2M6667 1243l-57 18M6133 1043l-47 31M6894 959l-2 -2M6398 2621l26 23M7417 1415l26 56M6314 1495l-17 49M7061 2319l-5 54M5704 1991l-7 -47M6151 2015l18 50M6531 960l29 -15M6440 2616l-16 28M6178 1906l-45 1M5701 1718l-4 11M7213 2493l-17 29M6014 2513l34 34M6612 1605l-49 -25M6217 2662l-46 -22M7314 1312l5 -13M6073 2571l29 25M6892 957l-40 -13M6185 2119l19 51M6812 2672l-45 15M6556 918l-19 -3M7485 1886l-12 58M6564 2723l32 9M7503 1868l8 -15M6700 2382l-18 58M6034 1489l-14 43M7421 2194l10 -8M7502 1657l7 49M6262 1791l-49 5M6966 2578l-44 25M6686 1011l-39 -20M6897 1243l-39 16M6548 2251l22 41M6917 2689l-45 18M7519 1819l0 51M6014 2513l-24 -11M6110 1272l-33 -4M7451 1520l18 56M6491 1276l-42 27M6378 2691l-11 9M6261 1497l-30 -43M5838 1515l-9 40M7513 1724l-4 -18M7445 2194l-14 34M5839 1351l-5 -3M7054 1628l10 68M5763 1827l4 64M6405 972l28 -20M7276 2462l-38 40M7061 1306l31 37M7515 1886l4 -16M5969 1219l-13 -1M7319 2367l-30 41M6590 2643l-18 26M7297 2262l-3 42M5694 1821l0 57M5780 1835l-13 56M7273 1641l34 -4M7111 1962l-22 58M6528 1729l-54 -32M7346 1307l-10 -22M5736 1988l-12 -5M6360 2709l24 12M7384 1821l-12 46M6169 2065l16 54M5881 2041l-28 -8M7145 1161l34 16M5777 2154l-16 -17M7089 2020l22 38M6634 1214l-24 47M6123 1751l0 48M7318 2396l-33 42M6337 980l31 -21M7185 1514l-24 33M6424 1270l-18 -35M6360 1336l-30 37M5756 1542l-6 0M6669 2486l29 28M5832 1398l-27 43M5761 2054l14 52M6514 2049l-51 22M6360 2709l-28 -5M6023 2549l21 16M5884 2379l-19 -14M6309 1730l-50 13M5817 1690l-22 42M6498 1999l-51 19M7423 1422l16 32M7235 2482l-39 40M7421 2253l5 -10M6508 981l-54 10M6803 2170l21 38M6244 2415l-11 43M6639 1453l-47 -26M6876 1094l-41 0M7373 1337l30 51M5886 1438l-20 1M6415 946l-47 13M5760 2097l17 57M5842 1975l-15 44M6084 1186l11 -41M6485 2710l-42 -2M7431 1923l-16 52M6392 2714l-8 7M6431 2741l-56 -15M6831 1025l-23 -27M6047 2170l19 53M7139 1106l41 27M6796 1549l-17 49M6814 935l43 13M6786 2661l-48 15M7107 2138l26 28M5852 1478l-29 36M6726 1171l-23 -30M6303 1334l-18 -43M6080 1691l-41 52M6732 2158l-65 -14M6815 2369l-41 28M6788 2583l-16 36M6808 998l-44 -11M5845 1601l-22 -7M6726 1591l37 62M6259 2681l16 11M6878 2536l27 17M7345 1408l26 45M7375 1397l6 -11M6180 1240l-36 -4M5746 1516l-12 38M5745 1523l-13 37M7212 2516l-25 29M6612 1605l-68 20M6851 2244l-45 31M5731 1702l-9 1M7393 1773l23 19M7457 2002l-18 45M7328 2335l-9 32M6055 1355l-8 -42M6313 1783l1 52M6366 2663l-33 -2M7129 1269l46 -3M6876 2625l-45 20M6718 978l-26 -17M6726 1591l-49 -14M7485 1886l-2 59M7516 1917l-5 46M6754 2732l-47 8M6150 1546l-12 48M6541 1166l-18 -31M6236 2621l-25 -6M6200 1410l-21 -47M5975 1898l-32 -6M6996 1545l-36 27M7136 2090l-54 18M6233 1957l-34 59M6692 961l-52 -4M6261 1497l-52 3M6004 1847l7 55M6131 1045l-3 5M5954 2251l-5 44M7503 2010l-8 39M7407 1433l22 47M6405 972l-25 -7M6614 2005l13 48M6405 2194l-25 54M6478 2751l24 1M5929 2458l-37 -43M7095 1220l-15 -39M6528 1729l-58 14M6957 2208l-46 38M6035 2441l32 44M5860 1517l-9 42M7445 1877l15 3M6251 2540l-34 -1M6525 2309l-18 54M7195 1473l35 13M6773 926l-43 -7M7034 2471l-13 43M6762 1202l-71 1M6390 1200l-8 -36M6534 913l-7 1M7171 2496l24 -2M6850 2518l-16 43M6113 2614l-25 -16M7095 1220l24 -24M6424 1270l-57 -6M5716 1985l10 50M6769 1442l11 55M7158 2194l-56 18M7275 1425l30 37M7131 2584l-25 23M6751 2748l-31 1M6472 920l-8 3M7428 1437l23 54M6000 1796l4 51M7163 2568l-29 21M7340 2231l19 0M7047 1365l-31 35M6895 2688l-23 19M7092 2337l-9 52M7304 1728l31 37M7373 1337l22 32M5817 1690l-2 49M7089 1095l-48 -32M6187 2652l-46 -24M6288 1035l22 -29M6324 2535l-37 4M5827 2019l-8 51M7473 1944l10 1M6583 2705l32 12M6217 1000l-44 22M6769 1442l-51 -8M6371 2596l-35 3M7431 1923l1 60M6797 2739l-46 9M6982 998l-24 -12M7175 2558l-41 31M6068 2118l-40 -1M6953 1119l29 -10M6216 1692l-43 -49M6080 1691l4 54M7139 1106l18 3M6371 941l-49 14M5873 1307l-8 -1M6559 1200l-51 20M6446 2737l-40 -5M6127 2271l-12 51M5981 1222l24 -45M6413 2387l29 40M7168 2421l-10 38M6303 1334l-52 -7M5975 2057l-33 -4M6628 1558l31 64M6274 2316l27 45M7183 2067l25 33M5713 1812l-7 57M5849 1871l-27 -14M7394 1497l15 44M6527 1826l4 55M7158 2459l-41 37M6305 972l-11 -1M6779 2743l18 -4M6818 2497l-49 23M5972 2381l-26 -4M6589 958l27 -15M5922 1262l-45 51M7368 1326l16 30M5741 2134l-17 -48M7317 2267l0 36M6628 1558l-50 -23M7270 2414l-14 33M7457 2002l-6 48M6930 970l-38 -13M7146 2498l-15 34M5699 1816l-5 5M7485 1886l8 49M6442 2427l-47 11M7474 1885l-13 58M6887 2366l-13 58M6406 1235l-39 29M6162 1496l-27 -47M5865 2365l29 41M6967 1452l-46 -23M5708 1672l4 -34M7431 2228l6 -10M7057 1830l17 49M5812 1550l-20 33M6200 1410l-43 -5M7213 2170l31 18M5814 1440l-22 36M6081 1852l-28 56M7374 2335l-26 40M5851 1559l-6 42M7136 2090l-29 48M6487 1950l11 49M6598 913l-61 2M7407 1433l24 34M5949 2295l-30 -10M7148 1196l-27 -38M7481 2035l-9 41M6697 993l-50 -2M6455 959l33 -17M6911 2246l-9 66M5874 2233l-24 -9M7357 2190l17 6M6916 1330l-65 -5M7354 2294l14 -7M7099 1067l-24 -19M6331 2718l-32 -13M6007 2306l28 53M6258 2365l26 46M7361 1795l-16 46M7519 1870l-1 20M6385 2345l-18 53M5788 2234l-25 -47M6703 1141l-58 3M6640 1724l-56 28M6250 1410l-19 44M7024 1657l40 39M5892 1712l-28 -2M7148 1196l31 6M6390 1200l-51 -11M6225 2655l16 13M7065 1981l24 39M6582 2388l25 34M5927 1675l-1 47M5746 1613l-17 43M7460 2140l-12 35M7328 2391l-18 31M6462 1246l-16 -37M7158 2194l-30 42M7371 1453l16 -6M6041 1107l1 0M6255 2060l-25 53M6434 2131l20 48M6233 2674l16 10M7428 1437l19 37M6562 975l-54 6M6797 2695l-49 13M6067 2485l32 39M6011 2167l-15 46M6135 1449l-46 0M5738 1653l-9 3M6285 2702l14 3M6653 2747l31 4M6225 2655l-28 -7M6184 1014l-51 29M6091 1906l-32 53M7267 2206l5 51M7061 1034l-29 -17M7317 2303l19 -3M6181 1157l-38 37M5975 1174l-38 43M6128 1068l-43 34M6947 1066l45 5M6864 2474l-14 44M7267 1593l40 44M7415 1908l-15 51M6904 2634l-43 20M7414 2164l-13 33M7471 2043l10 -8M6112 1404l-23 45M5709 1926l0 56M6987 1683l4 52M6596 2732l-47 3M5749 2097l12 40M7319 1406l-2 -40M5782 1579l-11 -3M7082 2108l25 30M6612 2759l25 0M6797 1178l-28 -30M7413 2194l-13 29M5928 1355l-20 42M7409 1407l-6 -19M5929 1621l-2 54M6572 2669l-17 23M6016 1266l-24 -3M6842 1011l-34 -13M6920 2393l-18 55M6747 1541l32 57M6375 2726l22 9M6692 2619l33 15M7319 1406l32 46M6589 958l-29 -13M6588 1153l-29 47M6232 1594l-48 -3M7077 1043l47 32M6637 1829l5 52M7368 1326l-3 4M6604 2686l-49 6M6995 2672l16 -10M6612 2759l-48 0M7495 2049l-7 22M5918 2445l24 25M6887 2366l33 27M7128 2236l-32 43M6628 1558l-65 22M7289 2408l16 -8M6819 2599l-47 20M7369 1746l24 27M5750 1991l-3 54M6489 920l-12 -1M6966 1858l10 51M5947 1215l-37 49M7474 1885l-1 59M6182 1199l-38 37M7318 2414l-33 40M6588 1153l-12 -31M7061 1048l14 0M7411 1397l-12 -20M6126 1693l-46 -2M6636 2456l-47 17M6643 2213l-22 60M5889 1262l-33 49M6740 968l-48 -7M6006 2432l-28 -10M5724 1983l-8 2M6902 2312l25 26M5914 1942l15 57M6455 959l-22 -7M6621 2273l-21 63M6602 1956l12 49M7068 1492l59 25M7071 2617l-43 27M5874 1359l-11 -1M5910 1264l-7 -3M6326 955l-52 18M6095 1145l-33 39M7175 1266l38 44M5821 1478l-11 -1M7207 1390l25 -7M6690 2185l-69 -14M6928 1913l-52 8M7049 1052l-22 -18M6588 2757l-44 -1M5984 1309l-27 1M7493 1935l-4 47M7379 2329l-19 25M6951 2611l-17 29M6000 1688l-39 46M6417 2740l22 3M6667 2144l-46 27M6433 1176l-12 -35M7428 1432l25 58M6935 2466l-16 46M5797 1679l-20 42M6947 1066l-29 -29M5712 1638l-8 43M6462 1246l-56 -11M6816 1403l3 45M7378 2287l-9 31M7498 1973l2 29M5926 1722l-34 -10M5723 1620l-7 9M6598 2123l23 48M7207 1390l47 45M6255 2651l16 14M6936 2697l-46 17M6598 1655l-11 47M7140 1397l-28 40M7416 1792l24 -41M6552 1982l-65 -32M7197 1571l3 54M7270 1688l34 40M6162 1320l-10 -43M6078 2321l-37 -9M7106 1123l-40 -33M7343 2359l-25 37M5951 2414l-23 -10M7415 1908l0 67M7372 1494l-1 -41M6924 2053l-55 3M7010 1014l-28 -16M6678 913l45 6M6880 1166l14 -37M5904 2189l-6 49M5981 1532l-35 -3M7088 2491l29 5M6084 2173l-18 50M6634 2574l-20 37M5982 1175l-35 40M6927 1028l10 -7M6334 1297l-49 -6M7083 2389l34 11M6652 1514l25 63M5715 1868l4 61M6449 931l-10 -3M6508 2573l-20 35M6978 2244l-34 31M7372 1494l16 44M5726 2091l5 6M5878 2184l-28 -8M6533 1679l-48 -34M5999 1743l-34 48M6526 1780l1 46M7272 2257l-28 39M6021 1226l-29 37M6765 925l-42 -6M6724 2540l34 21M5970 1578l-2 54M7324 2406l-31 38M6285 1291l-34 36M6713 2230l-49 24M6318 1890l-39 57M7244 2296l-32 43M5709 1926l7 59M7270 2302l-29 41M6691 1203l-24 40M7019 1013l42 21M7093 2593l-44 29M6960 983l-30 -13M6664 2254l-43 19M7472 1549l15 59M5900 1478l-16 42M5944 2153l-30 -4M7106 2607l-23 16M5969 1219l-37 47M6844 2728l-47 11M7319 2367l15 -7M6588 1153l-65 -18M6857 979l21 -1M7039 1775l18 55M5724 2086l16 49M7439 2047l12 3M5702 1764l-1 -46M6621 2273l22 42M6849 2704l-20 16M6928 1212l-48 -6M6471 1800l-54 -38M5714 1704l-5 51M7122 2598l-39 25M7515 1769l4 50M6702 2754l-48 3M5706 1715l-4 49M7448 2175l-3 19M6776 2715l-51 12M6326 955l-45 16M6002 1139l-3 4M6035 2012l11 52M7399 1441l30 39M7134 1235l-15 -39M5806 1588l-14 -5M6179 1363l-22 42M6780 2734l-25 11M5800 1476l-8 0M7160 1131l37 24M7379 2329l-31 46M6454 991l-27 -11M6970 987l42 22M5696 1767l-2 54M6928 1212l-48 -46M7429 1480l2 -13M7476 1553l18 64M5889 1357l-15 2M6416 2590l-18 31M6433 1176l-51 -12M7014 1844l-48 14M7428 1432l15 39M7046 1937l19 44M6099 2524l-26 -7M7092 1343l48 54M5713 2038l-10 -47M6688 1113l-43 31M6427 1911l-57 -33M7192 1670l-18 39M7445 1996l-17 44M6382 1164l-43 25M6552 1982l-54 17M6237 2682l-44 -21M5833 1443l-9 -2M6671 2350l-16 52M6851 1325l-35 -45M7063 2563l-45 30M7141 1092l42 30M6966 2304l-64 8M7102 2212l26 24M7437 2218l7 -15M6191 2321l-12 51M7049 2622l22 -5M6688 1113l-12 -31M6946 1087l-37 -13M6924 2053l-41 43M5845 1601l-7 47M7451 1491l-4 -17M7014 1454l-38 43M6093 2274l-15 47M7285 2454l-26 26M7287 1401l3 -31M7012 1994l-51 12M6433 2335l-48 10M6323 975l-18 -3M6244 1058l-44 28M5778 1777l-15 50M5714 1664l-6 8M6441 1612l-48 -34M6430 2235l22 47M6718 1434l-34 39M7003 2621l-45 23M5721 1659l2 -39M6244 1024l-41 23M6664 2254l-21 61M6946 1087l1 -21M6533 1679l-59 18M7018 2593l28 1M6875 1027l-33 -16M6258 992l-12 -1M6413 2387l-18 51M7450 2151l-10 29M6157 1405l-21 -46M5895 1772l-29 -5M7108 1062l44 32M6636 1774l1 55M6299 2705l-46 -18M7363 2347l-23 34M6122 1316l-12 -44M7161 1547l-36 25M6919 2512l28 19M7019 1013l13 4M7373 2258l-5 29M5799 2239l-11 -5M7453 1490l-10 -19M6152 1277l-42 -5M6131 1045l-45 29M6727 2418l-12 50M6949 1699l-47 8M6005 2531l21 14M6616 943l-56 2M7387 1447l-12 -50M6452 2282l-46 9M6629 2741l24 6M5805 1441l-20 33M6857 979l-9 -13M7096 2279l-35 40M5739 1579l-6 1M6578 1535l-15 45M6113 2013l-26 56M7519 1819l1 21M5737 1549l-3 5M6700 2382l27 36M6856 1001l13 -6M6471 1800l-57 12M5755 1576l-9 37M7461 1943l12 1M7234 1185l40 36M5851 1559l-28 35M7433 2161l-2 25M6301 1218l-4 -38M5780 1435l-18 40M6588 2759l-27 -4M6970 987l8 6M6061 1100l-41 36M7098 1302l44 12M5843 2081l-9 44M6074 2017l13 52M6751 2748l-49 6M6917 1865l-55 7M7071 1073l-22 -21M6488 942l-55 10M6001 1223l-20 -1M7014 1844l-38 65M7151 1489l34 25M7439 1454l23 58M5894 2278l25 49M6485 1645l-11 52M5857 2131l-23 -6M6337 980l-14 -5M6113 2614l21 14M7320 2224l-23 38M7444 2203l3 -13M7345 1841l27 26M6886 1364l-12 37M6765 961l23 -5M7479 1994l10 -12M5734 1554l-14 49M6975 2617l-41 23M5702 1920l-8 -42M6169 2065l-21 59M7179 1202l0 -25M6368 959l-45 16M5966 1176l-36 41M7414 2164l-1 30M6270 1897l-37 60M7151 1489l10 58M6041 2504l31 35M7141 1092l20 10M6953 1051l-35 -14M6446 1209l-40 26M6189 1283l-9 -43M6387 940l-10 0M6933 1527l-41 14M7021 2514l-42 28M5793 1435l-21 37M6117 1107l23 -34M6105 1067l-44 33M7028 2644l-20 18M7158 2459l28 3M7441 2132l11 -8M6988 1248l-20 -44M6713 2701l-17 19M6197 2648l-46 -23M7439 1540l15 54M6632 1394l-40 33M6299 2670l-28 -5M7012 1994l-27 52M7264 1734l40 -6M6249 2684l-41 -18M7490 2049l7 -16M6011 2167l20 49M6953 1051l12 -9M7514 1915l-7 46M6255 2651l-25 -4M7400 1959l15 16M7049 2639l-41 23M6193 2661l-43 -24M6748 2708l-52 12M7036 2559l-44 29M6406 2732l-31 -6M7254 1435l9 54M6377 1931l-59 -41M6127 2499l2 33M7487 1594l9 45M6920 2393l24 27M6544 1625l-45 -27M6105 2221l-39 2M7197 1155l-17 -22M6097 2494l2 30M6894 959l-37 -11M5842 1975l11 58M6769 1148l-66 -7M6294 2160l-23 55M7264 1734l-18 37M7108 1062l16 13M5835 1478l-12 36M6317 1259l-32 32M7299 2375l-29 39M6646 2100l21 44M6281 2656l18 14M5897 2355l31 49M6672 927l-49 -3M6271 2215l-41 6M6100 2363l-1 52M6459 2696l-43 -2M7351 1452l20 1M7472 1567l13 55M6416 2694l-38 -3M7289 2408l-18 36M6436 2554l-69 -25M7026 2121l-35 46M7169 1151l-50 -44M5839 1351l-21 42M7428 2040l11 7M5947 1215l-44 46M5921 2367l-24 -12M5997 1484l-36 -4M6723 1383l-48 -21M5837 1698l-22 41M6856 1001l-13 -18M7355 2351l-27 40M6701 1531l-24 46M6470 1743l-47 -30M7178 2377l-10 44M6347 2645l19 18M6581 911l48 -1M7040 2649l-29 13M7423 2236l8 -8M6424 2477l-16 44M5876 1562l-6 50M6576 1122l-53 13M7314 2177l-19 40M6567 2622l23 21M6206 1325l-27 38M6634 911l-5 -1M6214 2369l-12 46M6085 1102l-53 34M7169 1151l38 26M6555 2353l-23 51M7147 2367l31 10M6301 1218l-41 -8M7401 2291l-27 44M7058 2076l24 32M7515 1836l4 -17M5747 2045l13 52M6917 1865l-41 56M6221 1643l-5 49M7421 1488l8 -8M7158 2260l-1 56M6944 2420l32 18M5778 2057l-17 -3M7452 2093l10 -5M6525 2309l30 44M5788 1545l-8 -3M7306 1919l25 31M7439 1454l14 36M7401 2165l13 -1M6279 1947l-46 10M6563 1469l-42 -31M6902 2312l-15 54M6765 961l-21 -14M7044 1024l-32 -15M6990 1147l-59 -4M6698 2514l-48 18M6421 1141l-39 23M6540 1934l-53 16M7414 2243l9 -7M5760 1508l-17 36M6199 1015l-8 -1M7157 1109l44 31M6241 2668l18 13M6189 1283l-37 -6M7334 2360l9 -1M7075 2188l27 24M6022 1352l-25 43M6990 1147l-37 -28M6251 1327l-17 -41M7454 1511l-3 -20M5748 1760l-12 -4M5776 2220l19 38M5750 1542l-7 2M6216 1692l-48 3M7028 1094l57 28M7439 1540l22 44M6654 2757l-47 0M5706 1869l3 57M6000 1796l-31 43M6784 977l-44 -9M6046 2064l22 54M6354 988l-44 18M5839 2341l-1 -7M6766 1395l-48 39M6453 1567l-45 -36M6725 2634l-54 15M7232 1588l35 5M6173 1643l-5 52M5731 2087l-16 -50M5814 2248l6 35M6544 1625l-59 20M6133 2580l27 24M6949 1634l38 49M6367 2529l-43 6M6711 2752l-27 5M7201 1243l34 23M6377 940l-6 1M6224 994l-44 22M5835 1478l-26 34M7040 2230l-62 14M6398 2621l-18 24M6130 2458l-3 41M6211 2615l-26 -6M7331 1507l16 49M7388 1538l21 3M5829 2254l-15 -6M7047 1029l14 5M6887 1017l-45 -6M6508 2573l29 25M6921 2701l15 -4M6949 1634l-44 17M7472 1567l15 41M7342 2087l-35 29M6667 946l-51 -3M6424 2644l-44 1M5706 1989l-2 2M5727 2088l-3 -2M5874 1359l-20 41M7431 1467l20 53M5724 1870l-5 59M6610 1493l-32 42M5910 1264l-33 49M6129 2532l0 25M6088 2598l-24 -20M5819 1795l-19 52M5886 1934l-20 47M6470 1743l-53 19M7448 1937l13 6M5810 2207l19 47M7243 1206l40 37M6081 1852l10 54M6904 2009l-59 -2M6995 2672l-45 20M7169 1151l28 4M7424 1592l9 52M6417 1762l-3 50M6035 2012l-22 50M5763 1827l-13 56M6443 2708l-40 -3M5768 1471l-14 38M6073 2517l-32 -13M6909 1816l-51 2M6684 1473l17 58M6645 935l27 -8M6020 1532l-50 46M6539 936l-51 6M5986 1352l-2 -43M7083 2623l-32 18M6248 2268l-42 6M6997 1795l-31 63M5850 2176l24 57M5985 2480l-22 -10M7014 2409l-9 47M6326 2405l-42 6M6563 1469l-71 13M6514 1045l15 -27M6922 2603l-46 22M7319 1806l26 35M6419 1865l-49 13M6947 2531l32 11M7115 2587l16 -3M6324 2535l23 33M5929 2458l28 30M6684 1473l-45 -20M6908 2137l-63 -3M6755 2745l24 -2M6644 2631l-19 31M6984 1085l-37 -19M6582 2388l-18 51M7157 1109l26 13M6489 1188l-43 21M7513 1724l0 25M6739 2495l-41 19M6852 2720l-48 14M5823 1514l-11 36M5904 1311l-41 47M6251 1327l-45 -2M6271 2665l-4 9M6519 928l37 -10M6794 1313l-49 -23M6013 2494l1 19M6224 1899l-46 7M7183 1122l-22 -20M7233 1684l37 4M7044 1244l20 -24M6984 1085l8 -14M6453 1567l-60 11M5843 2327l22 38M7328 1881l-22 38M7374 1937l26 22M7344 2328l14 -6M6006 1138l-40 36M7213 1310l36 53M5806 2017l-10 44M6204 2170l26 51M6931 972l-37 -13M6526 2207l22 44M5768 1662l-4 55M7361 1602l5 50M7024 1505l24 43M6243 2007l12 53M7138 1083l14 11M6035 2359l-31 -7M5819 2070l-23 -9M6262 1029l-18 -5M6892 1541l-62 -40M7128 2236l-3 62M6578 2744l30 7M5929 1621l-35 46M5782 2003l-17 -3M6810 954l29 2M6134 2628l-30 -20M7373 2258l12 -2M7298 2430l-36 42M6537 915l-48 5M6772 2619l-47 15M5981 2510l-14 -18M7495 2049l4 -22M6589 1365l-37 -25M7318 1441l33 11M7225 2510l-38 35M7152 1094l-28 -19M7359 2231l-20 35M6288 1000l-44 24M6715 2468l-46 18M6517 2631l-22 27M5879 2348l5 31M7431 1467l23 44M7179 1177l-44 -43M7375 2000l-25 37M6917 2689l24 -1M6927 2338l-7 55M6281 2656l-26 -5M5889 1357l-23 43M6743 1115l-10 -27M7243 1206l31 15M5897 2355l-18 -7M6632 1118l-56 4M6991 1735l48 40M5796 2267l19 35M6266 2693l-47 -20M5796 2061l-4 52M6895 2591l-19 34M6709 925l36 0M7036 2035l22 41M5727 1587l-11 42M6983 2668l-42 20M6890 2714l19 -7M6206 2641l-28 -8M5735 1816l-12 -2M5960 2005l-31 -6M6979 2542l29 9M6909 1816l-47 56M6645 935l-22 -11M6453 2511l-45 10M6106 1542l-31 -48M5728 1929l-4 54M6203 1047l23 -29M5757 1939l-16 -3M6244 2415l-42 0M7226 1813l-26 32M7447 1474l15 38M7406 2081l-23 29M7167 1294l46 16M6862 1872l14 49M6295 2261l-47 7M7185 2328l-7 49M6569 1093l-3 -27M5914 2421l5 20M7462 1512l-9 -22M7444 2203l-15 24M6077 1141l23 -37M6157 2585l-24 -5M6233 2674l-46 -22M5963 1177l-39 40M5974 2347l30 49M6722 2329l-22 53M7051 2157l24 31M6367 1675l-43 -40M5738 2089l-7 -2M7269 2341l-36 44M6519 928l-18 -5M6023 2549l-42 -39M6354 2444l-17 49M6301 2361l-43 4M7049 1140l47 21M7234 2454l22 -7M7276 1953l-37 34M6822 989l-38 -12M5942 1436l-29 1M6180 1240l-28 37M5831 1347l-23 43M7328 1881l3 69M7289 1483l16 -21M7009 2645l19 -1M6845 2007l24 49M5892 2415l-6 -11M6978 2244l-12 60M6922 1174l-28 -45M6563 1580l-64 18M7173 2552l-23 24M6960 1572l29 44M6023 2549l-18 -18M6417 1108l3 -33M5884 1520l-24 -3M6163 1114l-27 -1M5764 1614l-17 41M5690 1841l2 -39M6867 2720l-40 11M6423 929l41 -6M6965 1042l-28 -21M6895 2688l22 1M7017 2200l-60 8M6831 2645l-45 16M7289 1483l19 42M7363 1528l25 10M7121 2353l-38 36M6499 1598l-14 47M6136 1113l-41 32M6246 991l-9 0M7016 1400l-39 5M5698 1930l-2 2M7411 2219l-15 33M6431 2741l25 6M6477 2225l-25 57M6720 952l-53 -6M6658 2676l-54 10M6816 1280l-15 -50M6347 2645l-14 16M7246 1180l41 42M5741 1936l9 55M5870 1816l-21 55M6133 1043l-43 28M7375 2000l-2 54M7404 1584l5 -43M5786 1429l-5 3M5948 2475l25 27M6162 1496l-48 -1M6017 2263l24 49M6024 1176l19 -37M6728 1061l2 -24M7458 2161l-6 22M7485 1622l2 -14M7178 2377l29 3M5925 1483l-25 -5M5705 1810l1 59M6179 2372l-13 45M5900 1478l-40 39M6890 1967l-57 -7M6905 990l-27 -12M6082 1314l-35 -1M7397 2296l4 -5M7519 1792l0 31M7448 2175l10 -14M5898 1986l-32 -5M7404 1584l11 55M6709 925l-14 -7M5976 2157l-32 -4M6423 1713l-6 49M6047 1313l-35 -2M6514 2750l-14 3M7520 1840l-3 30M7339 2266l-22 37M6695 939l31 -4M6007 2306l-3 46M6333 956l-52 15M7207 1177l-10 -22M7225 1155l47 49M6615 2717l33 11M7406 2081l-8 43M6059 1959l15 58M7021 2514l28 10M7293 1775l26 31M5858 1303l-27 44M7498 1635l-4 -18M6303 2055l-27 56M7215 2231l-29 45M6722 2329l26 35M7503 1924l-5 49M6569 1093l-57 -19M6880 1298l-29 27M6954 1807l12 51M6883 2096l-58 -4M6333 2661l20 15M5792 2113l-1 42M5774 1946l-17 -7M6521 1438l-29 44M6806 2541l28 20M5845 1353l-6 -2M7298 1846l47 -5M6502 2269l23 40M6364 1828l6 50M5780 1435l2 2M6803 2632l-51 17M6913 1005l18 -1M6067 1399l-36 -3M6180 1016l-49 29M7152 1651l22 58M6507 2363l-44 13M7413 2029l15 11M6200 1086l-37 28M6060 1541l-40 -9M6013 2062l15 55M7186 2462l-40 36M6880 1298l-64 -18M6455 2731l33 11M7276 1953l-8 62M7201 1140l-18 -18M7047 1365l23 42M6148 2124l-45 -4M7298 1846l-22 41M5716 1756l-2 -52M7142 1314l39 33M5735 2038l-9 -3M5739 1706l-13 48M6806 1815l-52 -9M6417 1108l-43 -12M6942 1962l19 44M7093 2593l22 -6M6240 2600l23 23M5780 2192l-11 -7M6408 1531l-15 47M7017 2200l-39 44M5899 1257l-39 48M7267 2206l-24 44M5963 2470l-26 -18M6922 1477l-53 -31M5944 2153l21 55M6848 966l24 1M7086 2567l-40 27M5946 2339l0 38M6479 2545l-43 9M5774 1617l-6 45M6479 2323l-46 12M5965 2486l-17 -11M6990 2503l-11 39M5924 1217l-36 44M5778 1777l2 58M5701 1718l-5 49M6202 2415l-7 45M6808 1134l-39 14M6414 1812l-50 -36M7181 1116l-29 -22M7127 1517l-2 55M6467 1123l-46 18M6573 2188l-25 63M5965 2208l-11 43M6728 1061l-51 -28M6230 2647l-5 8M6905 1651l-3 56M6775 1957l-61 -11M7342 1481l9 -29M5874 1359l-32 40M7414 2262l-26 44M6808 1134l-17 -32M7411 2129l-24 34M6890 1967l-45 40M7202 1762l44 9M6353 1539l-39 -44M6964 2484l26 19M6397 2735l-55 -16M6604 2548l-19 40M6897 1009l-28 -14M6759 934l32 2M6323 2107l-29 53M5850 2176l0 48M6133 1907l-42 -1M7283 1243l-9 -22M7340 2381l-22 33M6695 939l-23 -12M6620 1086l-44 36M5969 1266l-19 -1M5767 1891l-17 -8M6390 2562l26 28M5736 1988l11 57M7067 2596l-18 26M7233 2385l-12 39M7202 1762l-26 35M6303 2055l20 52M7019 2659l-39 19M6334 1152l-37 28M6967 1452l9 45M7014 2409l30 17M5843 2347l-4 -6M5942 1436l-17 47M5905 1360l-16 -3M7161 1102l44 35M6858 1818l4 54M6187 2569l-29 -7M6337 2493l-40 4M6620 1086l-4 -26M6883 2096l-38 38M6458 2583l-42 7M7468 1530l-6 -18M5738 1653l-7 49M6501 2162l-47 17M6948 1005l26 6M6052 1223l-31 3M6241 2668l-44 -20M6991 1290l-43 -39M6913 1005l-8 -15M7314 1266l32 41M6570 2292l-15 61M5798 1511l-10 34M6573 925l-17 -7M5803 1390l-23 45M6850 2518l28 18M7141 2416l-38 33M7249 1920l-33 32M6907 1760l47 47M6295 1142l0 -36M6485 2710l33 13M6217 1203l-37 37M7396 2252l-8 30M7442 2155l8 -4M5839 2341l23 33M7298 1846l8 73M7225 1438l29 -3M7124 1075l47 37M5850 2224l22 47M6237 2682l16 5M5781 1432l-1 3M6377 1931l-49 9M6178 2633l-27 -8M6105 1067l-48 31M7440 1595l14 -1M7008 2551l28 8M6066 2223l-35 -7M6861 2577l34 14M6907 1760l-53 3M6992 1071l-27 -29M6604 2686l29 12M5866 1981l-13 52M6775 1351l-9 44M6736 2265l-44 24M6318 1890l10 50M6761 2304l-39 25M5969 1839l-34 -5M7225 1438l38 51M6848 966l-9 -10M6785 1072l-52 16M7311 1247l36 46M6513 1553l-14 45M7372 1867l36 -22M7070 1407l-18 34M6219 1849l-41 57M6414 1812l-50 16M7221 1726l25 45M5961 1734l4 57M6001 1144l-40 36M5976 2300l-2 47M6842 1552l-46 -3M5702 1689l-1 15M7354 1974l-4 63M7376 1570l12 -32M5918 2445l-32 -41M7511 1963l3 -23M6068 2410l-4 38M6894 1129l24 -27M6785 1072l-7 -24M7015 1138l-33 -29M7464 1646l6 60M6775 1957l-50 39M6166 2271l-15 51M7481 1633l4 -11M6274 2571l-30 1M6544 2756l-44 -3M6581 911l-6 0M6588 2759l-46 -2M5946 1529l-21 -46M6248 2268l26 48M6876 1921l-56 -7M5879 1877l-30 -6M7256 2447l15 -3M5823 1398l-5 -5M7515 1769l4 23M7499 2027l-11 44M6333 1991l-54 -44M6314 2205l-43 10M6614 2611l-24 32M6728 1335l-53 27M7200 1625l36 9M5918 2445l-6 -13M6759 934l-14 -9M6424 1663l-1 50M5993 1175l-11 0M6258 2639l-3 12M7015 1138l5 -27M5709 1755l-7 9M6085 1102l-42 37M6160 2604l24 20M6501 2162l-24 63M6752 1705l-50 -12M5997 1395l-11 -43M7212 1199l-5 -22M6979 2542l-13 36M7391 2068l-8 42M5830 1348l-26 43M6502 2734l-47 -3M7161 1102l20 14M7196 2522l16 -6M6937 1021l-40 -12M7496 1685l5 63M7497 2033l-2 16M5730 1616l-9 43M6206 2274l-15 47M6598 2123l-69 -23M5854 2303l-20 -12M5974 2347l-2 34M5824 1441l-24 35M6620 1086l-54 -20M6013 2494l-28 -14M7369 2318l10 -5M5765 2000l13 57M6188 1961l-37 54M6632 1336l-35 -23M6948 1005l0 -10M5999 1143l2 1M6552 1401l-31 37M6274 973l-8 3M5697 1729l5 -40M6985 2046l-41 47M5850 2224l0 42M6043 1139l-11 -3M5812 1390l-19 45M7070 2439l-9 45M6937 1021l17 -1M6287 2539l23 34M6518 2723l-16 11M6302 1075l12 -33M7395 2015l18 14M6004 1634l-4 54M5957 1310l-29 45M7249 1920l-10 67M7414 2243l-6 24M7221 1165l-20 -25M5718 2033l-12 -44M7458 2168l-14 35M6395 2438l29 39M5843 2327l-34 -50M6189 2504l28 35M6264 1255l-30 31M7065 1127l20 -5M6621 2505l-17 43M6467 1089l-47 -14M7140 1397l15 48M6907 1760l-49 58M6484 1409l-37 -38M7462 2050l-10 43M6976 2438l-41 28M7311 1247l18 23M5972 2381l34 51M6455 2731l-36 -4M5792 1583l-18 34M7421 2088l11 6M6249 2684l17 9M7309 2338l-10 37M7008 2662l-48 22M6013 1440l-16 44M7213 1279l22 -13M6843 983l-18 -16M6880 1166l-42 -1M6477 2225l25 44M6313 2644l-7 16M6133 1907l11 53M6143 1194l-33 -2M5699 1816l0 53M6224 994l-51 28M7472 1764l-5 60M6517 1105l-50 18M6439 928l-8 -1M7481 2035l10 -17M6834 2561l27 16M5823 1594l-6 46M6918 1594l-13 57M7122 2598l12 -9M6646 914l38 0M5792 1476l-7 -2M7280 2095l27 21M6152 1152l-42 40M7452 2183l-15 35M5894 1667l-28 -8M6347 2568l-11 31M6692 2289l-49 26M6876 1921l-43 39M7174 1709l47 17M6370 1496l-41 -40M7448 1534l3 -14M7064 1220l31 0M5809 2277l22 42M6168 1799l-42 55M5788 1545l-6 34M5768 1471l-18 41M7440 2180l-12 31M5874 2233l20 45M7271 1290l31 32M7285 1260l-2 -17M6833 1960l12 47M6676 1082l-44 36M5843 2347l25 36M7125 1572l-48 15M6217 2573l-3 25M6752 1705l-53 40M6042 1107l-41 37M6373 1129l-39 23M5775 2106l16 49M5809 2277l-8 -5M6103 2120l19 50M7496 1685l10 50M7348 2375l-30 39M5999 2007l14 55M6726 935l-54 -8M7388 2282l-9 31M7152 2559l-21 25M6563 1284l-32 -32M6350 956l-17 0M7493 1935l5 38M6869 2056l-44 36M5914 2149l18 52M6760 2200l-24 65M7293 2041l-39 30M6578 1011l-49 7M7092 1343l41 0M7318 1282l30 39M6667 1411l-28 42M5884 2379l30 42M6825 2092l20 42M7518 1890l-4 25M6007 2463l-28 -11M5942 2053l14 53M6334 1116l2 -33M6433 2681l26 15M6251 1171l-34 32M6367 2529l23 33M6992 2588l-17 29M6348 2720l-49 -15M6102 2568l-26 -8M6931 1004l-26 -14M7509 1698l7 49M7298 2430l-22 32M6609 917l-53 1M5889 1312l-26 46M6707 2740l-23 11M6214 2598l22 23M5892 1259l-34 44M6275 2692l-26 -8M5736 1756l-10 -2M5921 1226l-32 36M6484 1409l-67 -2M5781 1668l-17 49M6847 2678l23 7M7276 1887l30 32M7330 2131l-41 31M5830 2172l-22 -10M6774 2397l27 28M7204 1332l45 31M6878 978l-6 -11M5799 1436l-20 35M7452 2124l-2 27M6624 1033l9 -24M7337 1626l29 26M7003 1062l-38 -20M6713 2701l35 7M6218 1164l2 -39M6874 1493l-44 8M5854 1400l-30 41M6289 2003l-46 4M6872 967l-33 -11M6917 2689l-20 16M6834 2561l-15 38M7317 2267l22 -1M6968 1204l4 -33M6358 2624l-11 21M6371 941l-53 17M6514 2750l-41 -4M5990 2502l32 33M7451 1650l5 57M7474 1640l7 -7M5924 1217l-36 44M7096 1161l52 35M5992 1263l-23 3M6202 2415l31 43M7398 2124l-11 39M6191 1014l-7 0M6088 2598l16 10M7003 1062l15 -3M6370 1496l-56 -1M7489 1982l-8 53M5970 1578l-41 43M7325 2008l25 29M6020 2543l24 22M6006 2432l31 44M6380 2645l-33 0M7005 2270l-39 34M6983 2646l26 -1M7508 1684l-6 -27M7161 1547l36 24M6323 2107l16 46M6039 1743l0 54M5815 1739l-20 -7M7314 2177l6 47M5741 2138l6 5M6791 1102l-58 -14M6477 1031l17 -27M6944 2275l22 29M5829 1555l-6 39M7213 2493l22 -11M6419 2727l-13 5M6680 1310l-5 52M6934 2640l-46 21M6865 2170l-62 0M6791 936l-46 -11M5857 2131l21 53M7283 1540l17 49M5999 2007l-24 50M7489 1694l4 65M6507 2363l25 41M6048 2547l-5 9M7098 1302l-4 -41M7176 1797l24 48M7208 2100l-47 21M7247 1224l-40 -47M7067 2596l26 -3M7426 2243l-25 48M7364 2102l19 8M5961 1480l-36 3M6211 2630l-27 -6M6148 2124l14 47M6680 1310l-37 -23M6236 2636l-25 -6M5904 2189l-26 -5M5731 2097l16 46M6725 2727l-18 13M7318 1282l28 25M7080 1181l-31 -41M6570 2292l30 44M5810 1477l-10 -1M6616 1060l-50 6M6342 1053l17 -31M7295 2217l-23 40M7441 2132l-18 32M6214 2598l-3 17M6269 2600l-29 0M6334 1116l-39 -10M5928 1214l-4 3M7426 2243l3 -16M6145 2222l21 49M6615 2717l-51 6M7394 1670l3 54M6208 2666l-33 -15M5965 1791l-30 43M6129 1646l-46 -3M5834 1348l-26 42M6336 1587l-12 48M7113 1619l39 32M7509 1721l3 64M7049 2622l-21 22M7506 1985l-9 48M7452 2093l0 31M5956 1218l-9 -3M7080 1181l16 -20M6801 944l28 2M7216 1952l23 35M6988 1248l-40 3M7486 1590l12 45M6772 2619l31 13M6446 2737l27 9M6514 1374l-36 -33M7330 2131l-16 46M6021 1226l21 -47M6103 2551l-31 -12M6230 2647l-24 -6M7373 2054l-31 33M6980 2678l15 -6M6469 1058l-49 17M6874 1401l-46 -41M6931 2174l26 34M5697 1944l2 6M5894 2406l-15 -12M6888 2661l29 4M7263 1489l45 36M7458 1762l-5 56M5981 2510l24 21M5745 1523l-14 52M6389 2679l-11 12M6162 1496l-56 46M5912 1525l-28 -5M5956 2106l-12 47M6043 2556l-23 -13M5764 1614l-8 41M6844 2728l15 -5M6053 2265l-12 47M7249 1301l-14 -35M7451 1650l19 56M6695 918l39 2M6600 2336l25 36M6858 1259l-57 -29M7301 1242l-14 -20M6390 1455l-35 -42M6629 910l-54 1M6488 2742l26 8M7224 1884l-30 32M6684 2757l-30 0M6778 1048l-48 -11M6467 1521l-59 10M6875 1597l30 54M6248 2268l-16 49M7134 2589l9 -10M5768 1662l-12 -7M5834 2125l16 51M7249 1301l38 34M6477 1031l-35 -15M6610 1261l-13 52M7212 2339l-34 38M6927 972l33 11M6820 1914l13 46M6123 1148l-39 38M5761 1771l-13 -11M6113 2013l17 52M5829 1555l-23 33M7406 2280l-17 21M6104 2608l-40 -30M6512 1074l2 -29M7390 1621l25 18M5765 2000l-4 54M6061 1138l-18 1M7489 1694l12 54M6776 945l-50 -10M7187 2545l-44 34M7368 2287l-24 41M7293 2444l8 -15M7465 2148l-13 35M5860 1305l-29 42M6099 2524l30 33M6610 1261l-29 -31M7292 1225l-20 -21M6188 1961l11 55M6367 2398l28 40M5702 1764l-3 52M5902 2426l-10 -11M6527 914l41 -1M5898 2238l-24 -5M7213 2290l-28 38M7268 2015l-41 29M5692 1893l0 -43M6825 1603l-11 56M7347 1556l16 -28M7319 1299l33 42M6342 1053l-28 -11M5748 1760l-1 60M7332 2392l-31 37M6800 2052l25 40M5750 1542l-11 37M6031 1396l-34 -1M5775 2106l-15 -9M6835 1094l-9 -28M7388 2227l-15 31M7247 1224l36 19M7426 2243l-16 23M7088 1920l-42 17M6954 1020l-23 -16M5981 1532l-46 42M6309 2454l28 39M7509 1721l6 48M7347 1556l14 46M6276 2111l-46 2M6801 944l-10 -8M7310 1249l38 51M5714 1664l-8 51M6625 2372l-18 50M5866 1659l-2 51M6514 1374l-67 -3M6921 1429l1 48M7254 1850l22 37M7307 2116l-41 28M6806 2275l-70 -10M6803 2719l-49 13M6715 2468l-17 46M6747 1751l7 55M7373 2054l-9 48M7213 2526l11 -12M7433 1644l7 -49M6084 1078l-42 29M5809 1512l-10 34M6677 1033l9 -22M5897 1617l-31 42M6424 2644l25 18M7265 1204l22 18M5795 1788l-15 47M7028 1094l-36 -23M7499 1672l1 -17M6057 1098l-9 4M6812 2672l-15 23M6921 1429l-52 17M7458 1762l9 62M6900 980l-28 -13M6948 1251l-20 -39M6418 2088l-29 54M5792 1583l-7 44M6695 918l-11 -4M6364 1722l0 54M5898 1986l14 62M6431 927l-54 13M6872 1046l3 -19M7083 2389l-13 50M6292 2678l-25 -4M6390 1455l-61 1M5789 1432l-3 -3M5924 2243l-5 42M7249 1363l26 62M7224 1884l-8 68M7230 1486l33 3M6696 1796l-60 -22M6564 2723l-15 12M6005 2531l-38 -39M6131 2608l-29 -12M6318 958l41 -9M6850 1126l-59 -24M6529 1018l11 -23M7372 2153l15 10M7005 2456l-41 28M6791 2472l-22 48M5908 1397l-24 3M6436 2554l-20 36M7043 1088l-25 -29M6512 1074l-43 -16M6567 2622l-28 30M6745 1290l-17 45M6964 2484l-17 47M6829 946l-38 -10M7117 2496l-36 31M7230 1486l24 53M7233 2385l25 -2M5935 1574l-6 47M5723 1620l4 -33M6588 2757l24 2M6955 2363l-35 30M7154 1743l22 54M7245 1244l-33 -45M6367 2398l-13 46M5714 2042l-6 -41M6555 2692l28 13M5743 1544l-10 36M7268 2015l-14 56M7366 1652l24 -31M6653 1927l-62 -19M6897 2705l24 -4M6069 2365l-34 -6M7232 1163l-27 -26M7195 2494l-18 32M6918 1102l28 -15M5695 1739l0 14M6258 2365l-14 50M6564 2439l25 34M7319 1299l29 22M7147 1830l53 15M5781 1509l-9 30M6208 2666l11 7M7041 1063l30 10M5937 1309l13 -44M6996 1025l-22 -14M6374 1096l-38 -13M6552 1340l0 61M7258 2383l-37 41M7262 2472l-24 30M5888 1261l-34 45M5719 1929l5 54M5795 1732l-17 45M6314 2712l-29 -10M7366 1652l3 46M6131 2413l31 49M7117 2400l24 16M7509 1721l7 26M7507 1986l0 -25M7396 2252l8 -3M7147 1830l-34 26M7194 1916l22 36M6336 1083l-41 23M7009 2645l-26 23M6084 1186l-22 -2M7328 2391l12 -10M5966 1174l-38 40M5965 2486l-46 -45M6035 2359l33 51M5858 1303l-4 3M7307 2116l-18 46M7199 1134l-28 -22M7044 1244l-30 -27M5819 2070l15 55M7413 2194l-2 25M6195 2460l-33 2M6664 2254l28 35M6959 1354l-43 -24M5872 2310l-18 -7M5894 1667l-2 45M6084 1745l-45 52M6677 1033l-44 -24M6825 2700l-22 19M7001 1018l32 11M6856 1709l-2 54M6305 2699l19 11M6288 1000l35 -25M7289 2162l25 15M5781 1668l-4 53M6144 1960l-45 1M6459 2696l26 14M6297 1544l-36 -47M6416 2694l27 14M6270 1640l-4 48M6849 2704l-46 15M7433 1644l23 63M7213 1310l0 -31M5746 1516l-14 44M6061 1138l-37 38M5750 1512l-4 4M5855 2358l-12 -11M6305 2699l-30 -7M5961 1734l-34 47M6532 2404l-18 53M6055 1355l-33 -3M7519 1792l-2 -20M6494 2500l35 32M6931 1143l-13 -41M6608 2751l-20 6M6826 1066l-48 -18M6983 2668l25 -6M7456 1707l14 -1M7374 2196l14 2M7516 1917l-2 23M6049 1587l-42 0M6702 2754l18 -5M6529 1018l-35 -14M6812 1868l8 46M7155 1445l-4 44M6553 2562l32 26M6389 2142l-50 11M6337 2493l30 36M5830 1348l-26 49M6237 991l-11 2M6458 2583l30 25M6270 1063l-26 -5M7064 1696l-35 20M5902 2426l27 32M6801 1230l-4 -52M6064 2448l3 37M6872 2275l-66 0M7336 1285l37 52M5886 2404l26 28M6035 2441l2 35M5914 1942l-16 44M5854 1306l-25 39M6785 1027l6 -17M6653 1927l-51 29M7503 1924l3 32M7249 2479l-37 37M6940 2567l26 11M7493 1759l8 -11M5818 1393l-25 42M6179 1079l-20 -3M7115 2587l-24 25M7308 1525l23 -18M6760 1911l-55 -13M5747 1655l-8 51M6022 1352l-10 -41M5793 2199l6 40M7070 2439l33 10M6330 1373l-27 -39M6643 1287l-46 26M5913 1437l-13 41M5922 1221l-1 5M5756 1655l-17 51M7471 2105l-11 35M5841 1810l8 61M6066 2223l27 51M6979 1038l-25 -18M6294 971l-13 0M7500 2002l6 -17M5692 1850l2 48M6359 1022l-45 20M6171 2640l-51 -29M6095 1145l-53 34M6427 2718l-35 -4M6392 2714l-32 -5M7147 1830l-13 67M5853 2033l-26 -14M7329 1270l39 56M6293 2625l20 19M5751 1707l-12 -1M6980 2678l-30 14M5904 1311l-30 48M6552 1340l-74 1M6647 991l22 -18M6974 1021l-43 -17M6958 2644l25 2M7512 1785l3 -16M6888 2212l-37 32M6779 1598l-53 -7M6801 2425l-40 20M7415 1639l9 -47M7103 2449l-42 35M6115 2322l-15 41M6089 2596l-21 -13M5738 1614l-8 2M6342 2719l-28 -7M7001 1018l9 -4M6211 2615l25 21M6658 2676l28 14M6478 1341l-31 30M6231 1454l-31 -44M7470 2126l8 -16M7309 2338l19 -3M6974 1021l22 4M6130 2065l-27 55M6297 1544l-54 0M5786 1429l-18 42M6967 2682l-45 17M5799 2239l21 44M7381 1386l26 47M7307 1637l30 -11M5739 1706l-3 50M7462 2050l-19 44M5765 1471l-15 41M6909 1074l1 -21M6274 2316l-16 49M6392 1031l15 -25M6157 2536l30 33M7453 1818l14 6M6568 913l-50 4M7181 1347l26 43M6699 1745l-59 -21M6734 920l-50 -6M5956 2106l20 51M6053 2265l25 56M6039 1797l-39 -1M7096 1537l29 35M7307 1637l0 45M7506 1735l2 68M6355 1413l-26 43M6523 2677l-48 2M6443 2708l26 14M7243 2250l-30 40M6682 2440l-13 46M6816 1280l-22 33M6262 1791l-43 58M5984 1309l-25 43M6924 982l24 5M6093 1593l-33 -52M7287 1335l15 -13M7403 1388l25 49M7186 2276l27 14M6470 2468l24 32M5820 2283l-32 -49M5855 1353l-23 45M5957 2443l6 27M7096 1537l-19 50M7336 1285l25 30M7066 1090l-48 -31M6270 1063l18 -28M6752 2649l-47 13M6819 1448l-50 -6M6488 2417l-46 10M6789 2339l-41 25M6785 1027l-37 -27M6387 940l-54 16M6940 2567l-18 36M6642 1881l-57 -27M6972 1171l18 -24M7440 1751l-6 58M6581 1230l-50 22M6760 1911l-46 35M7128 1778l48 19M6463 2638l-39 6M5860 1305l-26 43M6365 944l-6 5M6658 2757l-46 2M7066 1090l23 5M5996 2525l-39 -37M7227 2044l27 27M5806 2017l-24 -14M5758 2181l18 39M7254 1539l-22 49M5723 1814l-8 54M5981 1532l-11 46M6417 1407l-30 -30M6284 2411l-40 4M7352 1341l-4 -20M6186 2539l-29 -3M6607 2757l-46 -2M6339 2258l-21 51M5771 1576l-7 38M6127 2499l-30 -5M6806 2275l-45 29M7128 1778l-36 29M7329 1270l19 30M6539 2652l33 17M5992 2112l-36 -6M6804 2734l-25 9M6381 1061l-45 22M6325 2673l-10 9M6677 1577l-49 -19M7047 1365l54 23M6647 991l-31 -19M6894 959l-38 -13M6131 2594l0 14M5701 1704l-6 49M7270 2414l-36 40M7481 1824l-7 61M6406 2732l25 9M7142 1314l-13 -45M6741 2039l-48 36M6258 992l-59 23M6156 2499l30 40M6625 2662l-53 7M7027 1034l34 14M7314 1312l-29 -52M5975 1174l-45 43M6231 1454l-48 -3M5722 1703l-6 53M6031 2216l22 49M7266 2144l23 18M6667 1243l-33 -29M6974 1021l0 -10M6314 1495l-38 -39M5813 2118l17 54M7092 2617l-26 12M6182 1199l-39 -5M6686 1011l-53 -2M6876 2625l-15 29M6260 1099l-40 26M5968 1632l-41 43M6705 2662l33 14M7314 1312l32 41M6392 1031l-33 -9M5816 1964l11 55M7489 1982l2 36M6629 2741l-21 10M6699 1745l-63 29M7029 2620l-20 25M7054 1628l37 32M7439 1700l17 7M7503 1868l-10 67M7119 1196l29 0M6966 2578l26 10M7506 1735l6 50M5767 1891l7 55M6147 1039l-42 28M6403 941l-53 15M6213 1796l6 53M6491 1276l-29 -30M6184 2624l-6 9M6924 982l0 -6M6828 1042l-50 6M6279 1947l10 56M5843 2347l-28 -45M5772 1539l-8 1M6643 2315l-18 57M5757 1939l8 61M7004 1356l-27 49M7054 1628l-30 29M6520 2756l22 1M7403 1388l20 34M6540 995l-46 9M5755 1610l-9 3M6313 1682l-47 6M5743 1544l-16 43M6470 2468l-17 43M6253 2687l-44 -20M7207 2380l-39 41M7271 2444l-36 38M6773 926l-8 -1M7346 1307l34 49M6501 923l-12 -3M7419 2216l-5 27M6780 2132l23 38M6104 2608l20 10M7291 2340l-33 43M6642 1881l-51 27M5821 2310l-6 -8M7070 2630l-51 29M5780 2227l-4 -2M7483 1761l10 -2M6331 2718l17 2M6864 2474l-46 23M5946 2377l32 45M6520 2756l-42 -5M7440 1751l13 67M7295 2217l2 45M6405 2194l25 41M7318 2396l10 -5M6004 1847l-29 51M6801 2425l30 25M6699 1267l-56 20M6360 1336l-26 -39M6858 2340l-69 -1M5866 1981l-24 -6M6860 951l-4 -5M7509 1706l-8 -25M6963 2669l20 -1M6417 1407l-62 6M7235 2482l14 -3M6796 1549l29 54M6508 981l23 -21M7238 2502l-36 33M6407 1006l-48 16M6991 1290l-28 21M5860 1517l-31 38M5781 1432l-16 39M6117 1107l-17 -3M5764 1717l-13 -10M6654 2757l21 -5M7387 2163l-30 27M5710 1645l-1 16M7369 1698l28 26M5966 1176l-38 38M7270 1200l22 25M7262 2472l14 -10M6318 1890l-50 -42M6995 1038l-41 -18M5795 1732l0 56M6502 2269l-23 54M6796 1549l-49 -8M7481 1824l4 62M7375 1397l-23 -56M7107 2138l-56 19M6863 957l-34 -11M6867 2720l23 -6M6479 2323l-16 53M6730 919l-52 -6M7027 1034l6 -5M6849 2612l-46 20M6523 1310l-45 31M6529 2100l-47 12M7337 2184l20 6M7404 2249l-16 33M5736 1876l-12 -6M6136 1113l23 -37M7472 2076l-11 40M7452 2183l-8 20M6718 978l-49 -5M6314 1495l-53 2M7091 2612l15 -5M7317 2068l25 19M5944 2153l-12 48M7375 1397l24 44M7153 1938l-20 64M6713 2230l-21 59M7070 1407l42 30M5774 1617l-18 38M7244 2296l-3 47M6023 1958l-37 -7M5706 1989l9 48M7393 1773l-9 48M7434 1809l19 9M5727 2088l14 46M6261 1497l-18 47M7490 2049l-2 24M6990 2503l31 11M6702 1693l-59 -18M7503 1868l0 56M5919 2285l27 54M6780 929l-46 -9M7134 2589l-31 17M6927 2338l28 25M6020 2543l-47 -41M6243 2007l-30 57M7070 1407l27 65M6506 2694l-21 16M6347 2568l-60 -29M6996 1545l-63 -18M6491 1276l-67 -6M6692 961l28 -9M7169 1873l25 43M6361 2202l-47 3M7378 2287l-20 35M7202 2535l11 -9M7253 1334l34 1M6614 2005l-62 -23M5747 2045l2 52M5992 2516l-19 -14M5959 1352l-26 45M6406 2291l-42 11M6859 2723l-30 4M7273 1641l34 41M7346 1307l27 30M6390 2562l-19 34M7085 1122l-42 -34M7445 1877l-14 46M6572 1038l-58 7M7481 2035l0 29M6533 2744l-19 6M6230 2221l-43 3M5709 1982l9 51M5837 1698l2 53M5985 2480l29 33M6266 976l-42 18M6773 926l41 9M5914 2149l-10 40M7252 2489l-39 37M5928 1214l-36 45M6406 2664l27 17M6762 1202l-36 -31M6169 1852l-43 2M6634 1214l-53 16M7373 1337l-12 -22M7157 2316l28 12M7108 1724l46 19M6478 2751l-61 -11M7318 2396l-20 34M7185 2328l27 11M7095 1220l39 15M7085 1122l21 1M6360 1336l-57 -2M7200 2012l27 32M5932 2201l-28 -12M5877 1313l-32 40M7275 1425l14 58M7044 2426l-39 30M7408 2267l6 -5M6508 981l-32 -12M7346 1353l6 -12M6233 2458l28 45M5773 1510l-9 30M7304 1728l-11 47M6876 1094l-50 -28M5963 1177l-41 44M7347 1293l21 33M7473 1944l-16 58M6380 2248l-41 10M5782 1579l-18 35M6099 1961l-25 56M6385 2732l-37 -12M6228 1093l-41 29M5735 2038l14 59M6982 998l37 15M6255 2060l21 51M6382 2486l-45 7M6068 2118l16 55M6625 2372l30 30M6559 1200l-18 -34M6077 1268l-35 0M7327 1577l34 25M6297 2497l-36 6M7368 1326l-20 -26M7047 1365l-43 -9M6847 2678l-22 22M6268 1848l2 49M5903 2390l11 31M7375 2229l-17 34M6306 2660l-25 -4M7359 2231l16 -2M5975 2057l17 55M7302 1322l-21 -46M7183 2067l-47 23M7234 2126l32 18M7140 1397l29 -12M5750 1883l7 56M6377 940l-55 15M7517 1870l-3 45M6041 2312l-34 -6M5845 1601l-28 39M6995 1038l1 -13M6514 2457l-44 11M7375 1397l32 36M5812 1550l-13 -4M6736 1018l-50 -7M6152 1152l11 -38M6814 1659l42 50M7488 2073l-10 37M5780 1542l-9 34M6024 1176l-19 1M5717 2047l14 50M6930 970l40 17M5796 2061l-18 -4M6702 1693l-62 31M7048 1548l29 39M6406 1235l-16 -35M5800 1630l-15 -3M6271 996l34 -24M7291 2340l18 -2M7057 1830l-43 14M6075 1494l-41 -5M7397 2278l-9 28M6812 2672l35 6M6159 1076l22 -32M7501 1748l7 55M5867 2087l17 54M7213 2170l-55 24M6160 2604l-2 13M6186 2592l-29 -7M7374 2335l5 -6M7232 1383l43 42M6640 1724l-4 50M6487 1950l-60 -39M7064 1220l-42 -32M6166 2417l-35 -4M5927 1781l-32 -9M6102 2584l0 12M6697 993l21 -15M6206 2641l19 14M5865 2365l-34 -46M6599 990l-59 5M5714 1704l0 -40M6916 1330l-36 -32M5706 1715l2 -43M7384 2317l5 -16M5986 1352l-27 0M7445 1877l3 60M7371 1453l-9 -49M6758 2086l22 46M7276 2462l9 -8M6555 2692l-26 17M6542 2757l19 -2M5694 1878l-2 3M6703 1141l-15 -28M6250 1410l-27 -40M7064 1220l-20 -46M6564 2029l-50 20M7148 1196l53 47M5696 1767l1 -38M7065 1981l-53 13M6213 2064l-44 1M5703 1991l5 10M5903 1567l-33 45M5881 2041l17 52M6314 1835l4 55M7281 2378l-34 41M7371 1453l23 44M7267 1593l33 -4M6041 1107l-39 32M6585 1854l6 54M6755 2745l-25 6M6953 1119l-7 -32M5888 1261l-34 45M7092 1343l6 -41M6447 1371l-60 6M5812 1390l-23 42M6830 1501l12 51M6562 975l27 -17M7404 2249l10 -6M6446 2737l-15 4M5756 1542l-9 34M5738 2089l15 50M6225 2655l-47 -22M7089 1095l-18 -22M7061 1034l47 28M7473 1944l-4 53M5928 2100l-30 -7M6716 2117l-70 -17M5764 1540l-17 36M6224 1899l-36 62M5736 1756l-1 60M6664 2597l28 22M5946 2377l-25 -10M7267 1593l6 48M7340 1673l29 25M5858 1302l-2 9M6068 2118l-21 52M6415 946l34 -15M5892 2415l-30 -41M6559 1200l-70 -12M6475 2679l-16 17M7082 2108l-56 13M6895 970l-32 -13M6797 1178l11 -44M5813 2118l-5 44M6158 1039l-11 0M7409 1407l24 50M6004 1634l-41 46M6288 1000l-17 -4M7183 2067l-22 54M7369 1746l28 -22M5930 1217l-2 -3M6151 2015l-38 -2M5937 2452l-18 -11M6786 2661l26 11M6842 1011l14 -10M7474 1885l11 1M6079 1799l2 53M6710 1643l42 62M6427 980l28 -21M6578 2744l-15 8M6230 2113l-45 6M6637 1829l-54 -25M7061 1048l-28 -19M5698 1930l8 59M6452 2282l27 41M6819 2599l30 13M7369 1746l-8 49M7088 2491l-7 36M6930 970l1 2M5856 1311l-26 37M6861 2654l-49 18M6276 1456l-15 41M5982 1175l-45 42M6380 2645l26 19M5829 2212l-19 -5M6110 1192l-32 34M6966 1858l-49 7M6442 2427l-18 50M6375 2726l-51 -16M6573 2188l23 47M6406 1235l-54 -9M5747 1576l-9 38M6313 1783l-54 -40M7411 1397l28 57M6004 2396l31 45M6876 2625l28 9M7213 2170l-25 46M6088 2598l-44 -33M6575 2520l-46 12M6488 2417l26 40M6133 1907l-34 54M6740 968l25 -7M5992 2516l28 27M6221 1643l-48 0M7493 1935l10 -11M7029 2620l20 2M6697 993l-28 -20M6111 1070l-6 -3M6837 1212l-36 18M6602 1956l-62 -22M5957 2488l-15 -18M6462 1246l-38 24M7096 1161l-31 -34M7428 1862l-13 46M5821 1478l-12 34M6157 2536l-28 -4M5969 1219l-47 43M6911 2246l33 29M7049 1052l33 14M7319 2367l-14 33M7024 1657l5 59M7290 1370l-3 -35M6251 2540l23 31M6067 1399l-15 45M6669 2486l-48 19M6837 1212l-40 -34M7065 1981l-29 54M7380 1356l-7 -19M6947 1066l6 -15M5799 1546l-7 37M7379 2313l-24 38M6077 1141l-16 -3M6267 2674l18 12M7207 1390l18 48M6208 2666l-49 -25M6598 1655l-54 -30M5726 1754l-3 60M6562 975l-31 -15M6608 1185l-27 45M6694 1846l11 52M6310 2573l-36 -2M5961 1180l-39 41M7197 1571l-37 31M5709 1982l-3 7M7270 1688l-6 46M6089 1449l-22 -50M6334 1297l-31 37M6816 1403l-41 -52M7488 2073l7 -24M7010 1014l37 15M6127 2271l-34 3M6036 2404l-32 -8M7433 2132l-10 32M6151 2625l-31 -14M6966 2304l-39 34M5886 1438l-34 40M6053 1908l-42 -6M7003 2621l-20 25M5763 1577l-8 33M6143 1194l-33 37M6608 1185l-20 -32M7082 2108l-31 49M6371 2596l27 25M7381 1345l-13 -19M7175 2558l12 -13M7213 2526l-26 19M5780 2192l19 47M6013 1440l-16 -45M6842 1011l-20 -22M6747 1541l-21 50M6526 1780l-56 -37M6354 2444l28 42M5963 2470l27 32M6427 980l-22 -8M6004 2352l32 52M7121 2353l-4 47M6271 2215l24 46M6440 2616l-42 5M6637 1829l-52 25M5849 1871l8 56M7039 1775l53 32M6046 2064l-18 53M6285 1291l-21 -36M5733 1580l-10 40M6223 1370l-23 40M7519 1823l-5 -23M7133 1343l48 4M7021 1043l-25 -18M6814 935l-2 3M6960 983l42 19M6629 910l41 4M6960 2684l-24 13M6921 2701l-31 13M6087 2069l16 51M7399 1441l8 -8M5946 1529l-34 -4M6045 1854l-41 -7M6732 2158l-42 27M7432 2094l11 0M7039 1775l-42 20M6454 991l-47 15M6874 1401l-5 45M6296 2703l-30 -10M5722 1703l-8 1M6213 2064l17 49M6358 2624l-57 -22M6740 968l-20 -16M6643 1675l-3 49M7096 2279l-4 58M7418 1738l21 -38M5928 2404l3 25M6002 1139l-36 35M5806 1588l-6 42M6748 1000l16 -13M6602 1956l-50 26M6179 1363l-17 -43M7500 1814l8 -11M7339 2266l-3 34M6284 2642l-26 -3M6598 913l36 -2M6590 2643l-51 9M6222 1050l-43 29M6909 2707l-50 16M6399 2031l19 57M5780 1835l-17 -8M5724 2086l-10 -44M5910 1264l-37 43M7428 1862l3 61M6501 2162l25 45M5902 2426l-34 -43M6261 2503l-36 0M6928 1212l-6 -38M7049 1052l12 -4M7014 1217l-42 -46M7429 1480l19 54M7480 2088l-10 38M7433 1457l-5 -20M6816 935l-2 0M5963 1395l-30 2M6545 2488l-51 12M6339 2153l-45 7M5922 1221l-34 40M5842 1399l-10 -1M6324 2710l18 9M6039 1743l-39 53M7478 2110l-13 38M7046 1937l-50 15M6332 1012l-44 23M6183 1451l-48 -2M6816 1403l-47 39M7196 2522l-23 30M7221 1533l33 6M5935 1574l-38 43M6583 1804l2 50M5879 2394l-11 -11M7488 2071l-12 41M6498 1999l16 50M6007 2463l34 41M7416 1792l18 17M7320 2224l-3 43M5833 1443l-12 35M6797 2739l-27 3M7063 2563l23 4M6061 1100l-48 35M7186 2276l-1 52M6074 2017l-28 47M6477 919l-5 1M7106 1123l-17 -28M5777 1721l-16 50M6729 1231l-30 36M7092 1343l9 45M6158 2562l-29 -5M6110 1231l-33 37M6797 2695l28 5M6735 2743l-51 8M7221 1533l11 55M7010 1014l9 -1M6875 1027l-44 -2M7451 1491l21 58M6414 1340l-27 37M7157 2316l-10 51M6935 2466l29 18M7014 1454l-47 -2M7294 2304l-25 37M7113 2565l20 -3M7078 1752l14 55M6904 2634l30 6M5864 1710l-27 -12M6178 2633l19 15M6718 1434l-51 -23M6013 2062l-21 50M6652 1514l-24 44M7158 2036l-22 54M7339 1716l30 -18M5754 1509l-17 40M6870 2685l-45 15M5782 1579l-8 38M7188 2216l-30 44M6946 1087l38 -2M6875 1027l12 -10M6526 1780l-55 20M7460 1880l14 5M6464 923l-50 9M6636 1774l-52 -22M7082 1066l-21 -18M7363 2347l11 -12M6785 2238l-49 27M7443 2094l9 -1M6655 2402l-48 20M7158 2459l-12 39M7103 2606l-37 23M5776 2225l-2 -4M6691 1203l-57 11M6818 2497l-12 44M6271 996l-13 -4M6960 983l10 4M5789 1432l-17 40M5785 1627l-11 -10M7453 1490l23 63M6301 1412l-25 44M5968 1632l-5 48M7359 2231l-1 32M6948 1251l-25 30M5979 2452l34 42M7421 2194l-10 25M5834 2291l26 47M7039 1775l-25 69M6544 2756l20 3M6048 1102l-7 5M6578 1535l-41 -26M7335 1361l11 -8M7187 2146l-29 48M6825 2700l24 4M7408 1845l26 -36M5731 1702l-5 52M6181 1044l-53 24M6182 1199l-1 -42M5779 1471l-7 1M7461 1943l-16 53M6366 2663l23 16M7483 1945l10 -10M6168 1799l1 53M6748 1000l-30 -22M6948 1251l-51 -8M6754 2732l26 2M6092 1358l-10 -44M6951 2611l-47 23M6508 1220l-46 26M5736 1988l-1 50M5933 1397l-25 0M7295 2217l25 7M6582 2388l-50 16M6068 2583l-24 -18M7071 2617l20 -5M6464 936l-49 10M7071 1073l31 13M6069 2365l30 50M7019 1585l5 72M6488 942l31 -14M6549 2735l-16 9M6070 2580l-26 -15M6203 1047l-22 -3M7046 1937l-34 57M6236 2636l19 15M7236 1634l37 7M7293 2444l-25 22M6485 1645l-44 -33M7380 1368l0 -12M5854 2303l25 45M5726 1754l-4 -51M7209 2461l-38 35M6013 2494l31 34M6604 2548l30 26M6384 2721l22 11M7348 1300l17 30M5963 1680l-2 54M7479 1994l-17 56M7131 2584l-40 28M5992 2112l19 55M5747 1655l-16 47M6269 2600l24 25M7179 1202l30 18M6500 2753l-22 -2M6616 972l-27 -14M6665 1173l-31 41M5833 1443l-23 34M5758 2181l-11 -38M7151 1489l-24 28M7236 1634l-3 50M7052 1441l16 51M6446 1209l-13 -33M6941 2688l-20 13M6367 1264l-33 33M5827 2019l-21 -2M6199 2016l-48 -1M6384 2721l-31 -5M7428 2211l-14 32M7451 1491l17 39M7285 2438l-36 41M7244 2188l23 18M6078 2321l22 42M6632 1394l-43 -29M7287 1401l32 5M5942 2053l-14 47M6918 1102l-42 -8M6042 1179l-41 44M6406 2664l-40 -1M6103 2551l30 29M7400 1959l-25 41M7310 2422l-34 40M7036 2559l27 4M6105 2221l22 50M7197 1155l37 30M7044 1244l-56 4M6683 2734l-54 7M7423 2164l-10 30M6780 1497l-33 44M6137 2363l-37 0M6894 959l46 20M6988 1248l26 -31M7026 2121l25 36M6658 2676l-25 22M7334 2360l-16 36M6463 2071l19 41M7234 2454l-21 39M5732 1560l-1 15M7452 2124l9 -8M6636 1774l-53 30M7029 1716l49 36M5726 2091l-9 -44M6317 1259l-16 -41M6959 1354l18 51M6765 925l47 13M6062 1184l-20 -5M6126 1854l-45 -2M6715 2468l24 27M6861 2577l-12 35M6701 1531l25 60M7388 2306l-25 41M7453 1490l13 40M7324 2406l8 -14M5965 2486l27 30M7351 1452l21 42M6424 2477l-42 9M7387 1447l12 -6M6296 2703l18 9M5741 1936l-5 52M7029 1716l-38 19M6578 1535l-65 18M7428 2040l-22 41M6701 1531l-49 -17M7461 1943l-4 59M6123 1148l13 -35M6529 2709l-44 1M7519 1819l0 -27M6576 1122l-7 -29M6636 2456l-15 49M6591 1908l-51 26M5784 1897l9 60M6488 2417l-18 51M6206 1325l-17 -42M6976 1497l-43 30M6727 2418l34 27M7058 2076l-54 10M6765 961l-45 -9M7155 1445l36 -16M5997 1395l-34 0M6769 2520l-45 20M7071 1073l11 -7M6637 2759l17 -2M7421 1488l18 52M6540 1934l12 48M6390 2562l-66 -27M7511 1963l-4 23M5898 2238l21 47M5816 1964l-23 -7M7094 1261l1 -41M6485 1645l-61 18M6380 996l-48 16M5726 1754l-13 58M6159 1076l-42 31M5886 2404l-24 -38M6331 2718l-46 -16M7056 2373l27 16M5866 1767l-27 -16M7155 1445l40 28M6852 944l-38 -9M6421 1141l-4 -33M5729 1656l-8 3M6456 2747l-39 -7M7517 1772l2 51M5738 2089l-20 -56M6514 2049l15 51M5950 1265l-18 1M5853 2033l14 54M6446 1209l-56 -9M5781 1509l-17 31M7121 1158l-15 -35M5751 1707l-3 53M7075 2188l-58 12M5716 1985l2 48M7254 1435l35 48M6098 1067l-8 4M6067 1399l-54 41M5777 2154l16 45M5888 1261l-30 41M6910 1053l-38 -7M7033 1029l14 0M6655 2402l27 38M7454 1511l18 56M5919 2327l-24 -7M6539 2652l-16 25M6102 2568l29 26M5715 2037l12 51M6784 977l20 -7M7264 1734l29 41M6815 2369l-67 -5M7135 1134l-46 -39M6761 2445l30 27M6354 988l26 -23M5829 1917l-22 -11M6225 2503l-8 36M5738 1614l-9 42M5898 2093l-31 -6M5884 1520l-8 42M6766 1395l-43 -12M7047 1029l-28 -16M6078 1226l-36 42M6572 2669l-49 8M7036 2559l-18 34M6042 1268l-30 43M6122 2170l-38 3M6042 1637l-42 51M6990 1147l25 -9M6244 1058l18 -29M7197 1155l24 10M6112 1404l-20 -46M6322 2624l-9 20M6162 1320l-40 -4M7003 2621l26 -1M5715 2037l-2 1M6240 2600l-4 21M5866 1400l-16 38M7507 1986l-8 22M7135 1134l34 17M6772 2619l-20 30M6317 1259l-53 -4M6028 2117l-36 -5M6610 1493l18 65M7111 2058l25 32M5981 1222l-12 -3M7128 2236l30 24M7388 1538l16 46M6991 998l11 4M6431 927l41 -7M6667 946l28 -7M6514 2750l30 6M5925 1483l-13 42M6610 1493l-47 -24M6204 2170l-17 54M7428 2040l-7 48M6523 2677l32 15M6671 2649l-46 13M7002 1002l-32 -15M6087 2069l-19 49M6244 2572l25 28M6258 2639l-22 -3M7388 2198l13 -1M7355 2351l-15 30M6052 1444l-18 45M5850 1438l-17 5M7448 1937l-16 46M7181 1347l-14 -53M6178 1906l-34 54M6532 2404l32 35M6997 1795l17 49M5823 1594l-23 36M6206 1325l-44 -5M6322 955l-4 3M7133 2166l25 28M6646 914l-12 -3M6453 2511l-17 43M7401 2291l-22 38M7379 2313l9 -7M6070 2580l19 16M6419 1865l8 46M7421 1488l27 46M7166 1233l-18 -37M6764 987l-46 -9M6539 936l34 -11M6147 1039l-49 28M6902 2312l-69 -5M6725 2727l-42 7M7029 1895l-33 57M6463 2638l32 20M6004 2396l-32 -15M6106 1542l-46 -1M7158 2260l28 16M7319 1806l-21 40M6267 2674l-42 -19M6251 1327l-28 43M6989 1616l35 41M6518 2723l-49 -1M7469 1997l-18 53M6534 913l-57 6M6211 2630l19 17M6129 1646l-3 47M7437 2218l-16 35M7166 1233l35 10M6421 1141l-48 -12M6996 1952l16 42M6972 1171l-50 3M6382 2486l26 35M6589 2473l-44 15M6963 2669l-22 19M7317 2303l-26 37M6489 1188l-11 -35M5820 2283l23 44M7075 2188l-35 42M7384 1356l-19 -26M6006 1138l-4 1M5758 2182l18 43M7454 1511l18 38M5723 1620l-9 44M6640 957l-51 1M6162 2462l-32 -4M6794 1313l-26 -55M7387 2163l-13 33M5709 1982l-11 -52M7103 2449l-15 42M7138 1083l-30 -21M6042 1637l-2 52M6427 1911l-50 20M6627 2053l19 47M6984 1085l44 9M6625 2662l33 14M7374 1937l-20 37M6309 2454l-12 43M7506 1956l-6 46M6978 2244l27 26M5758 2182l-3 -6M7483 2095l-11 35M6433 2335l-20 52M5780 2192l-27 -53M6032 1136l-12 0M6831 2645l-19 27M7028 1272l-37 18M5872 2310l25 45M6958 2644l-20 25M7318 1441l1 -35M6931 972l47 21M7004 2086l22 35M7049 2639l21 -9M5760 2097l1 40M5749 2097l4 42M6838 1165l-30 -31M7431 1467l2 -10M6352 1226l-13 -37M6479 2323l28 40M7091 2612l-21 18M6076 2560l-3 11M6089 1449l-14 45M5800 1630l-3 49M6887 1017l-31 -16M7298 2430l12 -8M6728 1482l19 59M6508 951l-53 8M5878 2184l20 54M5773 1510l-6 -3M6289 2003l-34 57M6646 2100l-65 -25M5884 1400l-18 39M7318 1441l24 40M6667 946l-22 -11M6632 1118l-44 35M7008 2551l-16 37M7152 1094l47 40M6584 1752l-1 52M6418 2088l16 43M7106 2607l-36 23M6178 1906l10 55M6895 2591l-46 21M7335 1765l26 30M5701 1718l3 -37M6403 941l36 -13M6134 2628l16 9M6047 2170l-16 46M7049 2524l32 3M6909 1816l8 49M6318 958l-9 6M7448 1937l-3 59M7408 1492l-9 -51M6958 986l-31 -14M6074 1099l-13 1M6266 1688l-7 55M6632 1118l-12 -32M7117 1084l24 8M7447 1474l-8 -20M7472 2130l-14 38M6333 1991l-44 12M5733 1580l-6 7M7433 2161l-20 33M5969 1266l-32 43M7036 2035l-51 11M6804 970l-39 -9M5709 1661l-8 43M6274 1370l-51 0M6378 2691l-34 -5M7213 2290l31 6M5960 2005l15 52M6684 1473l-32 41M6453 2511l26 34M7408 1492l18 49M6917 2665l-22 23M6539 936l-20 -8M7070 2630l13 -7M7187 2545l-37 31M6531 1881l9 53M6776 2715l27 4M6416 2590l-45 6M5791 2155l-14 -1M6643 2213l21 41M5756 1655l-9 0M7081 2527l-45 32M7394 1890l21 18M6221 1643l-37 -52M6031 1396l-18 44M7423 2132l-22 33M7167 1294l37 38M5823 1514l-14 -2M6862 1872l-50 -4M7102 1086l-20 -20M6168 1041l-10 -2M7469 1997l-7 53M6865 2170l-41 38M5845 1353l-27 40M5928 2100l16 53M6232 2317l-41 4M6902 2448l-38 26M7462 1512l21 62M6489 1188l-56 -12M6828 1360l-12 43M7074 1879l14 41M7051 2157l-60 10M6266 976l-49 24M6872 2707l-43 13M5762 1475l-1 8M6135 1449l-21 46M6427 2718l28 13M6563 1580l-19 45M7384 1821l32 -29M6301 2361l25 44M6255 2651l-7 9M5930 1217l-31 40M6059 1959l-24 53M6822 989l21 -6M7021 2514l-13 37M7233 1684l31 50M7409 1419l24 38M5771 1576l-16 34M7145 1161l-39 -38M7414 2164l9 0M6514 2457l-20 43M6318 2309l-44 7M6828 1360l-53 -9M7374 1937l1 63M5692 1802l0 48M7363 1528l9 -34M5919 2441l10 17M6845 2007l-54 0M7075 1048l-28 -19M6099 1961l14 52M6339 2258l25 44M5865 1306l-26 45M6021 1226l-20 -3M6145 2222l-18 49M6931 972l9 7M6645 1144l-57 9M6725 2634l27 15M6650 2532l-46 16M6128 1068l30 -29M7421 2253l-24 43M6275 2692l21 11M6965 1042l14 -4M6352 1226l-51 -8M6639 1453l13 61M5804 1391l-22 46M6686 2690l-53 8M7363 1528l13 42M6499 1598l-46 -31M6474 1697l-4 46M6629 910l-10 2M6815 2369l30 30M6152 1277l-30 39M5928 1355l9 -46M6720 952l24 -5M5886 1934l-29 -7M7035 2293l-41 39M6259 1743l3 48M6844 2728l-30 6M7436 2205l-13 31M7462 2088l-1 28M7179 1177l-10 -26M6726 1171l-35 32M5789 1509l-8 0M7032 1017l-30 -15M6779 2743l-28 5M6292 2678l19 13M6994 2332l-39 31M7027 2352l-42 34M7499 2027l0 -19M7129 1269l-34 -49M6314 2205l25 53M5867 2087l-10 44M6326 955l-4 0M5695 1753l-3 49M6037 2476l-30 -13M5986 1951l-35 -1M6991 1735l6 60M6905 990l21 2M7516 1917l2 -27M7345 1408l-10 -47M6234 1286l-45 -3M5992 2516l-44 -41M7212 2339l-5 41M5739 1579l-9 37M5829 1345l0 1M7036 2035l-32 51M7293 1775l42 -10M5949 2295l-3 44M6423 1713l-56 -38M5884 2141l-27 -10M5898 2238l-4 40M6730 2751l-46 6M6090 1071l-42 31M7408 1492l31 48M7129 1269l5 -34M5817 1640l-17 -10M6591 933l32 -9M6138 1594l-32 -52M6684 914l-50 -3M6553 2562l-16 36M7207 1177l36 29M7515 1886l-3 52M7180 1133l-23 -24M6099 2524l4 27M6531 960l-23 -9M6387 940l44 -13M7414 2243l-17 35M6151 2322l-36 0M7510 1904l2 34M7293 1775l-21 36M5932 2201l22 50M6996 1545l23 40M7247 2419l-38 42M6043 1139l-38 38M6954 1807l-45 9M6976 1909l20 43M5695 1739l-4 52M5716 1629l-4 9M7406 2280l4 -14M6151 2625l-49 -29M5845 1353l-22 45M7051 2157l-34 43M6364 1828l-51 -45M7399 1377l-15 -21M7095 1220l-51 -46M7388 2227l-3 29M5793 1435l-4 -3M5756 1542l-17 37M6103 2120l-19 53M6619 912l-51 1M5985 2259l-31 -8M7152 1651l-21 36M6905 2553l-44 24M7451 1520l21 47M6301 2361l-17 50M6472 920l-49 9M5792 2258l-16 -38M6209 2667l-45 -25M6880 1298l-22 -39M7131 2532l-45 35M6822 989l-18 -19M6368 959l35 -18M7201 1140l45 40M7017 2200l23 30M5841 1810l-19 47M5931 2429l-17 -8M6066 2223l-13 42M6415 946l-12 -5M7353 1909l-22 41M6845 2007l-45 45M7404 2249l-7 29M6960 1572l-11 62M7275 1425l12 -24M6942 1962l-52 5M7336 2300l18 -6M6370 1878l7 53M6364 2302l-46 7M6550 2139l-49 23M6449 931l-46 10M5951 2414l28 38M6214 1746l-46 53M6738 2676l29 11M6408 1531l-38 -35M7028 1272l16 -28M5745 1523l1 6M7272 2257l25 5M6707 2581l35 19M6982 1109l2 -24M5713 1812l-8 -2M6918 1037l-31 -20M7432 2094l-21 35M5996 2213l-31 -5M6100 2363l-31 2M6713 2230l23 35M5889 1312l-34 41M5860 2338l5 27M6162 2171l-40 -1M6720 952l-25 -13M6305 972l-47 20M7181 1116l44 39M6587 1702l-3 50M7397 2296l-23 39M6537 915l44 -4M5894 2406l25 35M7127 1517l-31 20M7358 2263l-22 37M6100 1104l-15 -2M7452 2183l6 -15M6897 1009l-41 -8M5809 1512l-21 33M7225 2510l13 -8M6209 1500l-47 -4M6043 2556l27 24M6905 1651l-48 6M7340 2381l-30 41M5699 1816l-3 -49M7394 1497l-7 -50M7040 2230l-35 40M6944 2093l-61 3M6452 2282l-19 53M7388 2282l-19 36M6092 1358l-37 -3M6634 911l-53 0M6220 1125l-39 32M6897 1009l16 -4M6423 1713l-59 9M7432 1983l13 13M7283 1243l35 39M6591 933l-18 -8M7379 2313l-16 34M7224 2514l8 -14M7388 2198l0 29M7458 2161l7 -13M6334 1152l0 -36M7259 2480l-27 20M6916 1330l13 61M5767 1507l-17 35M6955 2363l-11 57M6251 2540l-7 32M6098 1067l-41 31M6129 2557l-26 -6M7293 1775l5 71M6858 1818l-52 -3M7119 1107l-17 -21M6324 2710l-49 -18M6573 925l-54 3M5796 2267l-22 -46M6954 1807l-37 58M7112 1437l39 52M7468 1530l18 60M5778 2057l14 56M6001 1223l-51 42M6233 1957l10 50M6678 2557l-44 17M6541 1166l-63 -13M6916 1330l-30 34M6825 967l23 -1M7451 2050l11 0M5913 1437l-5 -40M7361 1795l32 -22M6474 1847l-60 -35M7344 2328l-25 39M7070 2259l-9 60M5710 1645l-8 44M7201 1140l31 23M6478 1153l-45 23M6217 1203l1 -39M6392 2714l27 13M6136 1042l-3 1M6041 2504l3 24M6922 1477l-48 16M6011 1902l-36 -4M6129 1646l-49 45M7353 1909l1 65M5763 1577l-17 36M7369 2318l-14 33M6633 2698l30 13M7436 2205l9 -11M6991 1290l-3 -42M6371 2596l-13 28M6353 2676l-28 -3M6323 975l-52 21M6270 1897l9 50M6564 2759l24 0M7440 1595l11 55M6942 1962l-38 47M7221 1726l43 8M7466 1530l21 64M5807 1906l-23 -9M6992 1071l11 -9M5878 2184l-4 49M5724 1870l4 59M7431 2186l-12 30M7354 1974l21 26M6398 2621l-40 3M7413 2194l8 0M7105 2531l-42 32M5696 1932l1 12M6144 1236l-1 -42M5908 1889l-29 -12M7225 1438l5 48M6173 1643l-35 -49M6513 1553l-46 -32M6166 2271l-39 0M6978 993l-38 -14M5966 1174l-42 43M6831 2645l30 9M6564 2759l-44 -3M6184 1591l-46 3M7221 1726l-19 36M7181 1116l18 18M7305 2400l13 -4M7328 2335l-29 40M6339 1189l-38 29M6179 2372l-42 -9M6797 1178l-35 24M7117 1072l44 30M7061 2484l-40 30M5921 2367l7 37M6386 1984l-53 7M5768 1662l-17 45M7342 1481l30 13M7481 1633l8 61M5750 1991l-14 -3M7070 1407l-54 -7M6944 2093l-36 44M5879 1877l7 57M7212 1199l-43 -48M6351 2042l-48 13M6488 2608l-48 8M6464 936l37 -13M7391 2068l15 13M7049 2524l-13 35M6473 2746l-17 1M7147 2367l-30 33M6728 1335l-48 -25M5866 1767l-25 43M6897 1009l-9 -17M6341 2355l-40 6M6424 1663l-45 -38M6206 2274l-40 -3M7015 1138l34 2M6911 2246l-60 -2M6494 2500l-15 45M7397 2278l11 -11M6620 1086l-51 7M5724 1983l-15 -57M6949 1752l48 43M5692 1881l0 12M6222 1246l-33 37M7511 1853l-1 51M6589 2473l32 32M7291 2340l-10 38M7212 1199l35 25M6985 2046l19 40M6950 2692l17 -10M5839 1351l-27 39M7200 1625l-48 26M6858 1818l-46 50M6244 2572l-27 1M7426 1541l13 -1M6824 2208l27 36M5723 1814l-10 -2M6337 980l-49 20M6585 2588l-48 10M6949 1752l-42 8M7468 1530l15 44M6310 2573l26 26M6827 2731l-30 8M6560 945l-52 6M6527 914l-9 3M6552 1401l-38 -27M7213 2290l-1 49M6295 2261l-21 55M6825 967l-15 -13M5881 2041l-14 46M7124 1075l-28 -18M6364 1776l-55 -46M6658 2757l26 0M5870 1612l-25 -11M6621 2505l-46 15M5769 2185l19 49M7395 2015l-22 39M7471 2105l-1 21M6467 1089l-50 19M6474 1847l-55 18M5903 1567l-6 50M7310 2422l8 -8M6797 2695l-21 20M7221 1165l44 39M6217 1203l-35 -4M6991 2167l26 33M5692 1782l-1 9M7022 1188l-32 -41M6264 1255l-4 -45M6852 2720l15 0M7469 1576l3 -9M7065 1127l56 31M5769 2185l-6 2M7471 2043l-9 45M6112 1404l-45 -5M6843 983l-39 -13M6230 2113l-26 57M6433 952l-53 13M6440 2616l23 22M7188 2216l-2 60M6067 2485l6 32M6761 2445l-22 50M6775 1351l-52 32M7197 1571l35 17M7035 2293l-8 59M5792 2258l3 0M6513 1553l-60 14M6786 2661l-19 26M5834 2291l9 36M6918 1594l31 40M6299 2670l16 12M7372 1867l22 23M7421 2088l-23 36M5857 1927l-28 -10M6133 2580l-2 14M7213 1279l36 22M7153 2532l24 -6M5831 1347l-26 42M6351 2042l-28 65M5912 1525l-9 42M7205 1137l46 43M5789 1432l-21 39M7472 2130l4 -18M5872 2271l-22 -5M6517 2631l-54 7M6168 1695l-4 51M6604 2686l-21 19M5866 1659l-29 39M6517 1105l-5 -31M7376 1570l28 14M7244 2296l26 6M7117 1072l21 11M6927 1028l-40 -11M6296 2703l-47 -19M7270 2302l24 2M6399 2733l-51 -13M5782 2003l14 58M7450 2151l-2 24M6918 1594l-43 3M7481 1633l15 52M5972 1441l-30 -5M5739 1579l-16 41M7280 2095l-46 31M6744 947l-49 -8M5772 1472l-4 -1M5900 1830l-30 -14M6079 1799l-34 55M6158 2617l-27 -9M5855 2358l24 36M7448 1534l13 50M6389 2142l16 52M6592 1427l-29 42M6222 1050l22 -26M7018 2593l-15 28M7200 1625l33 59M6424 1663l-57 12M5839 1751l-24 -12M7415 1975l17 8M6185 2609l26 21M7285 1260l34 39M6869 2056l14 40M6889 2494l-39 24M5921 2367l30 47M6017 2263l-10 43M6829 2720l-49 14M7368 2287l10 0M6333 956l44 -16M6780 2734l-45 9M6373 1129l1 -33M5777 1721l-13 -4M7077 1043l19 14M6090 1071l-49 36M5809 2277l-29 -50M5712 1638l-2 7M6126 1693l-42 52M7348 2375l4 -6M6854 1763l-50 -5M6667 1411l17 62M6726 935l33 -1M5785 1474l-6 -3M6623 924l-50 1M6878 2536l-17 41M6928 1212l-31 31M5735 1816l1 60M6140 1073l-12 -5M5764 1540l-8 2M6187 2224l-42 -2M6395 2438l-41 6M7044 2426l-10 45M6552 1401l-68 8M5855 1353l-32 45M7272 1811l26 35M6364 1776l-51 7M6064 2578l-38 -33M5928 1214l-40 47M6667 1411l-35 -17M7395 2015l-4 53M6825 2092l-67 -6M7387 2163l1 35M7221 1165l25 15M6447 2018l-48 13M7020 1111l-36 -26M6523 1135l-45 18M6251 1171l0 -35M5963 1680l-37 42M6507 2363l-19 54M7441 2132l-8 29M6648 2728l-52 4M6216 1692l-2 54M6977 1405l-56 24M7186 2462l-15 34M6878 978l-30 -12M6264 1255l-42 -9M6870 2685l25 3M6609 917l37 -3M6028 2117l19 53M7401 2197l-13 30M6148 2124l-26 46M6928 1913l-38 54M7014 1454l54 38M6044 2528l4 19M7192 1670l41 14M7388 2306l-14 29M5852 1478l-17 0M7020 1111l8 -17M5854 1400l-12 -1M7276 1887l-27 33M6332 2704l21 12M7331 1950l23 24M7443 2094l-20 38M6005 1177l-36 42M5714 1664l2 -35M5886 1438l-14 41M6189 2504l-3 35M7373 2258l-19 36M6537 1509l-45 -27M7421 2088l-10 41M7012 1009l-34 -16M7488 2073l-5 22M6258 992l-48 24M6342 2719l19 7M5839 2341l-23 -41M6765 925l0 4M7014 1454l10 51M7205 1137l20 18M7450 2151l10 -11M6583 2705l-19 18M6263 2623l21 19M6495 2658l-46 4M6217 2539l-31 0M6874 1493l-55 -45M6459 2696l-16 12M6517 1105l-50 -16M6332 2704l-27 -5M6872 967l23 3M6084 1745l-5 54M6403 941l-16 -1M6162 1496l-12 50M6217 2662l-30 -10M6812 938l-47 -9M6964 2484l-45 28M7305 1462l37 19M7474 1640l7 63M6614 2611l-47 11M6281 2656l-10 9M7174 1709l28 53M7448 1534l21 42M5829 2254l25 49M7209 1220l-30 -43M7325 2008l-32 33M6270 2457l-37 1M7414 2262l-17 34M7005 2456l29 15M5908 1397l-22 41M5784 1897l-10 49M6985 2386l-41 34M7122 2598l-30 19M6469 2722l-42 -4M6791 1102l-6 -30M7285 1260l33 22M6676 1082l-56 4M6949 1699l42 36M6070 2580l-50 -37M6408 2521l28 33M6001 1223l23 -47M7209 1220l36 24M6373 1129l-39 -13M6966 2578l-15 33M6791 936l30 3M5782 1437l-21 46M6961 2006l24 40M5793 1957l-19 -11M6770 2742l-50 7M7423 2132l-9 32M7283 1540l-16 53M5862 2374l24 30M5942 2470l-30 -38M6012 1311l-26 41M5975 1898l11 53M6854 1763l-48 52M7411 2129l-10 36M6726 935l-17 -10M6529 2532l-50 13M7409 1541l17 0M6905 2553l35 14M7503 1924l7 -20M7176 1797l-29 33M5695 1739l6 -35M7472 1549l14 41M7364 2102l-34 29M6175 2651l-25 -14M6193 1545l-9 46M7133 2562l-40 31M7502 1657l-1 24M5827 2019l16 62M5932 1266l-10 -4M7258 2383l23 -5M6760 2200l25 38M5810 1477l-12 34M6616 1060l8 -27M5734 1554l-2 6M5853 2033l-10 48M7486 1590l-3 -16M5751 1707l-15 49M6804 2734l-49 11M6325 2673l-26 -3M6077 1268l-30 45M5758 2182l-18 -47M6251 1171l-33 -7M6966 2134l25 33M7151 1489l44 -16M7514 1940l-7 46M6013 1135l-7 3M7160 1131l20 2M6086 1074l-2 4M6609 917l-11 -4M6454 2179l-24 56M5753 2139l-9 -7M7080 1181l39 15M5903 1261l-4 -4M5719 1929l-13 -60M6200 1086l22 -36M7216 1952l-36 26M6869 995l-26 -12M7476 1553l11 41M6716 2117l-49 27M7235 2482l-23 34M6263 2623l-5 16M6664 2597l-20 34M5942 1436l-42 42M7276 1887l0 66M6244 1058l-22 -8M6655 2402l-19 54M7267 2206l28 11M7113 1619l-59 9M6537 1509l-70 12M6933 1527l27 45M6469 1058l8 -27M6581 2075l17 48M5872 1479l-20 -1M6097 2494l-30 -9M6262 1029l-40 21M6386 1984l-35 58M5969 1839l-26 53M7003 1062l-24 -24M5979 2452l6 28M7445 1996l-6 51M7133 1343l7 54M6629 2741l-51 3M6931 2174l-66 -4M6670 914l-51 -2M7263 1489l20 51M6467 1521l-14 46M6266 1688l-45 -45M5965 2208l-33 -7M7146 2498l-41 33M7474 1640l15 54M6788 956l-44 -9M5829 1555l-17 -5M6858 1259l-21 -47M6110 1272l0 -41M6818 2497l32 21M7325 2008l-8 60M7390 1621l14 -37M6173 1022l-42 23M6479 1901l8 49M5726 2091l15 47M6778 1048l7 -21M6441 1612l-62 13M5997 1484l-16 48M6284 2642l22 18M7318 2414l-25 30M6909 2707l13 -8M5925 1483l-41 37M6314 2205l-19 56M5973 2502l-16 -14M6820 1914l-60 -3M6663 2711l-48 6M6138 1594l-45 -1M7510 1904l5 -18M6442 2427l28 41M7503 1868l7 36M5854 2303l6 35M7390 1621l4 49M6791 936l-11 -7M7152 2559l-37 28M6379 1625l-12 50M5810 2207l4 41M6093 1593l-44 -6M6083 1643l-41 -6M6723 1383l-5 51M6589 2473l-14 47M6776 945l25 -1M5694 1878l4 52M6463 2638l-14 24M7247 1224l-4 -18M7292 1225l37 45M7150 2576l-28 22M7131 2457l27 2M7364 2102l-12 43M5800 1847l-20 -12M5805 1389l-24 43M6169 1852l-36 55M7019 2659l21 -10M6136 1042l-38 25M5978 2422l-27 -8M6011 1902l12 56M7520 1840l-1 -17M6185 2609l-25 -5M7246 1771l26 40M5780 2227l21 45M7509 1721l0 -23M5793 2199l-13 -7M6187 1122l13 -36M6117 1107l-40 34M6616 1060l-44 -22M6923 1281l-43 17M6800 2052l-59 -13M6187 2569l27 29M7090 1052l-29 -18M6158 2562l28 30M5799 1546l-17 33M6475 2679l-42 2M5710 1645l9 -30M6454 2179l23 46M7429 2227l-19 39M6368 959l-18 -3M5892 1712l3 60M7234 1185l31 19M6268 1848l-49 1M5832 1398l-9 0M7254 1850l44 -4M6309 1730l4 53M5894 2278l1 42M5892 1259l-4 2M6954 1020l20 1M7113 1619l18 68M7373 2054l18 14M6563 1469l15 66M6664 920l31 -2M6219 1849l-50 3M6157 2585l28 24M6130 2065l-43 4M6923 1281l-65 -22M6711 2752l19 -1M7216 1952l-16 60M7265 1204l-19 -24M7092 1343l-45 22M6455 2731l-9 6M6020 1136l-7 -1M7254 1850l-30 34M6564 2439l-19 49M6260 1210l-38 36M5721 1598l-1 5M6163 1114l-40 34M5850 2266l-21 -12M6482 2112l19 50M6747 1751l-48 -6M6469 1058l-43 -14M6310 1006l27 -26M5819 2070l-6 48M6851 2244l-66 -6M7499 1672l7 63M6281 971l-7 2M6390 1455l-20 41M6931 2174l-43 38M6377 940l-51 15M5937 1217l-7 0M6473 2746l-42 -5M6921 1429l-47 -28M6788 2583l-46 17M6900 980l24 2M7398 2124l13 5M5975 2057l-19 49M5704 1991l-1 0M6633 2698l-50 7M6850 1126l-42 8M6364 1722l-51 -40M7251 1180l-26 -25M7093 2593l-22 24M7201 1243l-22 -41M6159 2641l-25 -13M7300 1984l-32 31M6185 2119l-37 5M6621 2171l-48 17M6136 1359l-24 45M5817 1640l0 50M5724 1870l-9 -2M5772 1539l-17 37M6778 1048l-42 -30M7272 2257l-2 45M5894 1667l-30 43M6875 1597l-18 60M6129 2532l-30 -8M7331 1507l11 -26M6072 2539l4 21M6082 1314l-27 41M6850 1126l-15 -32M6820 1914l-45 43M6733 1088l-57 -6M6596 2235l-48 16M7461 1584l8 -8M7508 1684l8 63M6014 2513l8 22M6303 2055l-48 5M7043 1088l23 2M5935 1834l-35 -4M7014 2409l-38 29M5838 1515l-15 -1M5957 2488l-39 -43M6829 946l31 5M7195 2494l-42 38M7230 1486l-9 47M6636 2456l33 30M7319 1299l-1 -17M6776 945l-17 -11M6099 2415l-31 -5M7249 2479l-24 31M7154 1743l-26 35M6374 1096l-40 20M6643 2315l28 35M5808 2162l21 50M6096 2454l-32 -6M7232 1163l38 37M7401 2165l-13 33M6804 1758l2 57M6872 2275l-39 32M7424 1592l2 -51M7070 2259l26 20M7051 2641l-40 21M6001 1223l-32 43M7011 2662l-44 20M6670 1057l7 -24M6800 2052l-42 34M6162 2462l27 42M5912 2048l-31 -7M7487 1608l-1 -18M6833 2307l-44 32M6996 1025l31 9M6858 2340l-43 29M6360 2709l-7 7M7421 2253l-20 38M6978 2244l-67 2M6664 920l-18 -6M6263 981l-46 19M5748 1760l-13 56M5926 1722l1 59M6856 1709l51 51M7194 1916l-41 22M6336 1083l6 -30M6313 2644l20 17M6251 1136l-33 28M7337 2184l-17 40M7141 2416l-10 41M6224 1899l9 58M7254 1850l-5 70M7191 1429l34 9M7199 1134l44 43M6683 2734l24 6M5747 1820l-12 -4M5792 2258l24 42M7113 2565l-20 28M6720 2749l-45 3M6173 1643l-44 3M7433 1644l18 6M7343 2359l12 -8M7494 1617l-7 -23M6692 2619l-48 12M6856 1709l-51 2M7028 1094l-25 -32M6794 1313l-19 38M6136 1113l-19 -6M7476 2112l-13 38M7472 2076l-1 29M7191 1429l39 57M5719 1615l-10 46M6900 980l-5 -10M6826 1066l-41 6M6492 1482l-25 39M6270 1640l-38 -46M5722 1703l-1 -44M7077 1587l-23 41M5873 1307l-28 46M6888 992l17 -2M6364 1722l-55 8M6309 964l-46 17M6220 1125l8 -32M6889 2494l30 18M6347 2568l-37 5M6328 1940l5 51M6424 2644l-18 20M6305 2699l-46 -18M7300 1984l-7 57M7361 1602l15 -32M6123 1799l-42 53M6246 991l-55 23M6931 1143l22 -24M6826 1066l2 -24M7044 1174l-29 -36M7456 1707l2 55M5691 1830l-1 11M7481 1703l8 -9M5829 1346l1 2M6819 2599l-16 33M6134 2628l-46 -30M6911 2246l-39 29M6758 2561l-51 20M5744 2132l-3 2M5986 1352l-23 43M6812 1868l-61 -8M5914 1942l-28 -8M6556 918l-55 5M6589 1365l3 62M6745 1290l-65 20M7160 1602l40 23M6829 946l-8 -7M7483 1574l15 61M6393 1578l-14 47M6004 1847l-35 -8M7213 2170l2 61M7044 1174l5 -34M6637 2755l21 2M7243 2250l1 46M6211 2630l-5 11M6983 2646l-20 23M5728 1929l-9 0M7245 1244l2 -20M6743 1115l-40 26M7342 2087l-12 44M5975 1898l-24 52M6575 911l-48 3M6755 2745l-44 7M7160 1602l-8 49M7232 1163l19 17M6979 1038l-42 -17M7493 1759l-1 60M6131 1045l-47 33M6135 1449l-23 -45M7241 2343l-34 37M5821 1478l-23 33M6670 1057l-46 -24M7171 2496l-40 36M6902 1707l5 53M6791 2007l-66 -11M6007 1587l-39 45M6044 2528l-30 -15M5951 1950l-37 -8M5703 1991l11 51M5780 1435l-19 48M5942 1436l-9 -39M6228 1093l-28 -7M6643 1287l-33 -26M6996 1025l5 -7M6552 1340l-38 34M6904 2009l-35 47M7226 1813l46 -2M7479 1994l-8 49M6044 2565l20 13M5919 2327l27 50M7516 1747l3 45M6975 2617l-17 27M5992 2112l-16 45M6274 973l-50 21M6043 1139l-50 36M5919 2441l-17 -15M5754 1509l-4 3M6020 1532l-13 55M6979 1038l16 0M6359 1022l21 -26M7350 2037l23 17M7167 1294l8 -28M7483 2095l-7 17M7471 2043l1 33M6158 1039l-47 31M7194 1916l-14 62M6690 2185l-47 28M7274 1221l-9 -17M7491 2018l-10 46M5716 1756l-7 -1M6377 1931l9 53M5956 1218l-46 46M6686 2690l27 11M6297 1180l-37 30M7481 2064l-10 41M6514 1045l-37 -14M6738 2676l-25 25M7400 2223l-15 33M6413 2387l-46 11M6478 1341l-29 -38M6274 2316l-42 1M6126 1854l-35 52M5937 2452l28 34M6908 2137l-43 33M6433 2335l30 41M6035 2359l1 45M6156 2499l1 37M6926 992l22 3M6270 1640l-49 3M5830 2172l20 52M6711 2752l-53 5M5839 1751l-20 44M7383 2110l15 14M6976 2438l-12 46M7121 2353l26 14M6123 1799l3 55M6888 992l-10 -14M6922 1174l-42 -8M6246 991l-47 24M5761 1483l-16 40M6068 2410l-32 -6M6678 913l-8 1M6258 2639l23 17M5912 1525l-36 37M7453 1818l-8 59M7489 1982l9 -9M6566 1066l-54 8M6222 1050l-19 -3M5895 1772l5 58M7040 2230l-5 63M6219 2673l-26 -12M7212 2516l-39 36M6892 1541l-17 56M6734 920l39 6M6436 2554l-46 8M6723 919l-53 -5M6607 2422l-43 17M7431 2228l-17 34M6075 1494l-55 38M6888 2661l-18 24M6159 1076l-19 -3M5702 1689l-7 50M6812 1868l-52 43M7131 1687l43 22M6355 1413l-25 -40M7454 1594l7 -10M5851 1559l-22 -4M6248 2660l19 14M7483 1574l11 43M6406 2291l27 44M7372 2153l-35 31M6983 2668l-23 16M7287 1335l30 31M6533 2744l-45 -2M6810 954l-9 -10M6728 1061l-52 21M6068 2583l-45 -34M7339 2266l19 -3M7318 2414l6 -8M7096 1537l-48 11M7131 1687l-23 37M6002 1139l-39 38M6420 1075l-46 21M6175 2651l18 10M5806 1588l-21 39M6518 2723l31 12M7498 1973l-7 45M6248 2660l-23 -5M5788 2234l-8 -7M7465 2148l-7 20M6013 1135l-38 39M7493 1759l7 55M7379 2329l-27 40M6805 1711l-1 47M6086 1074l-45 33M6957 2208l21 36M5942 2470l25 22M6285 2702l-32 -15M5788 1545l-17 31M6581 1230l-22 -30M7308 1525l39 31M6120 2611l-31 -15M6791 2007l-50 32M5927 1675l-33 -8M6436 1966l11 52M6502 2734l31 10M5792 2113l-17 -7M7227 2044l-44 23M7419 2216l9 -5M6647 991l-48 -1M5777 2154l3 38M7481 2064l-1 24M7352 1341l29 45M6675 1362l-43 32M7049 2622l-40 23M6741 2039l17 47M5892 1712l-26 55M5720 1603l-1 12M7423 2164l10 -3M6857 1657l45 50M5975 1174l-9 2M6381 1061l11 -30M7294 2304l-3 36M6370 1878l-56 -43M6295 1106l-44 30M6369 2092l-46 15M6449 931l40 -11M5781 1432l-19 43M7063 2563l-17 31M7226 1813l-2 71M5943 1892l-35 -3M7512 1785l3 51M6131 2594l-29 -10M6748 2364l-21 54M6151 2625l20 15M6324 2535l-63 -32M6084 2173l-37 -3M5957 1310l12 -44M6634 2574l-49 14M7415 1639l18 5M6354 988l-17 -8M5761 1483l-15 46M6857 1657l-43 2M6478 1341l-64 -1M7266 2144l-53 26M7436 2205l-5 23M6344 2686l23 14M6439 2743l-40 -10M5895 2320l26 47M6926 992l-2 -10M6005 1177l-49 41M6529 2100l-28 62M5946 2339l-27 -12M6686 1011l11 -18M6621 2171l-25 64M6057 1098l-51 40M6406 2732l-53 -16M7307 1637l33 36M6367 1675l-54 7M6612 2759l-24 0M5705 1810l-6 6M6260 1099l10 -36M6869 1446l-50 2M7461 2116l-11 35M6924 982l-29 -12M6634 911l44 2M7299 2375l20 -8M5947 1215l-10 2M5786 1429l-21 42M7439 1700l1 51M5855 2358l-34 -48M7470 1706l11 -3M6313 1682l-4 48M7119 1196l47 37M6355 1413l-54 -1M5927 1781l8 53M6191 1014l-55 28M5768 1471l-3 0M6181 1044l-41 29M5785 1474l-12 36M7127 1517l34 30M7480 2088l8 -15M6458 1447l-41 -40M6122 1316l-40 -2M5791 2155l19 52M6540 995l22 -20M7519 1870l-3 47M5694 1878l-3 -48M7502 1657l-6 -18M6262 1791l6 57M7355 2351l8 -4M7271 2444l14 -6M6367 2700l25 14M7235 1266l10 -22M5818 1393l-6 -3M6780 2132l-64 -15M6164 1746l-41 5M6860 951l-39 -12M6110 1272l-28 42M5915 1314l-11 -3M7254 1539l13 54M6588 2757l-24 2M7518 1890l-4 50M7246 1180l24 20M6315 2682l23 15M7281 2378l18 -3M7483 1761l-2 63M6310 2573l-9 29M7004 1356l-45 -2M6353 2716l22 10M7128 1778l19 52M7281 1276l-34 -52M6250 2162l21 53M6022 2535l-2 8M5800 1476l-11 33M6403 2705l-36 -5M6020 1136l-38 39M6699 1267l-32 -24M5727 1587l7 -33M6637 2755l-49 2M6597 1313l-45 27M7270 1200l-19 -20M6336 2599l-35 3M6210 1016l-52 23M6052 1223l-36 43M7357 2190l-37 34M7294 2304l23 -1M7352 1341l28 27M6407 1006l20 -26M6311 2691l-26 -5M6353 2716l-29 -6M6382 2486l-15 43M6322 2624l-29 1M6200 1086l-21 -7M6698 2514l26 26M7281 1276l33 36M6381 1061l-39 -8M6191 2321l-40 1M6333 2661l-8 12M6684 2751l27 1M6011 2167l-35 -10M7369 1698l0 48M6115 2322l-37 -1M7225 1155l18 22M7508 1803l-5 65M6966 2304l-11 59M6418 2088l-49 4M7088 2491l-39 33M6863 957l31 6M7153 1938l27 40M6060 1541l-53 46M6523 1310l-32 -34M7266 2144l-22 44M7343 2359l-15 32M5866 1400l8 -41M5704 1681l-2 8M6718 978l22 -10M6342 2719l-46 -16M6724 2540l-46 17M7317 2068l-37 27M6803 2719l26 1M6181 1157l6 -35M5814 2248l-15 -9M6040 1689l-40 -1M6260 1099l-32 -6M6105 2221l-12 53M6845 2134l20 36M5800 1630l-19 38M7336 2300l-8 35M5776 2225l20 42M5935 1834l8 58M5706 1869l-7 -53M7434 1809l-6 53M6232 1594l-11 49M6449 2662l-43 2M7439 1700l19 62M6037 2476l36 41M7253 1334l-4 -33M6780 929l36 6M6897 1243l-60 -31M7005 2270l30 23M6806 1815l-55 45M6387 1377l-27 -41M6851 2244l21 31M6261 2503l-10 37M5706 1989l-10 -57M7169 1873l-35 24M5727 2088l-14 -50M6828 1042l-43 -15M6458 1447l-68 8M6842 1552l33 45M6537 2598l-49 10M7352 2145l-38 32M6106 1542l-13 51M6035 2012l-36 -5M7253 1334l37 36M6540 995l-32 -14M6034 1489l-37 -5M6751 1860l9 51M7133 2562l19 -3M5709 1755l-3 -40M6548 2251l-46 18M7273 1641l-3 47M5767 1891l-10 48M6188 1961l-44 -1M6588 2759l19 -2M6572 1038l6 -27M6780 2132l-48 26M5877 1313l-4 -6M6120 2611l21 17M7354 2294l-26 41M7483 1761l9 58M7346 1353l-27 -54M6839 956l-38 -12M5954 2251l-30 -8M5716 1629l-8 43M6187 1122l-24 -8M6634 1214l-26 -29M7368 2287l-10 35M6210 1016l-42 25M7347 1293l-18 -23M6007 1587l-3 47M6236 2621l22 18M7131 2457l-14 39M7200 2012l-42 24M7125 2298l-33 39M6353 1539l-56 5"/>
<path id="smesh" transform="scale(0.1)" d="M6632 1846l58 64M6303 1855l-59 -36M7246 2135l-24 75M6694 1851l-62 -5M6550 1422l-8 64M5837 1625l-20 -50M6635 1644l-29 63M6438 2151l-69 -23M6609 1445l-59 -23M6982 1921l63 38M6577 1634l-30 59M6298 2496l-55 12M6280 2691l-63 -26M7457 2159l-24 64M6928 1947l69 42M6871 1442l-12 50M7174 2004l24 48M5801 1483l-21 56M6317 2536l-74 -28M7433 2223l-29 62M5758 1552l1 -42M6317 2206l-58 24M6572 1835l-9 63M6982 1921l-54 26M6798 1458l-7 57M6820 2035l-55 67M6490 2061l-65 -27M6503 1817l-7 60M7289 2089l23 34M7433 2223l4 -4M6753 2044l-56 52M6871 1442l-73 16M6898 959l-49 -14M6765 2102l-57 50M6412 1567l-51 -33M5773 1457l-24 59M7246 2135l22 34M6143 1737l-64 11M6361 1534l-45 -34M7352 2177l20 14M6874 1225l-7 -44M6522 2230l-63 33M7132 2041l-30 81M6496 1877l-62 -23M6791 1515l-65 -51M6966 1149l-53 -33M6726 1464l-61 53M6428 1914l-64 -24M6960 1104l-55 -28M6664 1457l-61 52M6728 1310l-61 -24M6880 1748l44 59M7407 2139l-17 66M6824 1771l50 58M6345 2317l18 45M6100 1530l-60 7M7033 1892l12 67M6603 1509l-61 -23M6518 1617l-30 57M5838 1519l-21 56M6880 1748l-56 23M6160 1678l-17 59M6905 1076l63 -2M6467 1594l-38 55M6298 2496l-73 -33M6488 1937l-60 -23M7084 2071l18 51M5873 1512l-11 -48M6282 1552l-78 16M6372 1829l-69 26M6207 1720l-64 17M6476 2315l20 49M6900 1271l-34 36M6764 1781l-7 66M6429 1649l-50 -28M6815 1975l-63 4M6559 1562l18 72M6327 2697l-71 -26M6709 1786l-15 65M6296 2034l-65 -37M5873 1512l-22 54M7405 2214l-41 58M6425 2504l-76 -24M6900 1271l-67 -8M6412 1567l-87 24M6559 1562l-55 -21M7065 2019l67 22M7437 2219l-30 61M6217 2665l18 14M6361 1534l-79 18M6857 1551l12 62M6364 1890l-61 -35M6968 1074l-59 -26M6689 1977l3 64M6440 2394l-77 -32M6795 1574l19 60M6697 2096l-57 51M6282 1552l-35 51M6985 1056l-64 -29M6708 2152l-54 54M6625 1970l-5 63M6360 1951l-65 26M6247 1603l-21 59M6700 1351l-62 -23M5746 1525l-21 67M6073 1587l-33 -50M6315 1793l-12 62M6833 1263l-22 -44M7324 2042l-35 47M6640 2147l14 59M6973 1774l-49 33M6364 2611l-54 7M6276 2452l-73 -32M6620 2033l-67 -15M6234 1938l-3 59M6814 1634l-76 -48M6860 1095l-61 -10M6738 1586l-43 64M6534 2286l20 49M6133 1578l-33 -48M6616 1383l-7 62M6307 2151l10 55M6677 1585l-42 59M6278 1700l-71 20M6353 2674l-69 -22M6974 1848l59 44M6577 1634l29 73M6256 2671l-60 -25M6925 1874l57 47M6300 2095l-60 18M6393 2564l-51 13M6799 1085l48 -27M6635 1644l-58 -10M7174 2004l66 5M6584 1773l-12 62M6974 1848l-49 26M6429 1649l-80 28M6114 1631l-17 60M6815 1975l-62 69M6907 964l-46 -17M6414 2599l-72 -22M6577 1634l-59 -17M7212 1963l-38 41M5947 1659l-30 -49M6294 2703l-42 -15M6949 978l-51 -19M6753 2044l12 58M7174 2004l-42 37M7222 2095l24 40M6925 1574l-56 39M6697 2096l11 56M6503 1817l-55 -22M6054 1641l-57 12M6871 1442l-55 -32M6898 959l43 19M6816 1907l-1 68M6244 1819l-4 61M6240 1880l-6 58M7246 2135l-50 42M6826 1127l-60 -3M6780 1282l-52 28M6941 978l44 24M6264 2624l-47 0M7324 2042l-12 81M6331 2261l-72 -31M6867 1181l-41 -54M6408 1707l-75 27M6898 1668l34 55M6263 1757l-71 22M6752 1650l-25 67M6364 1890l-69 22M5966 1601l-19 58M6943 1015l-50 -32M6826 1127l-27 -42M6726 1464l-62 -7M6569 2135l-71 -18M6558 1959l-71 43M5851 1566l-13 -47M6290 2584l20 34M6295 1912l-61 26M6765 2102l12 56M6243 2591l21 33M6664 1457l-55 -12M7033 1892l60 31M6368 2521l-51 15M5778 1495l-19 15M6728 1310l-20 -60M6425 2034l4 62M7074 1856l-41 36M6196 2662l69 29M6037 1700l-55 11M6467 1594l21 80M6632 1846l-10 58M7033 1892l-51 29M6518 1617l-51 -23M5767 1470l-21 55M6467 1594l-55 -27M6498 2117l-60 34M6143 1737l-46 -46M7084 2071l-58 30M6893 983l-49 -24M6928 1947l15 60M6020 1594l-35 -48M6342 2577l-52 7M5759 1510l-13 15M7416 2221l-37 57M6648 1782l46 69M6810 1329l-38 35M7465 2149l-27 64M6871 1964l11 61M6310 2618l-46 6M6361 1534l-36 57M6709 1786l-61 -4M7333 2150l-43 45M5746 1525l10 -35M6503 1817l-69 37M6956 2069l-47 70M6898 959l-11 2M6256 2671l-39 -6M6316 1500l-34 52M6276 2452l22 44M6648 1782l-64 -9M6810 1329l-82 -19M6389 2237l14 53M6434 1854l-70 36M6876 959l31 5M6295 1912l-55 -32M6295 1977l-61 -39M6938 1176l-71 5M6689 1977l-64 -7M6226 1662l-19 58M6181 1622l-21 56M5985 1546l-24 -51M6625 1970l-67 -11M6700 1351l-33 -65M6857 1551l-66 -36M6179 1839l-5 58M7367 2100l-34 50M7438 2213l-30 56M6360 1951l-65 -39M6425 1976l-65 -25M7268 2169l-24 71M6677 1585l18 65M6428 1914l-68 37M6498 2117l-69 -21M6824 1771l-8 70M6477 2484l-72 -21M6614 1572l21 72M6738 1586l-61 -1M6192 1779l-63 17M5809 1526l-8 -43M6207 1720l-15 59M6677 1585l-63 -13M6303 1855l-8 57M6359 2006l2 62M6815 1975l5 60M6256 2405l20 47M7084 2071l-36 80M6079 1748l-11 62M6315 1793l-52 -36M6752 1979l1 65M6298 2496l19 40M6720 2206l-66 0M7026 2101l-37 73M6584 1773l-61 -22M6931 1214l-57 11M6559 1562l-41 55M7352 2177l-20 67M6907 964l42 14M6267 2547l23 37M6523 1751l-57 -17M7448 2162l-32 59M6949 978l39 18M6753 2044l-61 -3M6816 1907l55 57M7222 2095l-47 40M6378 2185l-71 -34M6925 1574l-68 -23M6931 1214l-64 -33M7065 2019l19 52M6577 2194l16 50M7295 2002l-6 87M6593 2244l15 54M6968 1074l-47 -47M6880 1144l-54 -17M6742 1409l-16 55M6403 2290l-58 27M7013 2048l13 53M6440 2394l-57 20M6628 2092l-66 -13M6408 1707l-22 57M6816 1907l-65 6M6985 1056l-42 -41M6364 2611l-74 -27M6675 1401l-11 56M6625 1970l-72 48M6816 1410l-74 -1M6349 1677l-16 57M6742 1409l-67 -8M5817 1575l-8 -49M6752 1650l-57 0M6943 1015l25 -4M6383 2414l22 49M6826 1127l34 -32M6504 1541l14 76M6294 2703l-59 -24M7462 2157l-25 62M6040 1537l-20 57M6333 1734l-55 -34M6765 2102l-68 -6M6974 1848l8 73M6632 1846l-60 -11M5809 1526l-29 13M6727 1717l37 64M6866 1307l-10 60M6925 1874l3 73M6893 983l-77 -18M6522 2230l-74 -22M6670 1713l39 73M6584 1773l-81 44M6923 983l-79 -24M6534 2286l-58 29M6907 964l-9 -5M6871 1964l72 43M6398 1483l-37 51M6727 1717l-57 -4M6523 1751l-75 44M6893 983l30 0M6949 978l-8 0M6928 1947l-57 17M6956 2069l16 53M6562 2079l-72 -18M7222 2095l-26 82M6871 1964l-56 11M6847 1058l-62 -7M6890 2087l19 52M6798 1458l-72 6M5734 1552l15 -36M6941 978l-54 -17M6569 2135l-62 40M6640 2147l-63 47M6918 1341l-52 -34M6372 1829l-8 61M6487 2002l3 59M5789 1584l-9 -45M6179 1839l-62 15M6448 2208l-70 -23M6810 1329l-30 -47M7372 2191l18 14M7390 2205l15 9M5830 1472l-21 54M5756 1490l-7 26M6247 1603l-43 -35M7347 2072l-35 51M6973 1684l-75 -16M6809 1171l-56 0M5809 1526l-20 58M7198 2052l24 43M6438 2151l10 57M6898 1668l-18 80M6727 1521l11 65M5893 1561l-20 -49M5985 1546l-19 55M5851 1566l-34 9M6235 2679l-39 -17M6843 1698l-19 73M6243 2508l24 39M7426 2145l-21 69M6361 2068l-61 27M6434 1854l-6 60M6129 1796l-50 -48M6459 2263l-70 -26M6824 1771l-60 10M6317 2536l-50 11M6547 1693l37 80M6369 2128l9 57M6342 2577l-75 -30M6267 2547l-72 -33M7026 2101l22 50M7312 2123l-22 72M6311 2711l-46 -20M6856 1367l15 75M6542 1486l-38 55M6160 1678l-63 13M6331 2261l14 56M6752 1979l-63 -2M6244 1819l-65 20M6593 2244l-59 42M6278 1700l-15 57M6648 1782l-16 64M7045 1959l20 60M6871 1964l-51 71M6811 1219l-57 7M6429 2096l9 55M5997 1653l-31 -52M6856 1367l-40 43M6097 1691l-18 57M7013 2048l71 23M6697 2096l-69 -4M7261 2053l28 36M6622 1904l-64 55M6932 1723l-8 84M6383 2641l-73 -23M7352 2177l-41 49M7065 2019l-52 29M6425 1976l-66 30M6811 1219l-58 -48M6378 2185l11 52M6553 2018l-63 43M6857 1551l-62 23M7333 2150l-22 76M6562 2079l-64 38M7426 2145l-36 60M7347 2072l-14 78M7438 2157l-33 57M7006 1045l-63 -30M6558 1959l-5 59M6458 2441l-75 -27M7013 2048l-57 21M6440 2394l18 47M6795 1574l-57 12M5900 1455l-27 57M6408 1707l-59 -30M6040 1537l-55 9M6816 1410l-44 -46M6300 2095l-66 -37M6307 2151l-57 21M6349 1677l-53 -35M6654 2206l7 52M6742 1409l-42 -58M6020 1594l-23 59M6368 2521l25 43M6420 2341l-75 -24M5778 1495l-20 57M6204 1568l-71 10M6860 1095l-13 -37M6614 1572l-37 62M6349 2480l-51 16M7151 1945l23 59M6162 1523l-29 55M6054 1641l-34 -47M6870 1895l58 52M6911 1394l-40 48M7110 1987l22 54M7427 2223l-37 61M6265 2691l-57 -27M6523 1751l-20 66M6073 1587l-19 54M6322 2713l-57 -22M6925 1874l-55 21M6752 1979l-60 62M7392 2121l-40 56M6466 1734l-18 61M5893 1561l-42 5M6870 1895l-54 12M6296 1642l-70 20M6988 996l-47 -18M7175 2135l21 42M6507 2175l-69 -24M6308 2386l-52 19M6956 2069l-66 18M6114 1631l-60 10M6079 1748l-55 13M6890 2087l-60 7M6798 1458l-56 -49M5966 1601l-49 9M7013 2048l-41 74M6235 2679l17 9M5759 1510l8 -40M6349 2480l19 41M6331 2261l-58 26M6675 1401l-66 44M6640 2147l-71 -12M6349 1677l-71 23M6780 1282l-72 -32M6843 1698l37 50M7021 1820l12 72M6628 2092l-59 43M7198 2052l-43 40M6788 1707l36 64M6898 1668l-55 30M6240 1880l-66 17M6874 993l-73 -16M6308 2386l-71 -31M6310 2618l26 31M5851 1566l-14 59M6504 1541l-37 53M6843 1698l-55 9M6329 2435l-73 -30M6360 1951l-1 55M6240 2652l16 19M6858 1007l16 -14M6290 2334l18 52M6448 1513l-36 54M6459 2263l-56 27M6393 2564l-76 -28M6434 1854l-62 -25M6280 2691l14 12M6751 1913l64 62M6487 2002l-62 -26M6240 2652l-44 -6M6459 2263l17 52M6727 1717l-18 69M6403 2290l17 51M5874 1619l-23 -53M6751 1913l-61 -3M6542 1486l17 76M6425 2034l-64 34M6405 2463l-56 17M6192 1779l-49 -42M6874 1225l-41 38M6670 1713l-22 69M7268 2169l22 26M6428 1914l-3 62M6429 2096l-60 32M6179 1839l-50 -43M7026 2101l-54 21M6923 983l-47 -24M6097 1691l-60 9M7045 1959l65 28M6606 1707l-22 66M6389 2237l-58 24M6252 2688l-56 -26M6957 988l-50 -24M6290 2584l-47 7M6542 1486l-46 -20M6997 1989l68 30M6067 1483l-27 54M6859 1492l-2 59M7405 2214l11 7M5916 1502l-43 10M6622 1904l3 66M7045 1959l-48 30M6847 1058l-63 -37M6791 1515l4 59M6890 2087l-48 65M6563 1898l-5 61M6307 2676l-51 -5M6244 1819l-52 -40M6830 2094l-53 64M6859 1492l-68 23M5916 1502l-23 59M6900 1271l-26 -46M6361 2068l-65 -34M7261 2053l-39 42M7312 2123l21 27M6234 1938l-61 22M6405 2463l-76 -28M6932 1723l-52 25M6379 1621l-54 -30M6307 2676l-67 -24M6811 1219l-2 -48M6938 1176l-58 -32M6368 2521l-70 -25M6020 1594l-54 7M7198 2052l-23 83M5778 1495l6 -45M6558 1959l-70 -22M6795 1574l-68 -53M6913 1116l-53 -21M6143 1737l-14 59M6727 1521l-50 64M6010 1493l-25 53M6496 2364l-76 -23M6938 1176l-25 -60M6665 1517l-51 55M6315 1793l-71 26M6425 2034l-66 -28M6620 2033l-58 46M6924 1807l50 41M7367 2100l-15 77M6329 2435l-53 17M6263 1757l-19 62M6874 1829l51 45M6364 1890l-4 61M6438 2151l-60 34M6860 1095l45 -19M6614 1572l-55 -10M7110 1987l64 17M6547 1693l-24 58M6924 1807l-50 22M5985 1546l-46 5M6751 1913l-62 64M6295 1977l1 57M6991 998l-42 -20M7151 1945l-41 42M6476 2315l-73 -25M6488 1674l-22 60M5917 1610l-24 -49M6882 2025l74 44M7110 1987l-45 32M5817 1575l-28 9M7155 2092l20 43M6916 1516l-59 35M6342 2577l22 34M6336 2649l-72 -25M6692 2041l-64 51M6833 1263l-23 66M6359 2006l-63 28M6466 1734l-58 -27M7372 2191l-22 67M6708 2152l12 54M6490 2061l8 56M6911 1394l-55 -27M6757 1847l-6 66M6349 2480l-73 -28M6369 2128l-62 23M6997 1989l-41 80M6345 2712l-65 -21M7175 2135l-48 34M6833 1263l-53 19M6308 2386l21 49M7261 2053l-15 82M5939 1551l-23 -49M6329 2435l20 45M6372 1829l-57 -36M7132 2041l66 11M6379 1621l-83 21M6869 1613l29 55M6909 1048l-62 -18M6181 1622l-48 -44M6880 1144l-20 -49M6458 2441l-53 22M6280 2691l-45 -12M6296 1642l-18 58M6692 2041l5 55M6675 1401l-59 -18M6577 2194l-55 36M7457 2159l-30 64M6780 1282l-26 -56M7021 1820l-47 28M5817 1575l-14 59M6448 1513l19 81M6378 2185l-61 21M6504 1541l-56 -28M5997 1653l-15 58M6448 1513l-50 -30M6609 1445l-6 64M6695 1650l-25 63M7390 2205l-40 53M6968 1011l-45 -28M6870 1895l1 69M6871 1442l45 74M6296 2034l-62 24M6606 1707l42 75M7405 2214l-26 64M6866 1307l-56 22M6670 1713l-64 -6M6466 1734l-80 30M6882 2025l-52 69M6923 983l34 5M6317 2206l-67 -34M6412 1567l17 82M6278 1700l-52 -38M6606 1707l-59 -14M7175 2135l-30 75M5838 1519l-29 7M6830 2094l12 58M7240 2009l-42 43M6235 1508l-31 60M6921 1027l-63 -20M6947 1633l-49 35M6622 1904l-59 -6M6847 1058l0 -28M6420 2341l20 53M6931 1457l-60 -15M6264 2624l20 28M5780 1539l-22 13M6563 1898l-67 -21M6859 1492l-61 -34M5746 1525l-12 27M6100 1530l-27 57M7312 2123l-44 46M6728 1310l-28 41M5759 1510l-20 59M7427 2223l6 0M6665 1517l12 68M6809 1171l-43 -47M6247 1603l-66 19M6448 1795l-76 34M6788 1707l-24 74M6226 1662l-66 16M6874 993l-58 -28M6603 1509l11 63M6727 1521l-62 -4M5893 1561l-19 58M5838 1519l-8 -47M7390 2205l-26 67M6553 2018l9 61M7333 2150l19 27M6295 1977l-64 20M6133 1578l-19 53M6665 1517l-62 -8M5862 1464l-24 55M6448 1513l-87 21M6284 2652l23 24M6913 1116l47 -12M6448 2208l-59 29M6751 1913l1 66M6217 2624l23 28M6488 1674l35 77M6336 2649l-52 3M6226 1662l-45 -40M6690 1910l-1 67M7093 1923l-48 36M6515 2411l-75 -17M6547 1693l-59 -19M6488 1937l-63 39M5801 1483l-23 12M6488 1674l-59 -25M6204 1568l-23 54M6620 2033l8 59M7155 2092l-53 30M6757 1847l59 60M6957 988l-8 -10M6916 1516l-57 -24M6997 1989l16 59M7240 2009l-18 86M6772 1364l-30 45M6943 2007l13 62M6129 1796l-12 58M7437 2219l-33 66M6379 1621l-30 56M6757 1847l-63 4M6700 1351l-25 50M6563 1898l-75 39M6856 1367l-84 -3M5784 1450l-25 60M6325 1591l-29 51M7372 2191l-40 53M6496 1877l-68 37M6772 1364l-72 -13M5756 1490l-22 62M6114 1631l-41 -44M6240 2652l-67 -31M7437 2219l1 -6M5749 1516l-19 56M6880 1144l33 -28M6496 1466l8 75M6569 2135l8 59M6235 2679l-58 -27M6296 1642l-49 -39M6692 2041l-72 -8M7433 2223l-34 61M6296 2034l4 61M6675 1401l-37 -73M6445 1435l3 78M6869 1613l-74 -39M7416 2221l11 2M6905 1076l-58 -46M6420 2341l-57 21M5756 1490l17 -33M6708 2152l-68 -5M6160 1678l-46 -47M6924 1807l1 67M5961 1495l-22 56M7392 2121l-20 70M6240 1880l-61 -41M6695 1650l32 67M6874 1829l-4 66M6968 1011l-75 -28M6654 2206l-61 38M6488 1937l-1 65M6635 1644l35 69M6628 2092l12 55M6816 1841l0 66M6079 1748l-42 -48M6996 1013l-73 -30M5767 1470l-11 20M6695 1650l-60 -6M6488 1674l-80 33M6311 2711l-59 -23M6522 2230l12 56M6882 2025l8 62M7268 2169l-46 41M7155 2092l-28 77M7463 2144l-25 69M6345 2317l-72 -30M6572 1835l50 69M6820 2035l10 59M7438 2213l-31 67M6181 1622l-67 9M6386 1764l-71 29M6429 2096l-68 -28M6593 2244l-71 -14M6572 1835l-69 -18M6866 1307l-33 -44M6954 1266l-80 -41M6861 947l37 12M6037 1700l-40 -47M6830 2094l-65 8M6295 1912l0 65M7289 2089l-43 46M6947 1633l-78 -20M6867 1181l-58 -10M7132 2041l23 51M6869 1613l-26 85M5802 1439l-24 56M6448 2208l11 55M6777 2158l-69 -6M6476 2315l-56 26M6909 1048l-51 -41M6726 1464l1 57M6814 1634l-26 73M6448 1795l-14 59M6921 1027l-47 -34M6327 2697l-47 -6M6664 1457l1 60M6363 2362l-55 24M6487 2002l-62 32M6654 2206l-77 -12M6661 2258l-68 -14M6303 1855l-63 25M5917 1610l-18 58M6386 1764l-14 65M6040 1537l-30 -44M6425 1976l0 58M6809 1171l17 -44M6562 2079l7 56M6788 1707l-61 10M6444 2546l-76 -25M6498 2117l9 58M6874 993l19 -10M7462 2157l-29 66M5780 1539l-2 -44M6518 1617l29 76M6507 2175l15 55M6694 1851l-4 59M6609 1445l-67 41M6284 2652l-44 0M6310 2618l-67 -27M7407 2139l-35 52M5939 1551l-22 59M6490 2061l-61 35M6690 1910l-68 -6M6764 1781l52 60M6982 1921l15 68M6709 1786l48 61M6874 1225l-63 -6M6918 1341l-62 26M5997 1653l-50 6M6267 2547l-48 7M6256 2671l24 20M7465 2149l-28 70M6412 1567l-33 54M6764 1781l-55 5M6572 1835l-76 42M6997 1989l-54 18M6874 1225l-65 -54M6207 1720l-47 -42M6333 1734l-70 23M7289 2089l-21 80M6317 2536l25 41M6496 1877l-8 60M6943 2007l-61 18M6359 2006l-64 -29M6791 1515l-64 6M6856 1367l-46 -38M6325 1591l-43 -39M7416 2221l-26 63M6772 1364l-44 -54M6405 2463l20 41M6554 2335l-78 -20M6282 1552l-47 -44M6192 1779l-13 60M6905 1076l-58 -18M6496 2364l-56 30M6300 2095l7 56M6204 1568l-42 -45M6345 2317l-55 17M6913 1116l-8 -40M6738 1586l14 64M6603 1509l-44 53M6880 1748l-6 81M6577 2194l-70 -19M6905 1076l4 -28M6317 2206l14 55M6073 1587l-53 7M7093 1923l17 64M6425 2504l-57 17M7438 2157l-22 64M6816 1841l54 54M6369 2128l-69 -33M7427 2223l-28 61M6874 1829l-58 12M5966 1601l-27 -50M6690 1910l-65 60M6361 2068l8 60M5917 1610l-43 9M6584 1773l48 73M6054 1641l-17 59M6429 1649l-21 58M6252 2688l13 3M6816 1841l-59 6M5873 1512l-35 7M6264 2624l-70 -31M6383 2414l-54 21M6882 2025l-62 10M6333 1734l-18 59M6097 1691l-43 -50M6608 2298l-74 -12M6820 2035l-67 9M6276 2452l-51 11M5939 1551l-46 10M6816 1410l-18 48M5739 1569l7 -44M6403 2290l-72 -29M6325 1591l-78 12M6833 1263l-79 -37M6814 1634l29 64M5780 1539l-17 57M6689 1977l-69 56M6973 1774l1 74M6290 2584l-71 -30M6037 1700l-13 61M6363 2362l-73 -28M5779 1437l-23 53M7132 2041l-48 30M6752 1650l36 57M6869 1613l-55 21M6284 2652l-67 -28M6133 1578l-60 9M6234 1938l-60 -41M6943 1015l-69 -22M6909 1048l12 -21M6383 2414l-75 -28M7448 2162l-21 61M6496 1466l-48 47M6814 1634l-62 16M6129 1796l-61 14M6448 1795l-62 -31M6507 2175l-59 33M6534 2286l-75 -23M6921 1027l22 -12M6867 1181l13 -37M6363 2362l20 52M6307 2151l-67 -38M6386 1764l-53 -30M6694 1851l57 62M6389 2237l-72 -31M6726 1464l-51 -63M6553 2018l-66 -16M6263 1757l-56 -37"/>
<linearGradient id="bg" x1="0" y1="0" x2="0" y2="1"><stop offset="0" stop-color="#7cc5e9"/><stop offset="1" stop-color="#c6e6f6"/></linearGradient>
<clipPath id="sc"><ellipse cx="660.5" cy="183.5" rx="91.5" ry="92.5"/></clipPath>
<clipPath id="stc"><path d="M581.2 153.2C585.6 154.0 599.0 157.1 607.2 157.9C615.5 158.7 623.3 159.1 630.8 157.9C638.3 156.7 645.8 154.0 652.1 150.8C658.4 147.7 663.9 143.3 668.6 139.0C673.3 134.7 676.9 130.8 680.4 124.9C683.9 119.0 688.3 107.1 689.8 103.6C688.8 108.3 684.7 123.3 683.7 131.9C682.7 140.6 682.7 148.1 683.7 155.5C684.7 163.0 686.5 170.1 689.8 176.8C693.2 183.5 698.9 190.6 704.0 195.7C709.1 200.8 715.0 203.9 720.5 207.5C726.0 211.0 734.3 215.3 737.1 216.9C732.7 215.3 719.3 209.2 711.1 207.5C702.8 205.7 695.0 205.4 687.5 206.5C680.0 207.7 672.5 210.9 666.2 214.6C659.9 218.3 654.4 223.6 649.7 228.7C645.0 233.8 641.4 239.7 637.9 245.3C634.4 250.8 630.0 259.0 628.5 261.8C629.2 257.4 632.4 244.1 633.2 235.8C634.0 227.5 634.4 219.7 633.2 212.2C632.0 204.7 629.6 197.2 626.1 191.0C622.6 184.7 616.7 179.2 611.9 174.4C607.2 169.7 602.9 166.2 597.8 162.6C592.7 159.1 584.0 154.8 581.2 153.2Z"/></clipPath>
<radialGradient id="shade" cx="660.5" cy="183.5" r="92" gradientUnits="userSpaceOnUse"><stop offset="0.9" stop-color="#000" stop-opacity="0"/><stop offset="0.98" stop-color="#000" stop-opacity="0.2"/><stop offset="1" stop-color="#000" stop-opacity="0.5"/></radialGradient>
<radialGradient id="blob"><stop offset="0" stop-color="#000" stop-opacity="0.95"/><stop offset="0.6" stop-color="#000" stop-opacity="0.75"/><stop offset="1" stop-color="#000" stop-opacity="0"/></radialGradient>
<radialGradient id="gshade" cx="662" cy="180" r="80" gradientUnits="userSpaceOnUse"><stop offset="0" stop-color="#5fd45f"/><stop offset="1" stop-color="#16a816"/></radialGradient>
</defs>
<rect x="468" y="38" width="397" height="291" fill="url(#bg)"/>
<g stroke="#8a8680" stroke-width="1" fill="none">
<path d="M540 127.2L704.2 55.4M558 127.8L716 59M574 128.3L725.5 62.6M559 119.3L589 122M621.7 90.5L641.7 95M687 62.6L708 68.5"/>
<path d="M712 97L736 85.2M713 76.7L725.5 103.8"/>
<path d="M536.2 138L605.3 292.8M554 138L622.4 281M570.3 138L634 290.6M543.9 155.2L573.5 153.4M571 222.4L590 216M599 284L628.8 275.7"/>
<path d="M748.4 217.9L788 207M765.6 202.8L779 231.5"/>
</g>
<ellipse cx="681" cy="181" rx="86.5" ry="88.5" fill="#000"/>
<g clip-path="url(#sc)">
<ellipse cx="660.5" cy="183.5" rx="91.5" ry="92.5" fill="#e6e6e6"/>
<use href="#mesh" stroke="#000" stroke-width="10" fill="none"/>
<ellipse cx="660.5" cy="183.5" rx="91.5" ry="92.5" fill="url(#shade)"/>
<ellipse cx="660.5" cy="183.5" rx="91.5" ry="92.5" fill="none" stroke="#000" stroke-width="3"/>
<ellipse cx="703" cy="108" rx="18" ry="17" fill="url(#blob)"/>
<ellipse cx="582" cy="168" rx="17" ry="26" fill="url(#blob)"/>
<ellipse cx="738" cy="226" rx="20" ry="14" fill="url(#blob)"/>
<ellipse cx="636" cy="262" rx="22" ry="15" fill="url(#blob)"/>
<ellipse cx="598" cy="238" rx="16" ry="18" fill="url(#blob)" opacity="0.5"/>
<ellipse cx="612" cy="122" rx="14" ry="14" fill="url(#blob)" opacity="0.45"/>
</g>
<path d="M581.2 153.2C585.6 154.0 599.0 157.1 607.2 157.9C615.5 158.7 623.3 159.1 630.8 157.9C638.3 156.7 645.8 154.0 652.1 150.8C658.4 147.7 663.9 143.3 668.6 139.0C673.3 134.7 676.9 130.8 680.4 124.9C683.9 119.0 688.3 107.1 689.8 103.6C688.8 108.3 684.7 123.3 683.7 131.9C682.7 140.6 682.7 148.1 683.7 155.5C684.7 163.0 686.5 170.1 689.8 176.8C693.2 183.5 698.9 190.6 704.0 195.7C709.1 200.8 715.0 203.9 720.5 207.5C726.0 211.0 734.3 215.3 737.1 216.9C732.7 215.3 719.3 209.2 711.1 207.5C702.8 205.7 695.0 205.4 687.5 206.5C680.0 207.7 672.5 210.9 666.2 214.6C659.9 218.3 654.4 223.6 649.7 228.7C645.0 233.8 641.4 239.7 637.9 245.3C634.4 250.8 630.0 259.0 628.5 261.8C629.2 257.4 632.4 244.1 633.2 235.8C634.0 227.5 634.4 219.7 633.2 212.2C632.0 204.7 629.6 197.2 626.1 191.0C622.6 184.7 616.7 179.2 611.9 174.4C607.2 169.7 602.9 166.2 597.8 162.6C592.7 159.1 584.0 154.8 581.2 153.2Z" fill="#8ee88e"/>
<g clip-path="url(#stc)"><use href="#smesh" stroke="#0c9e0c" stroke-width="10" fill="none"/></g>
<path d="M581.2 153.2C585.6 154.0 599.0 157.1 607.2 157.9C615.5 158.7 623.3 159.1 630.8 157.9C638.3 156.7 645.8 154.0 652.1 150.8C658.4 147.7 663.9 143.3 668.6 139.0C673.3 134.7 676.9 130.8 680.4 124.9C683.9 119.0 688.3 107.1 689.8 103.6C688.8 108.3 684.7 123.3 683.7 131.9C682.7 140.6 682.7 148.1 683.7 155.5C684.7 163.0 686.5 170.1 689.8 176.8C693.2 183.5 698.9 190.6 704.0 195.7C709.1 200.8 715.0 203.9 720.5 207.5C726.0 211.0 734.3 215.3 737.1 216.9C732.7 215.3 719.3 209.2 711.1 207.5C702.8 205.7 695.0 205.4 687.5 206.5C680.0 207.7 672.5 210.9 666.2 214.6C659.9 218.3 654.4 223.6 649.7 228.7C645.0 233.8 641.4 239.7 637.9 245.3C634.4 250.8 630.0 259.0 628.5 261.8C629.2 257.4 632.4 244.1 633.2 235.8C634.0 227.5 634.4 219.7 633.2 212.2C632.0 204.7 629.6 197.2 626.1 191.0C622.6 184.7 616.7 179.2 611.9 174.4C607.2 169.7 602.9 166.2 597.8 162.6C592.7 159.1 584.0 154.8 581.2 153.2Z" fill="none" stroke="#109a10" stroke-width="1"/>
<path d="M695 95L715.5 99.8" stroke="#a4a4a4" stroke-width="2.6"/>
<path d="M570.5 146.5L576 148.5" stroke="#000" stroke-width="2.5"/>
<g font-family="Liberation Sans" font-size="10px" fill="#000">
<text x="706.5" y="55" letter-spacing="-0.6">10</text><text x="719.3" y="59">5</text><text x="728.3" y="63">0</text>
<text x="739.3" y="86">5</text><text x="765.7" y="147.3">0</text><text x="789.5" y="209.3" letter-spacing="-0.8">-5</text>
<text x="778.3" y="240.7">5</text><text x="717.5" y="265.7">0</text><text x="656" y="292" letter-spacing="-0.8">-5</text>
</g>
<path d="M748.4 217.9L770 212" stroke="#9a9690" stroke-width="1.2"/>
<path d="M655.2 276L657.9 281.6" stroke="#8a8680" stroke-width="1"/>
<g stroke-width="1.3">
<line x1="497" y1="295.8" x2="491" y2="279" stroke="#2ec82e"/>
<path d="M490.7 276 L489 281 L493 280.5Z" fill="#2ec82e" stroke="none"/>
<line x1="497" y1="295.8" x2="515" y2="288" stroke="#e82020"/>
<path d="M518.5 286.9 L513.5 285.5 L515 290Z" fill="#e82020" stroke="none"/>
<path d="M492 294 h4 l-4 3 h4" stroke="#0000e0" fill="none"/>
<ellipse cx="497" cy="296" rx="2.5" ry="1.8" fill="#0000e0" stroke="none"/>
</g>
<g font-family="Liberation Sans" font-size="10" fill="#000"><text x="485" y="273">y</text><text x="520" y="289">x</text></g>
<g fill="none" stroke="#e8f4fb" stroke-width="0.45" opacity="0.8" font-family="Liberation Sans" font-size="6.5px">
<text x="793.8" y="54" textLength="37" lengthAdjust="spacingAndGlyphs">COMSOL</text>
<text x="767.7" y="61" textLength="62" lengthAdjust="spacingAndGlyphs">MULTIPHYSICS</text>
</g>
<path d="M837 50 L846 47.5 L851 50.5 L850.5 58.5 L842 61.5 L837 58.5 Z" fill="#a9d3ee" stroke="#e8f4fb" stroke-width="0.9" opacity="0.9"/>
<path d="M841 51 Q846 49 848 53 Q845 56 848 59 M840 57 Q843 55 845 58" fill="none" stroke="#4d9fd6" stroke-width="1.3" opacity="0.8"/>
<path d="M837 50 L842 53 L851 50.5 M842 53 L842 61.5" fill="none" stroke="#e8f4fb" stroke-width="0.6" opacity="0.8"/>
</svg><!--/VIEW-->
<div class="a" style="left:466px;top:329px;width:399px;height:1px;background:#8f8f8f"></div>

<!-- messages panel -->
<div class="a" style="left:466px;top:330px;width:399px;height:115px;background:#e6e6e6"></div>
<svg class="a" style="left:466px;top:330px" width="399" height="52" viewBox="466 330 399 52">
<defs>
<linearGradient id="tg" x1="0" y1="0" x2="0" y2="1"><stop offset="0" stop-color="#fdfdfd"/><stop offset="1" stop-color="#e9e9e9"/></linearGradient>
<linearGradient id="tg2" x1="0" y1="0" x2="0" y2="1"><stop offset="0" stop-color="#ececec"/><stop offset="1" stop-color="#e2e2e2"/></linearGradient>
</defs>
<path d="M466 356.5 V339 Q466 333.5 472 333.5 H859 Q863 333.5 865 336 V356.5Z" fill="url(#tg2)" stroke="#a8a8a8" stroke-width="1"/>
<path d="M654.5 356 V340 Q654.5 334 648 333.5" fill="none" stroke="#a8a8a8" stroke-width="1"/>
<path d="M702.5 356 V340 Q702.5 334 696 333.5" fill="none" stroke="#a8a8a8" stroke-width="1"/>
<path d="M466.5 381 V339 Q466.5 333.5 472 333.5 H553 Q560 333.5 566 339 L577 350 Q583 356 592 356 H865 V381Z" fill="url(#tg)" stroke="none"/>
<path d="M466.5 356 V339 Q466.5 333.5 472 333.5 H553 Q560 333.5 566 339 L577 350 Q583 356 592 356 H865" fill="none" stroke="#9c9c9c" stroke-width="1"/>
<rect x="466" y="357" width="399" height="24" fill="#e6e6e6"/>
<line x1="466.5" y1="333" x2="466.5" y2="445" stroke="#a0a0a0" stroke-width="1"/>
<rect x="469.5" y="340.5" width="14" height="9" fill="#fff" stroke="#3d6eb8" stroke-width="1.2"/>
<path d="M470 341 L476.5 346.5 L483 341 M470 349 L474.5 345 M483 349 L478.5 345" fill="none" stroke="#3d6eb8" stroke-width="1"/>
<path d="M549 341.5 L551 340.3 L553.8 343.2 L556.6 340.3 L558.6 341.5 L555.6 345 L558.6 348.5 L556.6 349.8 L553.8 346.8 L551 349.8 L549 348.5 L552 345Z" fill="#fff" stroke="#111" stroke-width="1"/>
<rect x="584.5" y="342.5" width="14.5" height="4.6" fill="#e8e8e8" stroke="#777" stroke-width="1"/>
<rect x="586" y="343.6" width="8.5" height="2.5" fill="#3caa3c"/>
<path d="M587.7 343.5 V346.2 M589.6 343.5 V346.2 M591.5 343.5 V346.2 M593.4 343.5 V346.2" stroke="#c8eac8" stroke-width="0.6"/>
<rect x="659.5" y="338.5" width="15" height="12" fill="#fff" stroke="#6a6a6a" stroke-width="1"/>
<path d="M662 341 h1 M665 341 h1 M668 341 h1 M671 341 h1 M662 343.5 h1 M665 343.5 h1 M668 343.5 h1 M671 343.5 h1 M662 346 h1 M665 346 h1 M668 346 h1 M671 346 h1 M662 348.5 h1 M665 348.5 h1 M668 348.5 h1 M671 348.5 h1" stroke="#3d6eb8" stroke-width="1.2"/>
<rect x="833.5" y="338.5" width="9" height="3.5" fill="#fff" stroke="#111" stroke-width="1"/>
<rect x="851.5" y="338.5" width="9.5" height="9.5" fill="#fff" stroke="#111" stroke-width="1"/>
<line x1="851.5" y1="340.5" x2="861" y2="340.5" stroke="#111" stroke-width="1.3"/>
<line x1="475" y1="362" x2="479" y2="371" stroke="#9a7a50" stroke-width="1.2"/>
<path d="M477.5 370.5 Q479.5 369 481 371 L485 376.5 Q481.5 378.5 478 377.5 Z" fill="#e9cfa6" stroke="#a88860" stroke-width="0.6"/>
<line x1="477.5" y1="371" x2="481" y2="370.5" stroke="#d85a3a" stroke-width="0.9"/>
<line x1="466" y1="381.5" x2="865" y2="381.5" stroke="#7c7c7c" stroke-width="1"/>
</svg>
<div class="t" style="left:489px;top:339px;font-size:11px">Messages</div>
<div class="t" style="left:604px;top:339px;font-size:11px">Progress</div>
<div class="t" style="left:679px;top:339px;font-size:11px">Log</div>
<div class="a" style="left:467px;top:382px;width:398px;height:61px;background:#fff;overflow:hidden">
<div class="t" style="left:1px;top:-2px;line-height:12.9px">Mesh warning (ftet2): Face is (or has a narrow region that is) much smaller
Mesh warning (ftet1): Face is (or has a narrow region that is) much smaller
Mesh warning (ftet1): Number of inverted elements: 1
Mesh error (bl1): Failed to create boundary layer mesh.</div>
</div>
<div class="a" style="left:466px;top:444px;width:399px;height:1px;background:#d0d0d0"></div>

</body></html>
